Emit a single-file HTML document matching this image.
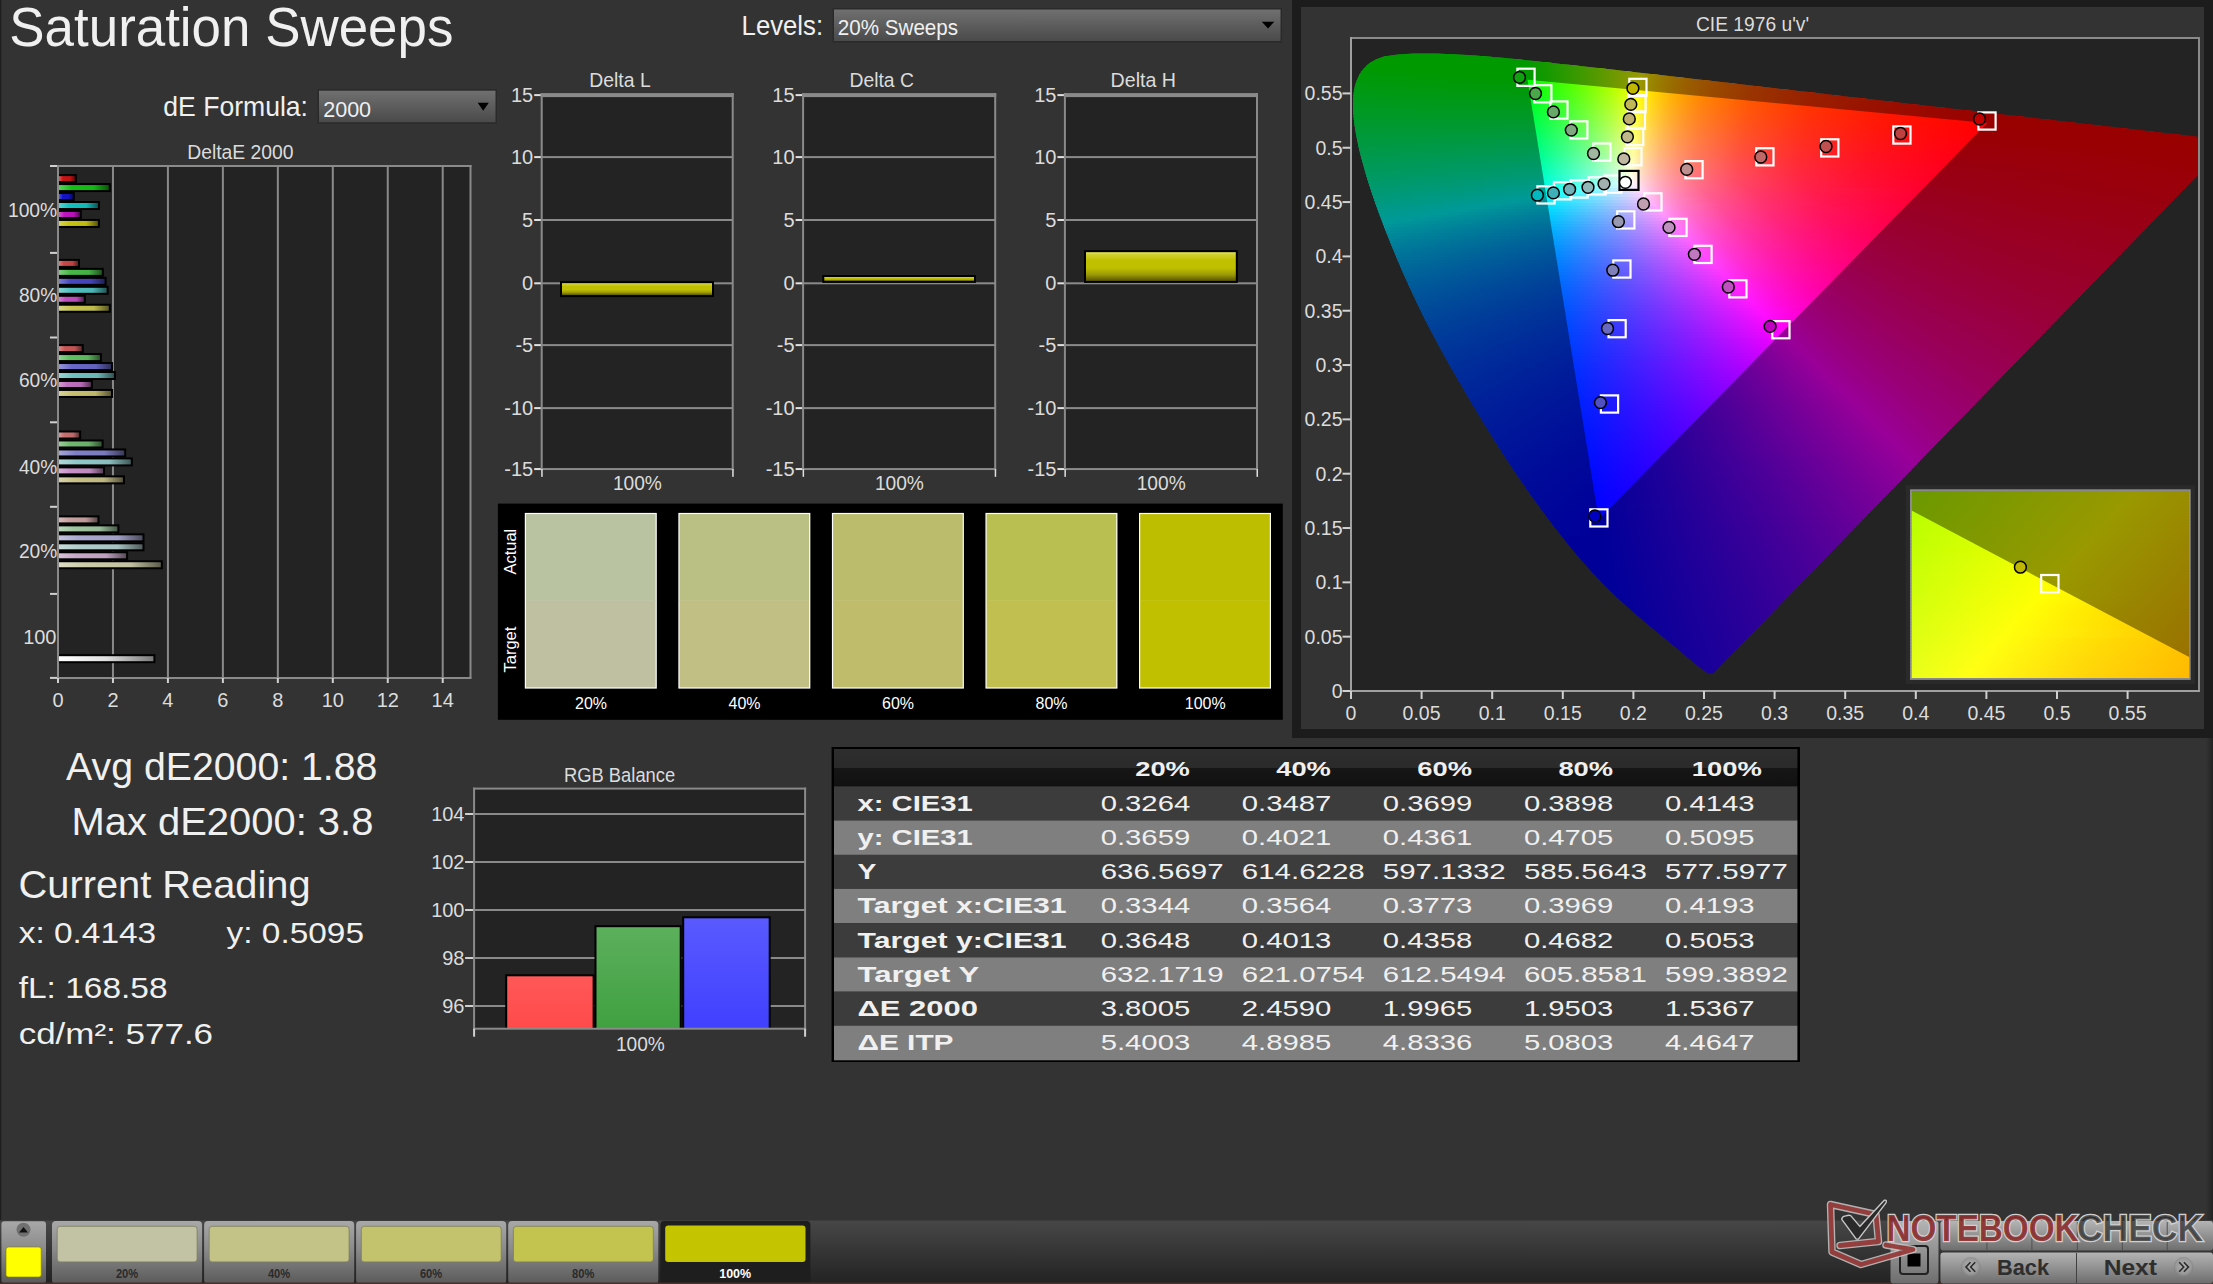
<!DOCTYPE html>
<html><head><meta charset="utf-8"><title>Saturation Sweeps</title>
<style>html,body{margin:0;padding:0;background:#333;overflow:hidden;width:2213px;height:1284px}svg{display:block}text{font-family:"Liberation Sans", sans-serif}</style>
</head><body>
<svg width="2213" height="1284" viewBox="0 0 2213 1284" font-family='"Liberation Sans", sans-serif'>
<defs><linearGradient id="rs" x1="0" y1="0" x2="1" y2="0"><stop offset="0" stop-color="#333"/><stop offset="1" stop-color="#222"/></linearGradient><linearGradient id="dd" x1="0" y1="0" x2="0" y2="1"><stop offset="0" stop-color="#707070"/><stop offset="1" stop-color="#4a4a4a"/></linearGradient><linearGradient id="b1" x1="0" y1="0" x2="1" y2="0"><stop offset="0" stop-color="#d85a5a"/><stop offset="0.25" stop-color="#c81414"/><stop offset="0.7" stop-color="#be1313"/><stop offset="1" stop-color="#5a0909"/></linearGradient><linearGradient id="b2" x1="0" y1="0" x2="1" y2="0"><stop offset="0" stop-color="#5ad35a"/><stop offset="0.25" stop-color="#14c014"/><stop offset="0.7" stop-color="#13b613"/><stop offset="1" stop-color="#095609"/></linearGradient><linearGradient id="b3" x1="0" y1="0" x2="1" y2="0"><stop offset="0" stop-color="#5a5ad8"/><stop offset="0.25" stop-color="#1414c8"/><stop offset="0.7" stop-color="#1313be"/><stop offset="1" stop-color="#09095a"/></linearGradient><linearGradient id="b4" x1="0" y1="0" x2="1" y2="0"><stop offset="0" stop-color="#5ad3d3"/><stop offset="0.25" stop-color="#14c0c0"/><stop offset="0.7" stop-color="#13b6b6"/><stop offset="1" stop-color="#095656"/></linearGradient><linearGradient id="b5" x1="0" y1="0" x2="1" y2="0"><stop offset="0" stop-color="#d35ad3"/><stop offset="0.25" stop-color="#c014c0"/><stop offset="0.7" stop-color="#b613b6"/><stop offset="1" stop-color="#560956"/></linearGradient><linearGradient id="b6" x1="0" y1="0" x2="1" y2="0"><stop offset="0" stop-color="#d8d65a"/><stop offset="0.25" stop-color="#c8c414"/><stop offset="0.7" stop-color="#beba13"/><stop offset="1" stop-color="#5a5809"/></linearGradient><linearGradient id="b7" x1="0" y1="0" x2="1" y2="0"><stop offset="0" stop-color="#d87f7f"/><stop offset="0.25" stop-color="#c84848"/><stop offset="0.7" stop-color="#be4444"/><stop offset="1" stop-color="#5a2020"/></linearGradient><linearGradient id="b8" x1="0" y1="0" x2="1" y2="0"><stop offset="0" stop-color="#7fcd7f"/><stop offset="0.25" stop-color="#48b848"/><stop offset="0.7" stop-color="#44af44"/><stop offset="1" stop-color="#205320"/></linearGradient><linearGradient id="b9" x1="0" y1="0" x2="1" y2="0"><stop offset="0" stop-color="#7f7fd3"/><stop offset="0.25" stop-color="#4848c0"/><stop offset="0.7" stop-color="#4444b6"/><stop offset="1" stop-color="#202056"/></linearGradient><linearGradient id="b10" x1="0" y1="0" x2="1" y2="0"><stop offset="0" stop-color="#84d3d3"/><stop offset="0.25" stop-color="#50c0c0"/><stop offset="0.7" stop-color="#4cb6b6"/><stop offset="1" stop-color="#245656"/></linearGradient><linearGradient id="b11" x1="0" y1="0" x2="1" y2="0"><stop offset="0" stop-color="#d384d3"/><stop offset="0.25" stop-color="#c050c0"/><stop offset="0.7" stop-color="#b64cb6"/><stop offset="1" stop-color="#562456"/></linearGradient><linearGradient id="b12" x1="0" y1="0" x2="1" y2="0"><stop offset="0" stop-color="#d8d684"/><stop offset="0.25" stop-color="#c8c450"/><stop offset="0.7" stop-color="#beba4c"/><stop offset="1" stop-color="#5a5824"/></linearGradient><linearGradient id="b13" x1="0" y1="0" x2="1" y2="0"><stop offset="0" stop-color="#d88a8a"/><stop offset="0.25" stop-color="#c85858"/><stop offset="0.7" stop-color="#be5454"/><stop offset="1" stop-color="#5a2828"/></linearGradient><linearGradient id="b14" x1="0" y1="0" x2="1" y2="0"><stop offset="0" stop-color="#90d390"/><stop offset="0.25" stop-color="#60c060"/><stop offset="0.7" stop-color="#5bb65b"/><stop offset="1" stop-color="#2b562b"/></linearGradient><linearGradient id="b15" x1="0" y1="0" x2="1" y2="0"><stop offset="0" stop-color="#9595d8"/><stop offset="0.25" stop-color="#6868c8"/><stop offset="0.7" stop-color="#6363be"/><stop offset="1" stop-color="#2f2f5a"/></linearGradient><linearGradient id="b16" x1="0" y1="0" x2="1" y2="0"><stop offset="0" stop-color="#9bd3d3"/><stop offset="0.25" stop-color="#70c0c0"/><stop offset="0.7" stop-color="#6ab6b6"/><stop offset="1" stop-color="#325656"/></linearGradient><linearGradient id="b17" x1="0" y1="0" x2="1" y2="0"><stop offset="0" stop-color="#d39bd3"/><stop offset="0.25" stop-color="#c070c0"/><stop offset="0.7" stop-color="#b66ab6"/><stop offset="1" stop-color="#563256"/></linearGradient><linearGradient id="b18" x1="0" y1="0" x2="1" y2="0"><stop offset="0" stop-color="#d8d39b"/><stop offset="0.25" stop-color="#c8c070"/><stop offset="0.7" stop-color="#beb66a"/><stop offset="1" stop-color="#5a5632"/></linearGradient><linearGradient id="b19" x1="0" y1="0" x2="1" y2="0"><stop offset="0" stop-color="#d89b9b"/><stop offset="0.25" stop-color="#c87070"/><stop offset="0.7" stop-color="#be6a6a"/><stop offset="1" stop-color="#5a3232"/></linearGradient><linearGradient id="b20" x1="0" y1="0" x2="1" y2="0"><stop offset="0" stop-color="#9bcd9b"/><stop offset="0.25" stop-color="#70b870"/><stop offset="0.7" stop-color="#6aaf6a"/><stop offset="1" stop-color="#325332"/></linearGradient><linearGradient id="b21" x1="0" y1="0" x2="1" y2="0"><stop offset="0" stop-color="#a6a6d8"/><stop offset="0.25" stop-color="#8080c8"/><stop offset="0.7" stop-color="#7a7abe"/><stop offset="1" stop-color="#3a3a5a"/></linearGradient><linearGradient id="b22" x1="0" y1="0" x2="1" y2="0"><stop offset="0" stop-color="#b1d8d8"/><stop offset="0.25" stop-color="#90c8c8"/><stop offset="0.7" stop-color="#89bebe"/><stop offset="1" stop-color="#415a5a"/></linearGradient><linearGradient id="b23" x1="0" y1="0" x2="1" y2="0"><stop offset="0" stop-color="#d8b1d8"/><stop offset="0.25" stop-color="#c890c8"/><stop offset="0.7" stop-color="#be89be"/><stop offset="1" stop-color="#5a415a"/></linearGradient><linearGradient id="b24" x1="0" y1="0" x2="1" y2="0"><stop offset="0" stop-color="#d8d3ac"/><stop offset="0.25" stop-color="#c8c088"/><stop offset="0.7" stop-color="#beb681"/><stop offset="1" stop-color="#5a563d"/></linearGradient><linearGradient id="b25" x1="0" y1="0" x2="1" y2="0"><stop offset="0" stop-color="#d8bcbc"/><stop offset="0.25" stop-color="#c8a0a0"/><stop offset="0.7" stop-color="#be9898"/><stop offset="1" stop-color="#5a4848"/></linearGradient><linearGradient id="b26" x1="0" y1="0" x2="1" y2="0"><stop offset="0" stop-color="#bcd6bc"/><stop offset="0.25" stop-color="#a0c4a0"/><stop offset="0.7" stop-color="#98ba98"/><stop offset="1" stop-color="#485848"/></linearGradient><linearGradient id="b27" x1="0" y1="0" x2="1" y2="0"><stop offset="0" stop-color="#c2c2de"/><stop offset="0.25" stop-color="#a8a8d0"/><stop offset="0.7" stop-color="#a0a0c6"/><stop offset="1" stop-color="#4c4c5e"/></linearGradient><linearGradient id="b28" x1="0" y1="0" x2="1" y2="0"><stop offset="0" stop-color="#c8dbdb"/><stop offset="0.25" stop-color="#b0cccc"/><stop offset="0.7" stop-color="#a7c2c2"/><stop offset="1" stop-color="#4f5c5c"/></linearGradient><linearGradient id="b29" x1="0" y1="0" x2="1" y2="0"><stop offset="0" stop-color="#d8c2d8"/><stop offset="0.25" stop-color="#c8a8c8"/><stop offset="0.7" stop-color="#bea0be"/><stop offset="1" stop-color="#5a4c5a"/></linearGradient><linearGradient id="b30" x1="0" y1="0" x2="1" y2="0"><stop offset="0" stop-color="#dbdbc4"/><stop offset="0.25" stop-color="#ccccaa"/><stop offset="0.7" stop-color="#c2c2a2"/><stop offset="1" stop-color="#5c5c4c"/></linearGradient><linearGradient id="gb" x1="0" y1="0" x2="1" y2="0"><stop offset="0" stop-color="#ffffff"/><stop offset="0.5" stop-color="#e0e0e0"/><stop offset="1" stop-color="#7a7a7a"/></linearGradient><linearGradient id="yb" x1="0" y1="0" x2="0" y2="1"><stop offset="0" stop-color="#e6e65c"/><stop offset="0.08" stop-color="#d0d030"/><stop offset="0.28" stop-color="#c0c000"/><stop offset="0.55" stop-color="#c0c000"/><stop offset="0.78" stop-color="#9c9a08"/><stop offset="1" stop-color="#585600"/></linearGradient><clipPath id="hs"><path d="M1713.6 673.0 L1713.6 672.9 L1713.5 672.9 L1713.5 672.9 L1713.4 672.9 L1713.4 673.0 L1713.3 673.1 L1713.3 673.1 L1713.2 673.2 L1713.1 673.3 L1713.1 673.3 L1713.0 673.3 L1712.9 673.3 L1712.8 673.3 L1712.7 673.3 L1712.6 673.3 L1712.5 673.4 L1712.4 673.5 L1712.3 673.5 L1712.2 673.6 L1712.0 673.7 L1711.9 673.7 L1711.8 673.7 L1711.7 673.7 L1711.5 673.7 L1711.3 673.7 L1711.2 673.7 L1711.0 673.7 L1710.8 673.7 L1710.6 673.7 L1710.4 673.7 L1710.2 673.7 L1710.0 673.8 L1709.8 673.8 L1709.5 673.8 L1709.2 673.7 L1708.9 673.6 L1708.6 673.4 L1708.1 673.2 L1707.7 673.0 L1707.1 672.7 L1706.5 672.3 L1705.8 671.8 L1705.1 671.3 L1704.3 670.8 L1703.5 670.2 L1702.6 669.6 L1701.7 668.9 L1700.7 668.1 L1699.7 667.3 L1698.5 666.4 L1697.3 665.4 L1695.9 664.4 L1694.5 663.2 L1693.0 662.0 L1691.4 660.6 L1689.7 659.2 L1688.0 657.8 L1686.2 656.2 L1684.3 654.6 L1682.4 653.0 L1680.3 651.2 L1678.2 649.5 L1675.9 647.6 L1673.5 645.6 L1671.0 643.5 L1668.3 641.3 L1665.4 639.0 L1662.4 636.5 L1659.3 634.0 L1656.1 631.3 L1652.7 628.6 L1649.3 625.7 L1645.7 622.8 L1642.0 619.6 L1638.1 616.3 L1634.0 612.7 L1629.8 608.9 L1625.3 604.9 L1620.8 600.7 L1616.1 596.4 L1611.2 591.8 L1606.2 586.9 L1601.0 581.6 L1595.5 575.8 L1589.6 569.4 L1583.3 562.2 L1576.5 554.4 L1569.5 545.9 L1562.1 536.7 L1554.4 527.0 L1546.5 516.6 L1538.4 505.6 L1530.1 494.0 L1521.6 481.8 L1512.9 468.9 L1504.1 455.5 L1495.2 441.4 L1486.1 426.9 L1477.0 412.0 L1467.9 396.7 L1458.9 381.3 L1449.9 365.7 L1441.2 350.0 L1432.7 334.3 L1424.6 318.7 L1417.0 303.1 L1409.8 287.8 L1403.0 272.7 L1396.7 258.0 L1390.8 243.7 L1385.3 229.9 L1380.2 216.6 L1375.6 204.0 L1371.5 191.9 L1367.8 180.5 L1364.6 169.8 L1361.8 159.8 L1359.4 150.4 L1357.5 141.7 L1355.9 133.6 L1354.7 126.0 L1353.8 119.0 L1353.2 112.5 L1353.0 106.5 L1353.0 100.9 L1353.4 95.6 L1354.0 90.8 L1354.9 86.3 L1356.1 82.2 L1357.6 78.4 L1359.3 74.9 L1361.2 71.8 L1363.4 68.9 L1365.8 66.4 L1368.3 64.1 L1371.1 62.2 L1374.0 60.5 L1377.1 59.1 L1380.3 57.8 L1383.6 56.8 L1387.1 56.0 L1390.6 55.4 L1394.3 54.9 L1398.0 54.5 L1401.8 54.2 L1405.7 53.9 L1409.7 53.7 L1413.7 53.6 L1417.7 53.5 L1421.7 53.5 L1425.7 53.5 L1429.7 53.5 L1433.7 53.6 L1437.8 53.6 L1441.8 53.7 L1445.9 53.9 L1450.1 54.1 L1454.3 54.3 L1458.5 54.5 L1462.9 54.7 L1467.3 55.0 L1471.7 55.3 L1476.2 55.6 L1480.8 56.0 L1485.5 56.4 L1490.3 56.8 L1495.1 57.2 L1500.0 57.6 L1505.0 58.1 L1510.1 58.6 L1515.3 59.1 L1520.6 59.6 L1526.0 60.2 L1531.6 60.7 L1537.2 61.3 L1542.9 61.9 L1548.8 62.5 L1554.8 63.2 L1560.9 63.9 L1567.2 64.5 L1573.5 65.2 L1580.0 66.0 L1586.7 66.7 L1593.4 67.5 L1600.3 68.2 L1607.4 69.0 L1614.6 69.8 L1621.9 70.7 L1629.4 71.5 L1637.1 72.4 L1644.8 73.3 L1652.8 74.2 L1660.8 75.1 L1669.1 76.0 L1677.4 77.0 L1685.9 78.0 L1694.6 79.0 L1703.4 80.0 L1712.3 81.0 L1721.4 82.1 L1730.7 83.1 L1740.0 84.2 L1749.5 85.3 L1759.2 86.4 L1768.9 87.5 L1778.7 88.7 L1788.7 89.8 L1798.7 91.0 L1808.9 92.1 L1819.1 93.3 L1829.4 94.5 L1839.8 95.7 L1850.1 96.9 L1860.5 98.1 L1870.7 99.3 L1880.8 100.4 L1890.9 101.6 L1900.9 102.7 L1910.8 103.9 L1920.7 105.0 L1930.6 106.2 L1940.5 107.3 L1950.3 108.4 L1959.9 109.5 L1969.4 110.6 L1978.6 111.7 L1987.6 112.7 L1996.5 113.7 L2005.1 114.7 L2013.5 115.6 L2021.7 116.6 L2029.7 117.5 L2037.5 118.4 L2045.1 119.3 L2052.4 120.1 L2059.5 121.0 L2066.4 121.8 L2073.0 122.5 L2079.4 123.3 L2085.6 124.0 L2091.6 124.6 L2097.3 125.3 L2102.9 125.9 L2108.2 126.5 L2113.4 127.1 L2118.4 127.7 L2123.2 128.3 L2127.8 128.8 L2132.4 129.3 L2136.8 129.8 L2141.1 130.3 L2145.3 130.8 L2149.3 131.3 L2153.3 131.7 L2157.1 132.2 L2160.8 132.6 L2164.3 133.0 L2167.8 133.4 L2171.1 133.8 L2174.2 134.2 L2177.3 134.5 L2180.2 134.8 L2183.0 135.1 L2185.6 135.4 L2188.1 135.7 L2190.5 136.0 L2192.8 136.3 L2194.9 136.5 L2197.0 136.7 L2198.9 137.0 L2200.7 137.2 L2202.5 137.4 L2204.2 137.6 L2205.8 137.8 L2207.3 137.9 L2208.7 138.1 L2210.1 138.3 L2211.3 138.4 L2212.5 138.5 L2213.6 138.7 L2214.5 138.8 L2215.4 138.9 L2216.2 139.0 L2216.9 139.0 L2217.7 139.1 L2218.4 139.2 L2219.1 139.3 L2219.8 139.4 L2220.4 139.4 L2221.0 139.5 L2221.6 139.6 L2222.1 139.6 L2222.6 139.7 L2223.1 139.8 L2223.7 139.8 L2224.2 139.9 L2224.7 139.9 L2225.2 140.0 L2225.8 140.1 L2226.3 140.1 L2226.8 140.2 L2227.3 140.2 L2227.7 140.3 L2228.2 140.3 L2228.6 140.4 L2228.9 140.4 L2229.3 140.5 L2229.6 140.5 L2229.9 140.5 L2230.1 140.6 L2230.3 140.6 L2230.5 140.6 L2230.6 140.6 L2230.7 140.6 L2230.9 140.7 L2230.9 140.7 L2231.0 140.7 L2231.1 140.7 L2231.2 140.7 L2231.2 140.7 Z"/></clipPath><clipPath id="pf"><rect x="1351" y="38" width="848" height="653"/></clipPath><linearGradient id="c0" gradientUnits="userSpaceOnUse" x1="1351.5" y1="0" x2="2198.5" y2="0"><stop offset="0.0000" stop-color="#00ff00"/><stop offset="0.2031" stop-color="#00ff00"/><stop offset="0.2409" stop-color="#39ff00"/><stop offset="0.2774" stop-color="#77ff00"/><stop offset="0.3105" stop-color="#b7ff00"/><stop offset="0.3436" stop-color="#ffff00"/><stop offset="0.3601" stop-color="#ffdc00"/><stop offset="0.3790" stop-color="#ffbd00"/><stop offset="0.4227" stop-color="#ff8800"/><stop offset="0.4782" stop-color="#ff5e00"/><stop offset="0.5478" stop-color="#ff3c00"/><stop offset="0.6529" stop-color="#ff1d00"/><stop offset="0.7910" stop-color="#ff0500"/><stop offset="0.8300" stop-color="#ff0000"/><stop offset="1.0000" stop-color="#ff0000"/></linearGradient><linearGradient id="c1" gradientUnits="userSpaceOnUse" x1="1351.5" y1="0" x2="2198.5" y2="0"><stop offset="0.0000" stop-color="#00ff00"/><stop offset="0.2031" stop-color="#00ff00"/><stop offset="0.2397" stop-color="#36ff00"/><stop offset="0.2763" stop-color="#75ff00"/><stop offset="0.3081" stop-color="#b2ff00"/><stop offset="0.3436" stop-color="#fffe00"/><stop offset="0.3601" stop-color="#ffdb00"/><stop offset="0.3790" stop-color="#ffbc00"/><stop offset="0.4227" stop-color="#ff8800"/><stop offset="0.4782" stop-color="#ff5d00"/><stop offset="0.5478" stop-color="#ff3c00"/><stop offset="0.6541" stop-color="#ff1c00"/><stop offset="0.7934" stop-color="#ff0400"/><stop offset="0.8264" stop-color="#ff0000"/><stop offset="1.0000" stop-color="#ff0000"/></linearGradient><linearGradient id="c2" gradientUnits="userSpaceOnUse" x1="1351.5" y1="0" x2="2198.5" y2="0"><stop offset="0.0000" stop-color="#00ff00"/><stop offset="0.2043" stop-color="#00ff00"/><stop offset="0.2409" stop-color="#38ff00"/><stop offset="0.2763" stop-color="#75ff00"/><stop offset="0.3070" stop-color="#b0ff00"/><stop offset="0.3436" stop-color="#fffd00"/><stop offset="0.3601" stop-color="#ffda00"/><stop offset="0.3790" stop-color="#ffbb00"/><stop offset="0.4227" stop-color="#ff8700"/><stop offset="0.4782" stop-color="#ff5d00"/><stop offset="0.5478" stop-color="#ff3b00"/><stop offset="0.6553" stop-color="#ff1b00"/><stop offset="0.7957" stop-color="#ff0300"/><stop offset="1.0000" stop-color="#ff0000"/></linearGradient><linearGradient id="c3" gradientUnits="userSpaceOnUse" x1="1351.5" y1="0" x2="2198.5" y2="0"><stop offset="0.0000" stop-color="#00ff00"/><stop offset="0.2043" stop-color="#00ff00"/><stop offset="0.2409" stop-color="#37ff00"/><stop offset="0.2774" stop-color="#77ff00"/><stop offset="0.3105" stop-color="#b8ff00"/><stop offset="0.3424" stop-color="#ffff00"/><stop offset="0.3589" stop-color="#ffdc00"/><stop offset="0.3778" stop-color="#ffbc00"/><stop offset="0.4215" stop-color="#ff8700"/><stop offset="0.4770" stop-color="#ff5d00"/><stop offset="0.5466" stop-color="#ff3b00"/><stop offset="0.6541" stop-color="#ff1b00"/><stop offset="0.7957" stop-color="#ff0300"/><stop offset="1.0000" stop-color="#ff0000"/></linearGradient><linearGradient id="c4" gradientUnits="userSpaceOnUse" x1="1351.5" y1="0" x2="2198.5" y2="0"><stop offset="0.0000" stop-color="#00ff04"/><stop offset="0.2054" stop-color="#00ff00"/><stop offset="0.2420" stop-color="#39ff00"/><stop offset="0.2774" stop-color="#76ff00"/><stop offset="0.3093" stop-color="#b6ff00"/><stop offset="0.3424" stop-color="#fffe00"/><stop offset="0.3589" stop-color="#ffdb00"/><stop offset="0.3778" stop-color="#ffbb00"/><stop offset="0.4215" stop-color="#ff8600"/><stop offset="0.4770" stop-color="#ff5c00"/><stop offset="0.5466" stop-color="#ff3a00"/><stop offset="0.6553" stop-color="#ff1a00"/><stop offset="0.7969" stop-color="#ff0200"/><stop offset="1.0000" stop-color="#ff0000"/></linearGradient><linearGradient id="c5" gradientUnits="userSpaceOnUse" x1="1351.5" y1="0" x2="2198.5" y2="0"><stop offset="0.0000" stop-color="#00ff07"/><stop offset="0.0779" stop-color="#00ff00"/><stop offset="0.2054" stop-color="#00ff00"/><stop offset="0.2409" stop-color="#36ff00"/><stop offset="0.2763" stop-color="#74ff00"/><stop offset="0.3070" stop-color="#b1ff00"/><stop offset="0.3424" stop-color="#fffd00"/><stop offset="0.3589" stop-color="#ffda00"/><stop offset="0.3778" stop-color="#ffba00"/><stop offset="0.4215" stop-color="#ff8500"/><stop offset="0.4770" stop-color="#ff5b00"/><stop offset="0.5466" stop-color="#ff3900"/><stop offset="0.6553" stop-color="#ff1a00"/><stop offset="0.7993" stop-color="#ff0200"/><stop offset="1.0000" stop-color="#ff0000"/></linearGradient><linearGradient id="c6" gradientUnits="userSpaceOnUse" x1="1351.5" y1="0" x2="2198.5" y2="0"><stop offset="0.0000" stop-color="#00ff0b"/><stop offset="0.1157" stop-color="#00ff00"/><stop offset="0.2066" stop-color="#00ff00"/><stop offset="0.2420" stop-color="#38ff00"/><stop offset="0.2763" stop-color="#74ff00"/><stop offset="0.3058" stop-color="#afff00"/><stop offset="0.3424" stop-color="#fffd00"/><stop offset="0.3589" stop-color="#ffd900"/><stop offset="0.3778" stop-color="#ffb900"/><stop offset="0.4215" stop-color="#ff8500"/><stop offset="0.4770" stop-color="#ff5a00"/><stop offset="0.5466" stop-color="#ff3900"/><stop offset="0.6564" stop-color="#ff1900"/><stop offset="0.8017" stop-color="#ff0100"/><stop offset="1.0000" stop-color="#ff0000"/></linearGradient><linearGradient id="c7" gradientUnits="userSpaceOnUse" x1="1351.5" y1="0" x2="2198.5" y2="0"><stop offset="0.0000" stop-color="#00ff0f"/><stop offset="0.1523" stop-color="#00ff00"/><stop offset="0.2066" stop-color="#00ff00"/><stop offset="0.2420" stop-color="#37ff00"/><stop offset="0.2774" stop-color="#76ff00"/><stop offset="0.3093" stop-color="#b6ff00"/><stop offset="0.3412" stop-color="#ffff00"/><stop offset="0.3577" stop-color="#ffdb00"/><stop offset="0.3766" stop-color="#ffba00"/><stop offset="0.3967" stop-color="#ff9f00"/><stop offset="0.4203" stop-color="#ff8500"/><stop offset="0.4758" stop-color="#ff5a00"/><stop offset="0.5443" stop-color="#ff3900"/><stop offset="0.6541" stop-color="#ff1900"/><stop offset="0.8005" stop-color="#ff0100"/><stop offset="1.0000" stop-color="#ff0000"/></linearGradient><linearGradient id="c8" gradientUnits="userSpaceOnUse" x1="1351.5" y1="0" x2="2198.5" y2="0"><stop offset="0.0000" stop-color="#00ff12"/><stop offset="0.2078" stop-color="#00ff00"/><stop offset="0.2432" stop-color="#38ff00"/><stop offset="0.2774" stop-color="#76ff00"/><stop offset="0.3081" stop-color="#b4ff00"/><stop offset="0.3412" stop-color="#fffe00"/><stop offset="0.3577" stop-color="#ffda00"/><stop offset="0.3754" stop-color="#ffbb00"/><stop offset="0.3955" stop-color="#ff9f00"/><stop offset="0.4191" stop-color="#ff8500"/><stop offset="0.4746" stop-color="#ff5a00"/><stop offset="0.5443" stop-color="#ff3800"/><stop offset="0.6553" stop-color="#ff1800"/><stop offset="0.8017" stop-color="#ff0000"/><stop offset="1.0000" stop-color="#ff0000"/></linearGradient><linearGradient id="c9" gradientUnits="userSpaceOnUse" x1="1351.5" y1="0" x2="2198.5" y2="0"><stop offset="0.0000" stop-color="#00ff16"/><stop offset="0.2078" stop-color="#00ff03"/><stop offset="0.2420" stop-color="#36ff00"/><stop offset="0.2763" stop-color="#73ff00"/><stop offset="0.3058" stop-color="#afff00"/><stop offset="0.3412" stop-color="#fffd00"/><stop offset="0.3577" stop-color="#ffd900"/><stop offset="0.3754" stop-color="#ffba00"/><stop offset="0.3955" stop-color="#ff9e00"/><stop offset="0.4191" stop-color="#ff8400"/><stop offset="0.4746" stop-color="#ff5900"/><stop offset="0.5443" stop-color="#ff3800"/><stop offset="0.6529" stop-color="#ff1800"/><stop offset="0.7981" stop-color="#ff0000"/><stop offset="1.0000" stop-color="#ff0000"/></linearGradient><linearGradient id="c10" gradientUnits="userSpaceOnUse" x1="1351.5" y1="0" x2="2198.5" y2="0"><stop offset="0.0000" stop-color="#00ff1a"/><stop offset="0.2090" stop-color="#00ff08"/><stop offset="0.2444" stop-color="#39ff03"/><stop offset="0.2786" stop-color="#78ff00"/><stop offset="0.3105" stop-color="#baff00"/><stop offset="0.3400" stop-color="#ffff00"/><stop offset="0.3566" stop-color="#ffda00"/><stop offset="0.3743" stop-color="#ffbb00"/><stop offset="0.3943" stop-color="#ff9f00"/><stop offset="0.4179" stop-color="#ff8500"/><stop offset="0.4734" stop-color="#ff5900"/><stop offset="0.5431" stop-color="#ff3700"/><stop offset="0.6517" stop-color="#ff1800"/><stop offset="0.7946" stop-color="#ff0000"/><stop offset="1.0000" stop-color="#ff0000"/></linearGradient><linearGradient id="c11" gradientUnits="userSpaceOnUse" x1="1351.5" y1="0" x2="2198.5" y2="0"><stop offset="0.0000" stop-color="#00ff1e"/><stop offset="0.2090" stop-color="#00ff0d"/><stop offset="0.2432" stop-color="#37ff09"/><stop offset="0.2774" stop-color="#75ff04"/><stop offset="0.3081" stop-color="#b5ff00"/><stop offset="0.3400" stop-color="#fffe00"/><stop offset="0.3566" stop-color="#ffd900"/><stop offset="0.3743" stop-color="#ffba00"/><stop offset="0.3943" stop-color="#ff9e00"/><stop offset="0.4179" stop-color="#ff8400"/><stop offset="0.4734" stop-color="#ff5900"/><stop offset="0.5431" stop-color="#ff3700"/><stop offset="0.6505" stop-color="#ff1800"/><stop offset="0.7910" stop-color="#ff0000"/><stop offset="1.0000" stop-color="#ff0000"/></linearGradient><linearGradient id="c12" gradientUnits="userSpaceOnUse" x1="1351.5" y1="0" x2="2198.5" y2="0"><stop offset="0.0000" stop-color="#00ff21"/><stop offset="0.2102" stop-color="#00ff12"/><stop offset="0.2444" stop-color="#38ff0e"/><stop offset="0.2774" stop-color="#75ff0a"/><stop offset="0.3070" stop-color="#b2ff06"/><stop offset="0.3400" stop-color="#fffd00"/><stop offset="0.3566" stop-color="#ffd900"/><stop offset="0.3743" stop-color="#ffb900"/><stop offset="0.3943" stop-color="#ff9d00"/><stop offset="0.4179" stop-color="#ff8300"/><stop offset="0.4734" stop-color="#ff5800"/><stop offset="0.5431" stop-color="#ff3600"/><stop offset="0.6482" stop-color="#ff1800"/><stop offset="0.7875" stop-color="#ff0000"/><stop offset="1.0000" stop-color="#ff0000"/></linearGradient><linearGradient id="c13" gradientUnits="userSpaceOnUse" x1="1351.5" y1="0" x2="2198.5" y2="0"><stop offset="0.0000" stop-color="#00ff25"/><stop offset="0.2102" stop-color="#00ff17"/><stop offset="0.2432" stop-color="#36ff13"/><stop offset="0.2763" stop-color="#72ff10"/><stop offset="0.3046" stop-color="#adff0c"/><stop offset="0.3400" stop-color="#fffd07"/><stop offset="0.3566" stop-color="#ffd804"/><stop offset="0.3743" stop-color="#ffb801"/><stop offset="0.3943" stop-color="#ff9c00"/><stop offset="0.4179" stop-color="#ff8200"/><stop offset="0.4734" stop-color="#ff5700"/><stop offset="0.5431" stop-color="#ff3500"/><stop offset="0.6470" stop-color="#ff1700"/><stop offset="0.7839" stop-color="#ff0000"/><stop offset="1.0000" stop-color="#ff0000"/></linearGradient><linearGradient id="c14" gradientUnits="userSpaceOnUse" x1="1351.5" y1="0" x2="2198.5" y2="0"><stop offset="0.0000" stop-color="#00ff29"/><stop offset="0.2113" stop-color="#01ff1c"/><stop offset="0.2456" stop-color="#39ff19"/><stop offset="0.2786" stop-color="#77ff15"/><stop offset="0.3093" stop-color="#b8ff12"/><stop offset="0.3388" stop-color="#ffff0e"/><stop offset="0.3554" stop-color="#ffd90a"/><stop offset="0.3731" stop-color="#ffb906"/><stop offset="0.3932" stop-color="#ff9d03"/><stop offset="0.4168" stop-color="#ff8200"/><stop offset="0.4711" stop-color="#ff5800"/><stop offset="0.5407" stop-color="#ff3600"/><stop offset="0.6446" stop-color="#ff1700"/><stop offset="0.7816" stop-color="#ff0000"/><stop offset="1.0000" stop-color="#ff0000"/></linearGradient><linearGradient id="c15" gradientUnits="userSpaceOnUse" x1="1351.5" y1="0" x2="2198.5" y2="0"><stop offset="0.0000" stop-color="#00ff2d"/><stop offset="0.2113" stop-color="#00ff21"/><stop offset="0.2444" stop-color="#36ff1f"/><stop offset="0.2774" stop-color="#74ff1b"/><stop offset="0.3070" stop-color="#b3ff18"/><stop offset="0.3388" stop-color="#fffe14"/><stop offset="0.3554" stop-color="#ffd810"/><stop offset="0.3731" stop-color="#ffb80b"/><stop offset="0.3932" stop-color="#ff9c08"/><stop offset="0.4168" stop-color="#ff8104"/><stop offset="0.4711" stop-color="#ff5700"/><stop offset="0.5407" stop-color="#ff3500"/><stop offset="0.6434" stop-color="#ff1700"/><stop offset="0.7780" stop-color="#ff0000"/><stop offset="1.0000" stop-color="#ff0000"/></linearGradient><linearGradient id="c16" gradientUnits="userSpaceOnUse" x1="1351.5" y1="0" x2="2198.5" y2="0"><stop offset="0.0000" stop-color="#00ff31"/><stop offset="0.2125" stop-color="#01ff27"/><stop offset="0.2456" stop-color="#38ff24"/><stop offset="0.2774" stop-color="#74ff21"/><stop offset="0.3058" stop-color="#b1ff1f"/><stop offset="0.3388" stop-color="#fffd1b"/><stop offset="0.3554" stop-color="#ffd715"/><stop offset="0.3731" stop-color="#ffb711"/><stop offset="0.3932" stop-color="#ff9b0c"/><stop offset="0.4168" stop-color="#ff8108"/><stop offset="0.4711" stop-color="#ff5602"/><stop offset="0.5407" stop-color="#ff3400"/><stop offset="0.6423" stop-color="#ff1700"/><stop offset="0.7745" stop-color="#ff0000"/><stop offset="1.0000" stop-color="#ff0000"/></linearGradient><linearGradient id="c17" gradientUnits="userSpaceOnUse" x1="1351.5" y1="0" x2="2198.5" y2="0"><stop offset="0.0000" stop-color="#00ff35"/><stop offset="0.2125" stop-color="#00ff2c"/><stop offset="0.2456" stop-color="#37ff2a"/><stop offset="0.2786" stop-color="#76ff28"/><stop offset="0.3093" stop-color="#b9ff25"/><stop offset="0.3377" stop-color="#ffff22"/><stop offset="0.3542" stop-color="#ffd91c"/><stop offset="0.3719" stop-color="#ffb816"/><stop offset="0.3920" stop-color="#ff9c11"/><stop offset="0.4144" stop-color="#ff820d"/><stop offset="0.4699" stop-color="#ff5605"/><stop offset="0.5396" stop-color="#ff3400"/><stop offset="0.6399" stop-color="#ff1700"/><stop offset="0.7710" stop-color="#ff0000"/><stop offset="1.0000" stop-color="#ff0000"/></linearGradient><linearGradient id="c18" gradientUnits="userSpaceOnUse" x1="1351.5" y1="0" x2="2198.5" y2="0"><stop offset="0.0000" stop-color="#00ff39"/><stop offset="0.2137" stop-color="#01ff31"/><stop offset="0.2468" stop-color="#39ff30"/><stop offset="0.2786" stop-color="#76ff2e"/><stop offset="0.3081" stop-color="#b7ff2c"/><stop offset="0.3377" stop-color="#fffe29"/><stop offset="0.3542" stop-color="#ffd822"/><stop offset="0.3719" stop-color="#ffb71c"/><stop offset="0.3920" stop-color="#ff9b16"/><stop offset="0.4144" stop-color="#ff8111"/><stop offset="0.4699" stop-color="#ff5509"/><stop offset="0.5396" stop-color="#ff3302"/><stop offset="0.6387" stop-color="#ff1600"/><stop offset="0.7674" stop-color="#ff0000"/><stop offset="1.0000" stop-color="#ff0000"/></linearGradient><linearGradient id="c19" gradientUnits="userSpaceOnUse" x1="1351.5" y1="0" x2="2198.5" y2="0"><stop offset="0.0000" stop-color="#00ff3d"/><stop offset="0.2137" stop-color="#00ff37"/><stop offset="0.2456" stop-color="#36ff36"/><stop offset="0.2774" stop-color="#74ff34"/><stop offset="0.3058" stop-color="#b1ff33"/><stop offset="0.3377" stop-color="#fffd30"/><stop offset="0.3542" stop-color="#ffd728"/><stop offset="0.3719" stop-color="#ffb721"/><stop offset="0.3920" stop-color="#ff9a1b"/><stop offset="0.4144" stop-color="#ff8015"/><stop offset="0.4699" stop-color="#ff550c"/><stop offset="0.5396" stop-color="#ff3305"/><stop offset="0.6375" stop-color="#ff1600"/><stop offset="0.7639" stop-color="#ff0000"/><stop offset="1.0000" stop-color="#ff0000"/></linearGradient><linearGradient id="c20" gradientUnits="userSpaceOnUse" x1="1351.5" y1="0" x2="2198.5" y2="0"><stop offset="0.0000" stop-color="#00ff41"/><stop offset="0.2149" stop-color="#01ff3d"/><stop offset="0.2468" stop-color="#38ff3c"/><stop offset="0.2774" stop-color="#73ff3b"/><stop offset="0.3046" stop-color="#afff39"/><stop offset="0.3377" stop-color="#fffc37"/><stop offset="0.3542" stop-color="#ffd62e"/><stop offset="0.3719" stop-color="#ffb627"/><stop offset="0.3920" stop-color="#ff9920"/><stop offset="0.4144" stop-color="#ff7f1a"/><stop offset="0.4699" stop-color="#ff540f"/><stop offset="0.5396" stop-color="#ff3207"/><stop offset="0.6352" stop-color="#ff1601"/><stop offset="0.7603" stop-color="#ff0000"/><stop offset="1.0000" stop-color="#ff0000"/></linearGradient><linearGradient id="c21" gradientUnits="userSpaceOnUse" x1="1351.5" y1="0" x2="2198.5" y2="0"><stop offset="0.0000" stop-color="#00ff45"/><stop offset="0.2149" stop-color="#00ff42"/><stop offset="0.2468" stop-color="#37ff42"/><stop offset="0.2786" stop-color="#76ff41"/><stop offset="0.3081" stop-color="#b7ff40"/><stop offset="0.3365" stop-color="#ffff3f"/><stop offset="0.3530" stop-color="#ffd735"/><stop offset="0.3707" stop-color="#ffb72d"/><stop offset="0.3908" stop-color="#ff9925"/><stop offset="0.4132" stop-color="#ff801e"/><stop offset="0.4675" stop-color="#ff5413"/><stop offset="0.5372" stop-color="#ff320a"/><stop offset="0.6328" stop-color="#ff1603"/><stop offset="0.7568" stop-color="#ff0000"/><stop offset="1.0000" stop-color="#ff0000"/></linearGradient><linearGradient id="c22" gradientUnits="userSpaceOnUse" x1="1351.5" y1="0" x2="2198.5" y2="0"><stop offset="0.0000" stop-color="#00ff4a"/><stop offset="0.2161" stop-color="#01ff48"/><stop offset="0.2479" stop-color="#39ff48"/><stop offset="0.2786" stop-color="#75ff48"/><stop offset="0.3070" stop-color="#b5ff47"/><stop offset="0.3365" stop-color="#fffe47"/><stop offset="0.3530" stop-color="#ffd63b"/><stop offset="0.3707" stop-color="#ffb632"/><stop offset="0.3908" stop-color="#ff982a"/><stop offset="0.4132" stop-color="#ff7f23"/><stop offset="0.4675" stop-color="#ff5416"/><stop offset="0.5372" stop-color="#ff320d"/><stop offset="0.6316" stop-color="#ff1605"/><stop offset="0.7532" stop-color="#ff0000"/><stop offset="1.0000" stop-color="#ff0000"/></linearGradient><linearGradient id="c23" gradientUnits="userSpaceOnUse" x1="1351.5" y1="0" x2="2198.5" y2="0"><stop offset="0.0000" stop-color="#00ff4e"/><stop offset="0.2161" stop-color="#00ff4e"/><stop offset="0.2479" stop-color="#38ff4e"/><stop offset="0.2786" stop-color="#75ff4e"/><stop offset="0.3046" stop-color="#afff4e"/><stop offset="0.3365" stop-color="#fffd4e"/><stop offset="0.3530" stop-color="#ffd542"/><stop offset="0.3707" stop-color="#ffb538"/><stop offset="0.3908" stop-color="#ff972f"/><stop offset="0.4132" stop-color="#ff7e27"/><stop offset="0.4675" stop-color="#ff531a"/><stop offset="0.5372" stop-color="#ff310f"/><stop offset="0.6305" stop-color="#ff1507"/><stop offset="0.7497" stop-color="#ff0000"/><stop offset="1.0000" stop-color="#ff0000"/></linearGradient><linearGradient id="c24" gradientUnits="userSpaceOnUse" x1="1351.5" y1="0" x2="2198.5" y2="0"><stop offset="0.0000" stop-color="#00ff52"/><stop offset="0.2172" stop-color="#01ff54"/><stop offset="0.2491" stop-color="#3aff55"/><stop offset="0.2798" stop-color="#77ff55"/><stop offset="0.3081" stop-color="#b8ff56"/><stop offset="0.3353" stop-color="#ffff56"/><stop offset="0.3506" stop-color="#ffda4a"/><stop offset="0.3684" stop-color="#ffb83f"/><stop offset="0.3884" stop-color="#ff9a35"/><stop offset="0.4109" stop-color="#ff7f2c"/><stop offset="0.4652" stop-color="#ff531e"/><stop offset="0.5360" stop-color="#ff3112"/><stop offset="0.6281" stop-color="#ff1509"/><stop offset="0.7462" stop-color="#ff0002"/><stop offset="1.0000" stop-color="#ff0000"/></linearGradient><linearGradient id="c25" gradientUnits="userSpaceOnUse" x1="1351.5" y1="0" x2="2198.5" y2="0"><stop offset="0.0000" stop-color="#00ff56"/><stop offset="0.2172" stop-color="#00ff5a"/><stop offset="0.2491" stop-color="#39ff5b"/><stop offset="0.2798" stop-color="#77ff5c"/><stop offset="0.3070" stop-color="#b6ff5d"/><stop offset="0.3353" stop-color="#fffe5e"/><stop offset="0.3506" stop-color="#ffd951"/><stop offset="0.3684" stop-color="#ffb744"/><stop offset="0.3884" stop-color="#ff993a"/><stop offset="0.4109" stop-color="#ff7e31"/><stop offset="0.4652" stop-color="#ff5321"/><stop offset="0.5348" stop-color="#ff3015"/><stop offset="0.6257" stop-color="#ff150b"/><stop offset="0.7426" stop-color="#ff0004"/><stop offset="1.0000" stop-color="#ff0000"/></linearGradient><linearGradient id="c26" gradientUnits="userSpaceOnUse" x1="1351.5" y1="0" x2="2198.5" y2="0"><stop offset="0.0000" stop-color="#00ff5b"/><stop offset="0.2172" stop-color="#00ff60"/><stop offset="0.2456" stop-color="#32ff62"/><stop offset="0.2774" stop-color="#72ff63"/><stop offset="0.3046" stop-color="#b0ff64"/><stop offset="0.3353" stop-color="#fffd66"/><stop offset="0.3506" stop-color="#ffd857"/><stop offset="0.3684" stop-color="#ffb64a"/><stop offset="0.3884" stop-color="#ff983f"/><stop offset="0.4109" stop-color="#ff7d35"/><stop offset="0.4652" stop-color="#ff5225"/><stop offset="0.5348" stop-color="#ff3018"/><stop offset="0.6246" stop-color="#ff150e"/><stop offset="0.7391" stop-color="#ff0006"/><stop offset="1.0000" stop-color="#ff0000"/></linearGradient><linearGradient id="c27" gradientUnits="userSpaceOnUse" x1="1351.5" y1="0" x2="2198.5" y2="0"><stop offset="0.0000" stop-color="#00ff5f"/><stop offset="0.2184" stop-color="#00ff67"/><stop offset="0.2491" stop-color="#38ff68"/><stop offset="0.2786" stop-color="#74ff6a"/><stop offset="0.3034" stop-color="#aeff6c"/><stop offset="0.3353" stop-color="#fffc6d"/><stop offset="0.3506" stop-color="#ffd75e"/><stop offset="0.3684" stop-color="#ffb550"/><stop offset="0.3884" stop-color="#ff9744"/><stop offset="0.4109" stop-color="#ff7c3a"/><stop offset="0.4652" stop-color="#ff5128"/><stop offset="0.5348" stop-color="#ff2f1a"/><stop offset="0.6234" stop-color="#ff1510"/><stop offset="0.7355" stop-color="#ff0007"/><stop offset="1.0000" stop-color="#ff0000"/></linearGradient><linearGradient id="c28" gradientUnits="userSpaceOnUse" x1="1351.5" y1="0" x2="2198.5" y2="0"><stop offset="0.0000" stop-color="#00ff64"/><stop offset="0.2184" stop-color="#00ff6d"/><stop offset="0.2468" stop-color="#32ff6f"/><stop offset="0.2786" stop-color="#74ff71"/><stop offset="0.3070" stop-color="#b7ff74"/><stop offset="0.3341" stop-color="#ffff76"/><stop offset="0.3495" stop-color="#ffd866"/><stop offset="0.3672" stop-color="#ffb657"/><stop offset="0.3872" stop-color="#ff974a"/><stop offset="0.4097" stop-color="#ff7d3f"/><stop offset="0.4640" stop-color="#ff512c"/><stop offset="0.5336" stop-color="#ff2f1d"/><stop offset="0.6210" stop-color="#ff1412"/><stop offset="0.7332" stop-color="#ff0009"/><stop offset="1.0000" stop-color="#ff0000"/></linearGradient><linearGradient id="c29" gradientUnits="userSpaceOnUse" x1="1351.5" y1="0" x2="2198.5" y2="0"><stop offset="0.0000" stop-color="#00ff68"/><stop offset="0.2196" stop-color="#00ff74"/><stop offset="0.2503" stop-color="#39ff76"/><stop offset="0.2798" stop-color="#76ff79"/><stop offset="0.3058" stop-color="#b4ff7c"/><stop offset="0.3341" stop-color="#fffe7e"/><stop offset="0.3495" stop-color="#ffd76d"/><stop offset="0.3672" stop-color="#ffb55d"/><stop offset="0.3872" stop-color="#ff964f"/><stop offset="0.4097" stop-color="#ff7c43"/><stop offset="0.4640" stop-color="#ff502f"/><stop offset="0.5336" stop-color="#ff2e20"/><stop offset="0.6198" stop-color="#ff1414"/><stop offset="0.7296" stop-color="#ff000b"/><stop offset="1.0000" stop-color="#ff0000"/></linearGradient><linearGradient id="c30" gradientUnits="userSpaceOnUse" x1="1351.5" y1="0" x2="2198.5" y2="0"><stop offset="0.0000" stop-color="#00ff6d"/><stop offset="0.2196" stop-color="#00ff7a"/><stop offset="0.2468" stop-color="#31ff7d"/><stop offset="0.2774" stop-color="#71ff80"/><stop offset="0.3034" stop-color="#aeff83"/><stop offset="0.3341" stop-color="#fffd86"/><stop offset="0.3495" stop-color="#ffd674"/><stop offset="0.3672" stop-color="#ffb363"/><stop offset="0.3872" stop-color="#ff9555"/><stop offset="0.4097" stop-color="#ff7b48"/><stop offset="0.4640" stop-color="#ff4f33"/><stop offset="0.5336" stop-color="#ff2d23"/><stop offset="0.6187" stop-color="#ff1417"/><stop offset="0.7261" stop-color="#ff000d"/><stop offset="1.0000" stop-color="#ff0001"/></linearGradient><linearGradient id="c31" gradientUnits="userSpaceOnUse" x1="1351.5" y1="0" x2="2198.5" y2="0"><stop offset="0.0000" stop-color="#00ff71"/><stop offset="0.2208" stop-color="#00ff81"/><stop offset="0.2503" stop-color="#37ff84"/><stop offset="0.2786" stop-color="#73ff88"/><stop offset="0.3022" stop-color="#abff8b"/><stop offset="0.3341" stop-color="#fffc8e"/><stop offset="0.3495" stop-color="#ffd57b"/><stop offset="0.3672" stop-color="#ffb269"/><stop offset="0.3861" stop-color="#ff965b"/><stop offset="0.4085" stop-color="#ff7b4d"/><stop offset="0.4628" stop-color="#ff4f37"/><stop offset="0.5325" stop-color="#ff2d26"/><stop offset="0.6163" stop-color="#ff1419"/><stop offset="0.7226" stop-color="#ff000f"/><stop offset="1.0000" stop-color="#ff0002"/></linearGradient><linearGradient id="c32" gradientUnits="userSpaceOnUse" x1="1351.5" y1="0" x2="2198.5" y2="0"><stop offset="0.0000" stop-color="#00ff76"/><stop offset="0.2208" stop-color="#00ff88"/><stop offset="0.2491" stop-color="#34ff8b"/><stop offset="0.2786" stop-color="#73ff8f"/><stop offset="0.3058" stop-color="#b5ff94"/><stop offset="0.3329" stop-color="#fffe98"/><stop offset="0.3483" stop-color="#ffd783"/><stop offset="0.3660" stop-color="#ffb371"/><stop offset="0.3849" stop-color="#ff9661"/><stop offset="0.4073" stop-color="#ff7b53"/><stop offset="0.4616" stop-color="#ff4f3b"/><stop offset="0.5313" stop-color="#ff2d29"/><stop offset="0.6139" stop-color="#ff141b"/><stop offset="0.7190" stop-color="#ff0011"/><stop offset="1.0000" stop-color="#ff0003"/></linearGradient><linearGradient id="c33" gradientUnits="userSpaceOnUse" x1="1351.5" y1="0" x2="2198.5" y2="0"><stop offset="0.0000" stop-color="#00ff7a"/><stop offset="0.2220" stop-color="#00ff8f"/><stop offset="0.2515" stop-color="#38ff93"/><stop offset="0.2798" stop-color="#76ff97"/><stop offset="0.3046" stop-color="#b2ff9c"/><stop offset="0.3329" stop-color="#fffda1"/><stop offset="0.3483" stop-color="#ffd68b"/><stop offset="0.3648" stop-color="#ffb478"/><stop offset="0.3849" stop-color="#ff9566"/><stop offset="0.4073" stop-color="#ff7a57"/><stop offset="0.4616" stop-color="#ff4e3f"/><stop offset="0.5313" stop-color="#ff2c2b"/><stop offset="0.6128" stop-color="#ff131e"/><stop offset="0.7155" stop-color="#ff0013"/><stop offset="1.0000" stop-color="#ff0004"/></linearGradient><linearGradient id="c34" gradientUnits="userSpaceOnUse" x1="1351.5" y1="0" x2="2198.5" y2="0"><stop offset="0.0000" stop-color="#00ff7f"/><stop offset="0.2220" stop-color="#00ff96"/><stop offset="0.2491" stop-color="#33ff9a"/><stop offset="0.2774" stop-color="#70ff9f"/><stop offset="0.3022" stop-color="#acffa4"/><stop offset="0.3329" stop-color="#fffca9"/><stop offset="0.3483" stop-color="#ffd592"/><stop offset="0.3648" stop-color="#ffb37e"/><stop offset="0.3849" stop-color="#ff946c"/><stop offset="0.4073" stop-color="#ff795c"/><stop offset="0.4616" stop-color="#ff4d42"/><stop offset="0.5313" stop-color="#ff2b2e"/><stop offset="0.6116" stop-color="#ff1320"/><stop offset="0.7119" stop-color="#ff0015"/><stop offset="1.0000" stop-color="#ff0005"/></linearGradient><linearGradient id="c35" gradientUnits="userSpaceOnUse" x1="1351.5" y1="0" x2="2198.5" y2="0"><stop offset="0.0000" stop-color="#00ff84"/><stop offset="0.2231" stop-color="#00ff9d"/><stop offset="0.2527" stop-color="#39ffa2"/><stop offset="0.2810" stop-color="#78ffa8"/><stop offset="0.3070" stop-color="#b9ffae"/><stop offset="0.3318" stop-color="#ffffb4"/><stop offset="0.3471" stop-color="#ffd69b"/><stop offset="0.3636" stop-color="#ffb486"/><stop offset="0.3825" stop-color="#ff9674"/><stop offset="0.4050" stop-color="#ff7b63"/><stop offset="0.4593" stop-color="#ff4e47"/><stop offset="0.5289" stop-color="#ff2b32"/><stop offset="0.6080" stop-color="#ff1323"/><stop offset="0.7084" stop-color="#ff0017"/><stop offset="1.0000" stop-color="#ff0006"/></linearGradient><linearGradient id="c36" gradientUnits="userSpaceOnUse" x1="1351.5" y1="0" x2="2198.5" y2="0"><stop offset="0.0000" stop-color="#00ff89"/><stop offset="0.2231" stop-color="#00ffa4"/><stop offset="0.2503" stop-color="#34ffa9"/><stop offset="0.2798" stop-color="#75ffb0"/><stop offset="0.3046" stop-color="#b3ffb6"/><stop offset="0.3318" stop-color="#fffebd"/><stop offset="0.3471" stop-color="#ffd5a2"/><stop offset="0.3636" stop-color="#ffb38d"/><stop offset="0.3825" stop-color="#ff9579"/><stop offset="0.4050" stop-color="#ff7a68"/><stop offset="0.4593" stop-color="#ff4d4b"/><stop offset="0.5289" stop-color="#ff2a34"/><stop offset="0.6068" stop-color="#ff1325"/><stop offset="0.7048" stop-color="#ff0019"/><stop offset="1.0000" stop-color="#ff0007"/></linearGradient><linearGradient id="c37" gradientUnits="userSpaceOnUse" x1="1351.5" y1="0" x2="2198.5" y2="0"><stop offset="0.0000" stop-color="#00ff8d"/><stop offset="0.2243" stop-color="#00ffac"/><stop offset="0.2527" stop-color="#38ffb2"/><stop offset="0.2798" stop-color="#75ffb8"/><stop offset="0.3034" stop-color="#b0ffbe"/><stop offset="0.3318" stop-color="#fffdc5"/><stop offset="0.3471" stop-color="#ffd4aa"/><stop offset="0.3636" stop-color="#ffb293"/><stop offset="0.3825" stop-color="#ff947f"/><stop offset="0.4050" stop-color="#ff796d"/><stop offset="0.4593" stop-color="#ff4c4e"/><stop offset="0.5289" stop-color="#ff2a37"/><stop offset="0.6057" stop-color="#ff1328"/><stop offset="0.7013" stop-color="#ff001b"/><stop offset="1.0000" stop-color="#ff0008"/></linearGradient><linearGradient id="c38" gradientUnits="userSpaceOnUse" x1="1351.5" y1="0" x2="2198.5" y2="0"><stop offset="0.0000" stop-color="#00ff92"/><stop offset="0.1228" stop-color="#00ffa1"/><stop offset="0.2243" stop-color="#00ffb3"/><stop offset="0.2503" stop-color="#32ffb9"/><stop offset="0.2786" stop-color="#72ffc0"/><stop offset="0.3022" stop-color="#adffc7"/><stop offset="0.3306" stop-color="#ffffd1"/><stop offset="0.3318" stop-color="#fffcce"/><stop offset="0.3471" stop-color="#ffd3b2"/><stop offset="0.3636" stop-color="#ffb19a"/><stop offset="0.3825" stop-color="#ff9385"/><stop offset="0.4050" stop-color="#ff7872"/><stop offset="0.4593" stop-color="#ff4b52"/><stop offset="0.5289" stop-color="#ff293a"/><stop offset="0.6045" stop-color="#ff122a"/><stop offset="0.6978" stop-color="#ff001e"/><stop offset="1.0000" stop-color="#ff0009"/></linearGradient><linearGradient id="c39" gradientUnits="userSpaceOnUse" x1="1351.5" y1="0" x2="2198.5" y2="0"><stop offset="0.0000" stop-color="#00ff97"/><stop offset="0.1240" stop-color="#00ffa7"/><stop offset="0.2255" stop-color="#00ffbb"/><stop offset="0.2538" stop-color="#39ffc2"/><stop offset="0.2810" stop-color="#77ffca"/><stop offset="0.3058" stop-color="#b7ffd2"/><stop offset="0.3306" stop-color="#fffeda"/><stop offset="0.3459" stop-color="#ffd5bc"/><stop offset="0.3625" stop-color="#ffb2a2"/><stop offset="0.3813" stop-color="#ff948c"/><stop offset="0.4038" stop-color="#ff7878"/><stop offset="0.4569" stop-color="#ff4c57"/><stop offset="0.5266" stop-color="#ff293e"/><stop offset="0.6009" stop-color="#ff122d"/><stop offset="0.6942" stop-color="#ff0020"/><stop offset="1.0000" stop-color="#ff000a"/></linearGradient><linearGradient id="c40" gradientUnits="userSpaceOnUse" x1="1351.5" y1="0" x2="2198.5" y2="0"><stop offset="0.0000" stop-color="#00ff9c"/><stop offset="0.1240" stop-color="#00ffad"/><stop offset="0.2255" stop-color="#00ffc2"/><stop offset="0.2515" stop-color="#33ffc9"/><stop offset="0.2798" stop-color="#74ffd2"/><stop offset="0.3034" stop-color="#b1ffda"/><stop offset="0.3306" stop-color="#fffde3"/><stop offset="0.3459" stop-color="#ffd4c3"/><stop offset="0.3625" stop-color="#ffb1a9"/><stop offset="0.3813" stop-color="#ff9392"/><stop offset="0.4038" stop-color="#ff777d"/><stop offset="0.4569" stop-color="#ff4b5b"/><stop offset="0.5266" stop-color="#ff2841"/><stop offset="0.5998" stop-color="#ff1230"/><stop offset="0.6907" stop-color="#ff0022"/><stop offset="1.0000" stop-color="#ff000c"/></linearGradient><linearGradient id="c41" gradientUnits="userSpaceOnUse" x1="1351.5" y1="0" x2="2198.5" y2="0"><stop offset="0.0000" stop-color="#00ffa1"/><stop offset="0.1251" stop-color="#00ffb4"/><stop offset="0.2267" stop-color="#00ffcb"/><stop offset="0.2538" stop-color="#38ffd2"/><stop offset="0.2798" stop-color="#74ffdb"/><stop offset="0.3022" stop-color="#aeffe3"/><stop offset="0.3306" stop-color="#fffced"/><stop offset="0.3459" stop-color="#ffd2cb"/><stop offset="0.3625" stop-color="#ffb0b0"/><stop offset="0.3813" stop-color="#ff9298"/><stop offset="0.4038" stop-color="#ff7682"/><stop offset="0.4569" stop-color="#ff4a5f"/><stop offset="0.5266" stop-color="#ff2844"/><stop offset="0.5986" stop-color="#ff1232"/><stop offset="0.6871" stop-color="#ff0024"/><stop offset="0.8229" stop-color="#ff0017"/><stop offset="1.0000" stop-color="#ff000d"/></linearGradient><linearGradient id="c42" gradientUnits="userSpaceOnUse" x1="1351.5" y1="0" x2="2198.5" y2="0"><stop offset="0.0000" stop-color="#00ffa6"/><stop offset="0.1251" stop-color="#00ffba"/><stop offset="0.2267" stop-color="#00ffd2"/><stop offset="0.2538" stop-color="#37ffdb"/><stop offset="0.2810" stop-color="#76ffe4"/><stop offset="0.3058" stop-color="#b8ffee"/><stop offset="0.3294" stop-color="#fffff9"/><stop offset="0.3436" stop-color="#ffd7d8"/><stop offset="0.3601" stop-color="#ffb3bb"/><stop offset="0.3790" stop-color="#ff94a1"/><stop offset="0.4014" stop-color="#ff7789"/><stop offset="0.4545" stop-color="#ff4a64"/><stop offset="0.5242" stop-color="#ff2847"/><stop offset="0.5962" stop-color="#ff1235"/><stop offset="0.6848" stop-color="#ff0026"/><stop offset="0.8217" stop-color="#ff0019"/><stop offset="1.0000" stop-color="#ff000e"/></linearGradient><linearGradient id="c43" gradientUnits="userSpaceOnUse" x1="1351.5" y1="0" x2="2198.5" y2="0"><stop offset="0.0000" stop-color="#00ffab"/><stop offset="0.1251" stop-color="#00ffc1"/><stop offset="0.2279" stop-color="#00ffdb"/><stop offset="0.2763" stop-color="#6affec"/><stop offset="0.2987" stop-color="#a4fff5"/><stop offset="0.3200" stop-color="#e2ffff"/><stop offset="0.3318" stop-color="#fff7fc"/><stop offset="0.3471" stop-color="#ffcdd9"/><stop offset="0.3636" stop-color="#ffacbc"/><stop offset="0.3825" stop-color="#ff8ea2"/><stop offset="0.4050" stop-color="#ff728b"/><stop offset="0.4581" stop-color="#ff4766"/><stop offset="0.5277" stop-color="#ff2649"/><stop offset="0.5974" stop-color="#ff1137"/><stop offset="0.6812" stop-color="#ff0029"/><stop offset="0.8194" stop-color="#ff001a"/><stop offset="1.0000" stop-color="#ff000f"/></linearGradient><linearGradient id="c44" gradientUnits="userSpaceOnUse" x1="1351.5" y1="0" x2="2198.5" y2="0"><stop offset="0.0000" stop-color="#00ffb1"/><stop offset="0.1251" stop-color="#00ffc7"/><stop offset="0.2279" stop-color="#00ffe3"/><stop offset="0.2633" stop-color="#4bfff0"/><stop offset="0.2987" stop-color="#a5ffff"/><stop offset="0.3353" stop-color="#ffebfd"/><stop offset="0.3506" stop-color="#ffc4da"/><stop offset="0.3672" stop-color="#ffa4be"/><stop offset="0.3861" stop-color="#ff88a4"/><stop offset="0.4085" stop-color="#ff6e8d"/><stop offset="0.4628" stop-color="#ff4367"/><stop offset="0.5336" stop-color="#ff234a"/><stop offset="0.5986" stop-color="#ff1039"/><stop offset="0.6777" stop-color="#ff002b"/><stop offset="0.8170" stop-color="#ff001c"/><stop offset="1.0000" stop-color="#ff0010"/></linearGradient><linearGradient id="c45" gradientUnits="userSpaceOnUse" x1="1351.5" y1="0" x2="2198.5" y2="0"><stop offset="0.0000" stop-color="#00ffb6"/><stop offset="0.1263" stop-color="#00ffce"/><stop offset="0.2290" stop-color="#01ffec"/><stop offset="0.2538" stop-color="#35fff5"/><stop offset="0.2774" stop-color="#6cffff"/><stop offset="0.3388" stop-color="#ffe0fd"/><stop offset="0.3542" stop-color="#ffbbdb"/><stop offset="0.3707" stop-color="#ff9dbf"/><stop offset="0.3908" stop-color="#ff81a5"/><stop offset="0.4132" stop-color="#ff688e"/><stop offset="0.4687" stop-color="#ff3f68"/><stop offset="0.5396" stop-color="#ff204b"/><stop offset="0.6741" stop-color="#ff002e"/><stop offset="0.8146" stop-color="#ff001d"/><stop offset="1.0000" stop-color="#ff0011"/></linearGradient><linearGradient id="c46" gradientUnits="userSpaceOnUse" x1="1351.5" y1="0" x2="2198.5" y2="0"><stop offset="0.0000" stop-color="#00ffbb"/><stop offset="0.1263" stop-color="#00ffd5"/><stop offset="0.2290" stop-color="#00fff4"/><stop offset="0.2562" stop-color="#39ffff"/><stop offset="0.3424" stop-color="#ffd5fd"/><stop offset="0.3577" stop-color="#ffb3dc"/><stop offset="0.3754" stop-color="#ff94bf"/><stop offset="0.3955" stop-color="#ff7aa5"/><stop offset="0.4179" stop-color="#ff628f"/><stop offset="0.4734" stop-color="#ff3b69"/><stop offset="0.5455" stop-color="#ff1d4c"/><stop offset="0.6706" stop-color="#ff0030"/><stop offset="0.8123" stop-color="#ff001f"/><stop offset="1.0000" stop-color="#ff0012"/></linearGradient><linearGradient id="c47" gradientUnits="userSpaceOnUse" x1="1351.5" y1="0" x2="2198.5" y2="0"><stop offset="0.0000" stop-color="#00ffc0"/><stop offset="0.1275" stop-color="#00ffdc"/><stop offset="0.2302" stop-color="#01fffd"/><stop offset="0.2834" stop-color="#71eaff"/><stop offset="0.3459" stop-color="#ffccfd"/><stop offset="0.3613" stop-color="#ffabdd"/><stop offset="0.3790" stop-color="#ff8ec0"/><stop offset="0.3991" stop-color="#ff74a6"/><stop offset="0.4227" stop-color="#ff5d8f"/><stop offset="0.4793" stop-color="#ff376a"/><stop offset="0.5514" stop-color="#ff1a4d"/><stop offset="0.6671" stop-color="#ff0033"/><stop offset="0.8099" stop-color="#ff0021"/><stop offset="1.0000" stop-color="#ff0013"/></linearGradient><linearGradient id="c48" gradientUnits="userSpaceOnUse" x1="1351.5" y1="0" x2="2198.5" y2="0"><stop offset="0.0000" stop-color="#00ffc6"/><stop offset="0.1169" stop-color="#00ffe0"/><stop offset="0.2125" stop-color="#00ffff"/><stop offset="0.2302" stop-color="#00f8ff"/><stop offset="0.2845" stop-color="#6fe1ff"/><stop offset="0.3495" stop-color="#ffc2fd"/><stop offset="0.3660" stop-color="#ffa1db"/><stop offset="0.3837" stop-color="#ff86bf"/><stop offset="0.4274" stop-color="#ff5890"/><stop offset="0.4841" stop-color="#ff346b"/><stop offset="0.5573" stop-color="#ff184e"/><stop offset="0.6635" stop-color="#ff0035"/><stop offset="0.8076" stop-color="#ff0023"/><stop offset="1.0000" stop-color="#ff0014"/></linearGradient><linearGradient id="c49" gradientUnits="userSpaceOnUse" x1="1351.5" y1="0" x2="2198.5" y2="0"><stop offset="0.0000" stop-color="#00ffcb"/><stop offset="0.1039" stop-color="#00ffe3"/><stop offset="0.1913" stop-color="#00ffff"/><stop offset="0.2314" stop-color="#01f0ff"/><stop offset="0.2881" stop-color="#73d8ff"/><stop offset="0.3530" stop-color="#ffb9fd"/><stop offset="0.3695" stop-color="#ff9adc"/><stop offset="0.3872" stop-color="#ff80c1"/><stop offset="0.4085" stop-color="#ff68a7"/><stop offset="0.4321" stop-color="#ff5391"/><stop offset="0.4900" stop-color="#ff306b"/><stop offset="0.5632" stop-color="#ff154f"/><stop offset="0.6600" stop-color="#ff0038"/><stop offset="0.8052" stop-color="#ff0024"/><stop offset="1.0000" stop-color="#ff0015"/></linearGradient><linearGradient id="c50" gradientUnits="userSpaceOnUse" x1="1351.5" y1="0" x2="2198.5" y2="0"><stop offset="0.0000" stop-color="#00ffd1"/><stop offset="0.0909" stop-color="#00ffe6"/><stop offset="0.1700" stop-color="#00ffff"/><stop offset="0.2314" stop-color="#00e8ff"/><stop offset="0.2881" stop-color="#6fd0ff"/><stop offset="0.3566" stop-color="#ffb1fd"/><stop offset="0.3731" stop-color="#ff93dd"/><stop offset="0.3920" stop-color="#ff79c0"/><stop offset="0.4368" stop-color="#ff4f91"/><stop offset="0.4947" stop-color="#ff2d6d"/><stop offset="0.5691" stop-color="#ff1350"/><stop offset="0.6564" stop-color="#ff003b"/><stop offset="0.8028" stop-color="#ff0026"/><stop offset="1.0000" stop-color="#ff0017"/></linearGradient><linearGradient id="c51" gradientUnits="userSpaceOnUse" x1="1351.5" y1="0" x2="2198.5" y2="0"><stop offset="0.0000" stop-color="#00ffd6"/><stop offset="0.1488" stop-color="#00ffff"/><stop offset="0.2326" stop-color="#01e0ff"/><stop offset="0.2928" stop-color="#74c7ff"/><stop offset="0.3601" stop-color="#ffa8fd"/><stop offset="0.3754" stop-color="#ff8fe0"/><stop offset="0.3920" stop-color="#ff78c6"/><stop offset="0.4321" stop-color="#ff519a"/><stop offset="0.4829" stop-color="#ff3276"/><stop offset="0.5455" stop-color="#ff195a"/><stop offset="0.6529" stop-color="#ff003e"/><stop offset="0.8005" stop-color="#ff0028"/><stop offset="1.0000" stop-color="#ff0018"/></linearGradient><linearGradient id="c52" gradientUnits="userSpaceOnUse" x1="1351.5" y1="0" x2="2198.5" y2="0"><stop offset="0.0000" stop-color="#00ffdc"/><stop offset="0.1275" stop-color="#00ffff"/><stop offset="0.2326" stop-color="#00d9ff"/><stop offset="0.2928" stop-color="#70c1ff"/><stop offset="0.3636" stop-color="#ffa1fd"/><stop offset="0.3790" stop-color="#ff88e0"/><stop offset="0.3967" stop-color="#ff71c6"/><stop offset="0.4368" stop-color="#ff4d9a"/><stop offset="0.4876" stop-color="#ff2f77"/><stop offset="0.5502" stop-color="#ff175b"/><stop offset="0.6494" stop-color="#ff0040"/><stop offset="0.7981" stop-color="#ff002a"/><stop offset="1.0000" stop-color="#ff0019"/></linearGradient><linearGradient id="c53" gradientUnits="userSpaceOnUse" x1="1351.5" y1="0" x2="2198.5" y2="0"><stop offset="0.0000" stop-color="#00ffe2"/><stop offset="0.1063" stop-color="#00ffff"/><stop offset="0.2338" stop-color="#01d2ff"/><stop offset="0.2963" stop-color="#73b9ff"/><stop offset="0.3672" stop-color="#ff99fd"/><stop offset="0.3825" stop-color="#ff82e1"/><stop offset="0.4002" stop-color="#ff6cc7"/><stop offset="0.4404" stop-color="#ff499c"/><stop offset="0.4911" stop-color="#ff2c79"/><stop offset="0.5537" stop-color="#ff155d"/><stop offset="0.6458" stop-color="#ff0043"/><stop offset="0.7957" stop-color="#ff002b"/><stop offset="1.0000" stop-color="#ff001a"/></linearGradient><linearGradient id="c54" gradientUnits="userSpaceOnUse" x1="1351.5" y1="0" x2="2198.5" y2="0"><stop offset="0.0000" stop-color="#00ffe7"/><stop offset="0.0850" stop-color="#00ffff"/><stop offset="0.2338" stop-color="#00cbff"/><stop offset="0.2975" stop-color="#72b2ff"/><stop offset="0.3707" stop-color="#ff92fd"/><stop offset="0.4038" stop-color="#ff67c8"/><stop offset="0.4439" stop-color="#ff469d"/><stop offset="0.4947" stop-color="#ff2a7a"/><stop offset="0.5573" stop-color="#ff135e"/><stop offset="0.6434" stop-color="#ff0046"/><stop offset="0.7946" stop-color="#ff002d"/><stop offset="1.0000" stop-color="#ff001b"/></linearGradient><linearGradient id="c55" gradientUnits="userSpaceOnUse" x1="1351.5" y1="0" x2="2198.5" y2="0"><stop offset="0.0000" stop-color="#00ffed"/><stop offset="0.0638" stop-color="#00ffff"/><stop offset="0.2349" stop-color="#01c5ff"/><stop offset="0.3011" stop-color="#75abff"/><stop offset="0.3743" stop-color="#ff8bfe"/><stop offset="0.4073" stop-color="#ff63c9"/><stop offset="0.4486" stop-color="#ff419e"/><stop offset="0.4994" stop-color="#ff277b"/><stop offset="0.5620" stop-color="#ff115f"/><stop offset="0.6399" stop-color="#ff0049"/><stop offset="0.7910" stop-color="#ff002f"/><stop offset="1.0000" stop-color="#ff001c"/></linearGradient><linearGradient id="c56" gradientUnits="userSpaceOnUse" x1="1351.5" y1="0" x2="2198.5" y2="0"><stop offset="0.0000" stop-color="#00fff3"/><stop offset="0.0425" stop-color="#00ffff"/><stop offset="0.2349" stop-color="#00bfff"/><stop offset="0.3022" stop-color="#73a5ff"/><stop offset="0.3778" stop-color="#ff85fe"/><stop offset="0.4109" stop-color="#ff5eca"/><stop offset="0.4522" stop-color="#ff3e9f"/><stop offset="0.5030" stop-color="#ff247d"/><stop offset="0.5655" stop-color="#ff1061"/><stop offset="0.6352" stop-color="#ff004c"/><stop offset="0.7379" stop-color="#ff0038"/><stop offset="1.0000" stop-color="#ff001d"/></linearGradient><linearGradient id="c57" gradientUnits="userSpaceOnUse" x1="1351.5" y1="0" x2="2198.5" y2="0"><stop offset="0.0000" stop-color="#00fff9"/><stop offset="0.0401" stop-color="#00f9ff"/><stop offset="0.2361" stop-color="#01b9ff"/><stop offset="0.3058" stop-color="#769eff"/><stop offset="0.3813" stop-color="#ff7ffe"/><stop offset="0.4144" stop-color="#ff5acb"/><stop offset="0.4557" stop-color="#ff3ba0"/><stop offset="0.5065" stop-color="#ff227e"/><stop offset="0.5691" stop-color="#ff0e62"/><stop offset="0.6328" stop-color="#ff004f"/><stop offset="0.7403" stop-color="#ff0039"/><stop offset="1.0000" stop-color="#ff001e"/></linearGradient><linearGradient id="c58" gradientUnits="userSpaceOnUse" x1="1351.5" y1="0" x2="2198.5" y2="0"><stop offset="0.0000" stop-color="#00ffff"/><stop offset="0.2361" stop-color="#00b4ff"/><stop offset="0.3070" stop-color="#7599ff"/><stop offset="0.3849" stop-color="#ff79fe"/><stop offset="0.4179" stop-color="#ff55cc"/><stop offset="0.4593" stop-color="#ff38a2"/><stop offset="0.5100" stop-color="#ff2080"/><stop offset="0.5726" stop-color="#ff0c64"/><stop offset="0.6293" stop-color="#ff0052"/><stop offset="0.7426" stop-color="#ff003b"/><stop offset="1.0000" stop-color="#ff0020"/></linearGradient><linearGradient id="c59" gradientUnits="userSpaceOnUse" x1="1351.5" y1="0" x2="2198.5" y2="0"><stop offset="0.0000" stop-color="#00f9ff"/><stop offset="0.2361" stop-color="#00aeff"/><stop offset="0.3058" stop-color="#6f95ff"/><stop offset="0.3884" stop-color="#ff73fe"/><stop offset="0.4227" stop-color="#ff50cb"/><stop offset="0.4640" stop-color="#ff34a2"/><stop offset="0.5148" stop-color="#ff1d80"/><stop offset="0.5773" stop-color="#ff0a65"/><stop offset="0.6257" stop-color="#ff0055"/><stop offset="0.7462" stop-color="#ff003c"/><stop offset="1.0000" stop-color="#ff0021"/></linearGradient><linearGradient id="c60" gradientUnits="userSpaceOnUse" x1="1351.5" y1="0" x2="2198.5" y2="0"><stop offset="0.0000" stop-color="#00f3ff"/><stop offset="0.2373" stop-color="#00a9ff"/><stop offset="0.3117" stop-color="#768eff"/><stop offset="0.3920" stop-color="#ff6dfe"/><stop offset="0.4262" stop-color="#ff4ccc"/><stop offset="0.4675" stop-color="#ff31a3"/><stop offset="0.5183" stop-color="#ff1b82"/><stop offset="0.5809" stop-color="#ff0966"/><stop offset="0.6222" stop-color="#ff0059"/><stop offset="0.7497" stop-color="#ff003d"/><stop offset="1.0000" stop-color="#ff0022"/></linearGradient><linearGradient id="c61" gradientUnits="userSpaceOnUse" x1="1351.5" y1="0" x2="2198.5" y2="0"><stop offset="0.0000" stop-color="#00eeff"/><stop offset="0.2373" stop-color="#00a4ff"/><stop offset="0.3105" stop-color="#718aff"/><stop offset="0.3955" stop-color="#ff68fe"/><stop offset="0.4298" stop-color="#ff48cd"/><stop offset="0.4711" stop-color="#ff2ea4"/><stop offset="0.5218" stop-color="#ff1983"/><stop offset="0.5844" stop-color="#ff0767"/><stop offset="0.6187" stop-color="#ff005c"/><stop offset="0.7521" stop-color="#ff003e"/><stop offset="1.0000" stop-color="#ff0023"/></linearGradient><linearGradient id="c62" gradientUnits="userSpaceOnUse" x1="1351.5" y1="0" x2="2198.5" y2="0"><stop offset="0.0000" stop-color="#00e8ff"/><stop offset="0.2385" stop-color="#009fff"/><stop offset="0.3164" stop-color="#7783ff"/><stop offset="0.3991" stop-color="#ff63fe"/><stop offset="0.4333" stop-color="#ff45cd"/><stop offset="0.4758" stop-color="#ff2ba5"/><stop offset="0.5266" stop-color="#ff1784"/><stop offset="0.5880" stop-color="#ff0669"/><stop offset="0.6151" stop-color="#ff0060"/><stop offset="0.7544" stop-color="#ff0040"/><stop offset="1.0000" stop-color="#ff0024"/></linearGradient><linearGradient id="c63" gradientUnits="userSpaceOnUse" x1="1351.5" y1="0" x2="2198.5" y2="0"><stop offset="0.0000" stop-color="#00e3ff"/><stop offset="0.2385" stop-color="#009bff"/><stop offset="0.3152" stop-color="#7280ff"/><stop offset="0.4026" stop-color="#ff5efe"/><stop offset="0.4368" stop-color="#ff41ce"/><stop offset="0.4793" stop-color="#ff28a6"/><stop offset="0.5301" stop-color="#ff1585"/><stop offset="0.5915" stop-color="#ff046a"/><stop offset="0.6116" stop-color="#ff0063"/><stop offset="0.6659" stop-color="#ff0054"/><stop offset="0.7568" stop-color="#ff0041"/><stop offset="1.0000" stop-color="#ff0025"/></linearGradient><linearGradient id="c64" gradientUnits="userSpaceOnUse" x1="1351.5" y1="0" x2="2198.5" y2="0"><stop offset="0.0000" stop-color="#00deff"/><stop offset="0.2397" stop-color="#0096ff"/><stop offset="0.3211" stop-color="#787aff"/><stop offset="0.4061" stop-color="#ff59fe"/><stop offset="0.4404" stop-color="#ff3dcf"/><stop offset="0.4829" stop-color="#ff26a7"/><stop offset="0.5336" stop-color="#ff1386"/><stop offset="0.5950" stop-color="#ff036b"/><stop offset="0.6694" stop-color="#ff0055"/><stop offset="0.7591" stop-color="#ff0042"/><stop offset="1.0000" stop-color="#ff0026"/></linearGradient><linearGradient id="c65" gradientUnits="userSpaceOnUse" x1="1351.5" y1="0" x2="2198.5" y2="0"><stop offset="0.0000" stop-color="#00d9ff"/><stop offset="0.2397" stop-color="#0092ff"/><stop offset="0.3200" stop-color="#7376ff"/><stop offset="0.4097" stop-color="#ff55fe"/><stop offset="0.4439" stop-color="#ff3ad0"/><stop offset="0.4864" stop-color="#ff23a8"/><stop offset="0.5372" stop-color="#ff1187"/><stop offset="0.5986" stop-color="#ff016c"/><stop offset="0.6730" stop-color="#ff0056"/><stop offset="0.7615" stop-color="#ff0044"/><stop offset="1.0000" stop-color="#ff0027"/></linearGradient><linearGradient id="c66" gradientUnits="userSpaceOnUse" x1="1351.5" y1="0" x2="2198.5" y2="0"><stop offset="0.0000" stop-color="#00d5ff"/><stop offset="0.2409" stop-color="#008eff"/><stop offset="0.3259" stop-color="#7971ff"/><stop offset="0.4132" stop-color="#ff50fe"/><stop offset="0.4486" stop-color="#ff36cf"/><stop offset="0.4900" stop-color="#ff21a9"/><stop offset="0.5407" stop-color="#ff0f89"/><stop offset="0.6021" stop-color="#ff006e"/><stop offset="0.6765" stop-color="#ff0057"/><stop offset="0.7651" stop-color="#ff0045"/><stop offset="1.0000" stop-color="#ff0029"/></linearGradient><linearGradient id="c67" gradientUnits="userSpaceOnUse" x1="1351.5" y1="0" x2="2198.5" y2="0"><stop offset="0.0000" stop-color="#00d0ff"/><stop offset="0.2409" stop-color="#008aff"/><stop offset="0.3247" stop-color="#746eff"/><stop offset="0.4168" stop-color="#ff4cfe"/><stop offset="0.4522" stop-color="#ff33d0"/><stop offset="0.4947" stop-color="#ff1ea9"/><stop offset="0.5455" stop-color="#ff0d89"/><stop offset="0.6057" stop-color="#ff006f"/><stop offset="0.6789" stop-color="#ff0059"/><stop offset="0.7674" stop-color="#ff0046"/><stop offset="1.0000" stop-color="#ff002a"/></linearGradient><linearGradient id="c68" gradientUnits="userSpaceOnUse" x1="1351.5" y1="0" x2="2198.5" y2="0"><stop offset="0.0000" stop-color="#00ccff"/><stop offset="0.2420" stop-color="#0086ff"/><stop offset="0.3294" stop-color="#7869ff"/><stop offset="0.4203" stop-color="#ff48fe"/><stop offset="0.4557" stop-color="#ff30d0"/><stop offset="0.4982" stop-color="#ff1baa"/><stop offset="0.5490" stop-color="#ff0b8a"/><stop offset="0.6092" stop-color="#ff0070"/><stop offset="0.6824" stop-color="#ff005a"/><stop offset="0.7698" stop-color="#ff0047"/><stop offset="1.0000" stop-color="#ff002b"/></linearGradient><linearGradient id="c69" gradientUnits="userSpaceOnUse" x1="1351.5" y1="0" x2="2198.5" y2="0"><stop offset="0.0000" stop-color="#00c8ff"/><stop offset="0.2420" stop-color="#0082ff"/><stop offset="0.3294" stop-color="#7566ff"/><stop offset="0.4238" stop-color="#ff44fe"/><stop offset="0.4593" stop-color="#ff2dd1"/><stop offset="0.5018" stop-color="#ff19ab"/><stop offset="0.5525" stop-color="#ff098b"/><stop offset="0.5903" stop-color="#ff007a"/><stop offset="0.6128" stop-color="#ff0071"/><stop offset="0.6848" stop-color="#ff005b"/><stop offset="0.7721" stop-color="#ff0048"/><stop offset="1.0000" stop-color="#ff002c"/></linearGradient><linearGradient id="c70" gradientUnits="userSpaceOnUse" x1="1351.5" y1="0" x2="2198.5" y2="0"><stop offset="0.0000" stop-color="#00c3ff"/><stop offset="0.2432" stop-color="#007fff"/><stop offset="0.3341" stop-color="#7961ff"/><stop offset="0.4274" stop-color="#ff40fe"/><stop offset="0.4628" stop-color="#ff2ad2"/><stop offset="0.5053" stop-color="#ff17ac"/><stop offset="0.5431" stop-color="#ff0b94"/><stop offset="0.5868" stop-color="#ff007e"/><stop offset="0.6163" stop-color="#ff0072"/><stop offset="0.6883" stop-color="#ff005c"/><stop offset="0.7745" stop-color="#ff004a"/><stop offset="1.0000" stop-color="#ff002d"/></linearGradient><linearGradient id="c71" gradientUnits="userSpaceOnUse" x1="1351.5" y1="0" x2="2198.5" y2="0"><stop offset="0.0000" stop-color="#00bfff"/><stop offset="0.2432" stop-color="#007bff"/><stop offset="0.3329" stop-color="#755eff"/><stop offset="0.4309" stop-color="#ff3cfe"/><stop offset="0.4664" stop-color="#ff27d2"/><stop offset="0.5089" stop-color="#ff15ad"/><stop offset="0.5832" stop-color="#ff0082"/><stop offset="0.6198" stop-color="#ff0073"/><stop offset="0.6919" stop-color="#ff005d"/><stop offset="0.7769" stop-color="#ff004b"/><stop offset="1.0000" stop-color="#ff002e"/></linearGradient><linearGradient id="c72" gradientUnits="userSpaceOnUse" x1="1351.5" y1="0" x2="2198.5" y2="0"><stop offset="0.0000" stop-color="#00bbff"/><stop offset="0.2444" stop-color="#0078ff"/><stop offset="0.3388" stop-color="#7a5aff"/><stop offset="0.4345" stop-color="#ff38fe"/><stop offset="0.4699" stop-color="#ff24d3"/><stop offset="0.5124" stop-color="#ff13ae"/><stop offset="0.5797" stop-color="#ff0087"/><stop offset="0.6234" stop-color="#ff0075"/><stop offset="0.6942" stop-color="#ff005f"/><stop offset="0.7792" stop-color="#ff004c"/><stop offset="1.0000" stop-color="#ff002f"/></linearGradient><linearGradient id="c73" gradientUnits="userSpaceOnUse" x1="1351.5" y1="0" x2="2198.5" y2="0"><stop offset="0.0000" stop-color="#00b8ff"/><stop offset="0.2444" stop-color="#0075ff"/><stop offset="0.3377" stop-color="#7557ff"/><stop offset="0.4380" stop-color="#ff35fe"/><stop offset="0.4734" stop-color="#ff21d4"/><stop offset="0.5159" stop-color="#ff10af"/><stop offset="0.5762" stop-color="#ff008b"/><stop offset="0.6269" stop-color="#ff0076"/><stop offset="0.6978" stop-color="#ff0060"/><stop offset="0.7816" stop-color="#ff004d"/><stop offset="1.0000" stop-color="#ff0031"/></linearGradient><linearGradient id="c74" gradientUnits="userSpaceOnUse" x1="1351.5" y1="0" x2="2198.5" y2="0"><stop offset="0.0000" stop-color="#00b4ff"/><stop offset="0.2456" stop-color="#0071ff"/><stop offset="0.3436" stop-color="#7b53ff"/><stop offset="0.4416" stop-color="#ff31fe"/><stop offset="0.4782" stop-color="#ff1ed3"/><stop offset="0.5207" stop-color="#ff0eaf"/><stop offset="0.5726" stop-color="#ff0090"/><stop offset="0.6305" stop-color="#ff0077"/><stop offset="0.7013" stop-color="#ff0061"/><stop offset="0.7839" stop-color="#ff004f"/><stop offset="1.0000" stop-color="#ff0032"/></linearGradient><linearGradient id="c75" gradientUnits="userSpaceOnUse" x1="1351.5" y1="0" x2="2198.5" y2="0"><stop offset="0.0000" stop-color="#00b0ff"/><stop offset="0.2456" stop-color="#006eff"/><stop offset="0.3424" stop-color="#7651ff"/><stop offset="0.4451" stop-color="#ff2efe"/><stop offset="0.4817" stop-color="#ff1bd4"/><stop offset="0.5242" stop-color="#ff0cb0"/><stop offset="0.5702" stop-color="#ff0094"/><stop offset="0.6340" stop-color="#ff0078"/><stop offset="0.7037" stop-color="#ff0062"/><stop offset="0.7863" stop-color="#ff0050"/><stop offset="1.0000" stop-color="#ff0033"/></linearGradient><linearGradient id="c76" gradientUnits="userSpaceOnUse" x1="1351.5" y1="0" x2="2198.5" y2="0"><stop offset="0.0000" stop-color="#00adff"/><stop offset="0.2468" stop-color="#006bff"/><stop offset="0.3471" stop-color="#7a4dff"/><stop offset="0.4486" stop-color="#ff2bff"/><stop offset="0.4852" stop-color="#ff19d4"/><stop offset="0.5277" stop-color="#ff0ab1"/><stop offset="0.5667" stop-color="#ff0098"/><stop offset="0.6364" stop-color="#ff0079"/><stop offset="0.7060" stop-color="#ff0064"/><stop offset="0.7887" stop-color="#ff0051"/><stop offset="1.0000" stop-color="#ff0034"/></linearGradient><linearGradient id="c77" gradientUnits="userSpaceOnUse" x1="1351.5" y1="0" x2="2198.5" y2="0"><stop offset="0.0000" stop-color="#00aaff"/><stop offset="0.2468" stop-color="#0068ff"/><stop offset="0.3471" stop-color="#774aff"/><stop offset="0.4522" stop-color="#ff28ff"/><stop offset="0.4888" stop-color="#ff17d5"/><stop offset="0.5313" stop-color="#ff08b2"/><stop offset="0.5632" stop-color="#ff009d"/><stop offset="0.6399" stop-color="#ff007a"/><stop offset="0.7096" stop-color="#ff0065"/><stop offset="0.7910" stop-color="#ff0052"/><stop offset="1.0000" stop-color="#ff0035"/></linearGradient><linearGradient id="c78" gradientUnits="userSpaceOnUse" x1="1351.5" y1="0" x2="2198.5" y2="0"><stop offset="0.0000" stop-color="#00a6ff"/><stop offset="0.2479" stop-color="#0065ff"/><stop offset="0.3518" stop-color="#7b46ff"/><stop offset="0.4557" stop-color="#ff25ff"/><stop offset="0.4923" stop-color="#ff14d5"/><stop offset="0.5348" stop-color="#ff06b2"/><stop offset="0.5596" stop-color="#ff00a2"/><stop offset="0.6434" stop-color="#ff007b"/><stop offset="0.7119" stop-color="#ff0066"/><stop offset="0.7934" stop-color="#ff0053"/><stop offset="1.0000" stop-color="#ff0036"/></linearGradient><linearGradient id="c79" gradientUnits="userSpaceOnUse" x1="1351.5" y1="0" x2="2198.5" y2="0"><stop offset="0.0000" stop-color="#00a3ff"/><stop offset="0.2479" stop-color="#0063ff"/><stop offset="0.3518" stop-color="#7844ff"/><stop offset="0.4593" stop-color="#ff22ff"/><stop offset="0.4959" stop-color="#ff12d6"/><stop offset="0.5384" stop-color="#ff04b3"/><stop offset="0.5880" stop-color="#ff0096"/><stop offset="0.6470" stop-color="#ff007c"/><stop offset="0.7155" stop-color="#ff0067"/><stop offset="0.7957" stop-color="#ff0054"/><stop offset="1.0000" stop-color="#ff0037"/></linearGradient><linearGradient id="c80" gradientUnits="userSpaceOnUse" x1="1351.5" y1="0" x2="2198.5" y2="0"><stop offset="0.0000" stop-color="#00a0ff"/><stop offset="0.2491" stop-color="#0060ff"/><stop offset="0.3566" stop-color="#7b41ff"/><stop offset="0.4628" stop-color="#ff1fff"/><stop offset="0.4994" stop-color="#ff10d6"/><stop offset="0.5419" stop-color="#ff03b4"/><stop offset="0.5915" stop-color="#ff0097"/><stop offset="0.6494" stop-color="#ff007e"/><stop offset="0.7178" stop-color="#ff0068"/><stop offset="0.7969" stop-color="#ff0056"/><stop offset="1.0000" stop-color="#ff0039"/></linearGradient><linearGradient id="c81" gradientUnits="userSpaceOnUse" x1="1351.5" y1="0" x2="2198.5" y2="0"><stop offset="0.0000" stop-color="#009dff"/><stop offset="0.2491" stop-color="#005eff"/><stop offset="0.3566" stop-color="#793fff"/><stop offset="0.4664" stop-color="#ff1cff"/><stop offset="0.5030" stop-color="#ff0dd7"/><stop offset="0.5455" stop-color="#ff01b5"/><stop offset="0.5950" stop-color="#ff0098"/><stop offset="0.6529" stop-color="#ff007f"/><stop offset="0.7202" stop-color="#ff0069"/><stop offset="0.7993" stop-color="#ff0057"/><stop offset="1.0000" stop-color="#ff003a"/></linearGradient><linearGradient id="c82" gradientUnits="userSpaceOnUse" x1="1351.5" y1="0" x2="2198.5" y2="0"><stop offset="0.0000" stop-color="#009aff"/><stop offset="0.2503" stop-color="#005bff"/><stop offset="0.3613" stop-color="#7c3bff"/><stop offset="0.4699" stop-color="#ff19ff"/><stop offset="0.5065" stop-color="#ff0bd7"/><stop offset="0.5490" stop-color="#ff00b5"/><stop offset="0.5986" stop-color="#ff0098"/><stop offset="0.6564" stop-color="#ff0080"/><stop offset="0.7237" stop-color="#ff006a"/><stop offset="0.8017" stop-color="#ff0058"/><stop offset="1.0000" stop-color="#ff003b"/></linearGradient><linearGradient id="c83" gradientUnits="userSpaceOnUse" x1="1351.5" y1="0" x2="2198.5" y2="0"><stop offset="0.0000" stop-color="#0097ff"/><stop offset="0.2503" stop-color="#0059ff"/><stop offset="0.3613" stop-color="#7939ff"/><stop offset="0.4734" stop-color="#ff17ff"/><stop offset="0.5100" stop-color="#ff09d8"/><stop offset="0.5525" stop-color="#ff00b6"/><stop offset="0.6021" stop-color="#ff0099"/><stop offset="0.6588" stop-color="#ff0081"/><stop offset="0.7261" stop-color="#ff006c"/><stop offset="0.8040" stop-color="#ff0059"/><stop offset="1.0000" stop-color="#ff003c"/></linearGradient><linearGradient id="c84" gradientUnits="userSpaceOnUse" x1="1351.5" y1="0" x2="2198.5" y2="0"><stop offset="0.0000" stop-color="#0094ff"/><stop offset="0.2515" stop-color="#0056ff"/><stop offset="0.3648" stop-color="#7b36ff"/><stop offset="0.4770" stop-color="#ff14ff"/><stop offset="0.5136" stop-color="#ff07d8"/><stop offset="0.5561" stop-color="#ff00b7"/><stop offset="0.6057" stop-color="#ff009a"/><stop offset="0.6623" stop-color="#ff0082"/><stop offset="0.8064" stop-color="#ff005a"/><stop offset="1.0000" stop-color="#ff003d"/></linearGradient><linearGradient id="c85" gradientUnits="userSpaceOnUse" x1="1351.5" y1="0" x2="2198.5" y2="0"><stop offset="0.0000" stop-color="#0092ff"/><stop offset="0.2515" stop-color="#0054ff"/><stop offset="0.3660" stop-color="#7a34ff"/><stop offset="0.4805" stop-color="#ff11ff"/><stop offset="0.5348" stop-color="#ff00ca"/><stop offset="0.5596" stop-color="#ff00b8"/><stop offset="0.6092" stop-color="#ff009b"/><stop offset="0.6659" stop-color="#ff0083"/><stop offset="0.8087" stop-color="#ff005c"/><stop offset="1.0000" stop-color="#ff003e"/></linearGradient><linearGradient id="c86" gradientUnits="userSpaceOnUse" x1="1351.5" y1="0" x2="2198.5" y2="0"><stop offset="0.0000" stop-color="#008fff"/><stop offset="0.2527" stop-color="#0051ff"/><stop offset="0.3695" stop-color="#7c31ff"/><stop offset="0.4841" stop-color="#ff0fff"/><stop offset="0.5313" stop-color="#ff00d0"/><stop offset="0.5632" stop-color="#ff00b8"/><stop offset="0.6116" stop-color="#ff009c"/><stop offset="0.6682" stop-color="#ff0084"/><stop offset="0.8099" stop-color="#ff005d"/><stop offset="1.0000" stop-color="#ff0040"/></linearGradient><linearGradient id="c87" gradientUnits="userSpaceOnUse" x1="1351.5" y1="0" x2="2198.5" y2="0"><stop offset="0.0000" stop-color="#008cff"/><stop offset="0.2527" stop-color="#004fff"/><stop offset="0.3707" stop-color="#7b2fff"/><stop offset="0.4876" stop-color="#ff0dff"/><stop offset="0.5277" stop-color="#ff00d6"/><stop offset="0.5667" stop-color="#ff00b9"/><stop offset="0.6151" stop-color="#ff009d"/><stop offset="0.6718" stop-color="#ff0085"/><stop offset="0.8123" stop-color="#ff005e"/><stop offset="1.0000" stop-color="#ff0041"/></linearGradient><linearGradient id="c88" gradientUnits="userSpaceOnUse" x1="1351.5" y1="0" x2="2198.5" y2="0"><stop offset="0.0000" stop-color="#008aff"/><stop offset="0.2538" stop-color="#004dff"/><stop offset="0.3743" stop-color="#7c2dff"/><stop offset="0.4911" stop-color="#ff0aff"/><stop offset="0.5242" stop-color="#ff00dd"/><stop offset="0.5702" stop-color="#ff00ba"/><stop offset="0.6187" stop-color="#ff009e"/><stop offset="0.6741" stop-color="#ff0086"/><stop offset="0.8135" stop-color="#ff005f"/><stop offset="1.0000" stop-color="#ff0042"/></linearGradient><linearGradient id="c89" gradientUnits="userSpaceOnUse" x1="1351.5" y1="0" x2="2198.5" y2="0"><stop offset="0.0000" stop-color="#0087ff"/><stop offset="0.2538" stop-color="#004bff"/><stop offset="0.3754" stop-color="#7b2bff"/><stop offset="0.4947" stop-color="#ff08ff"/><stop offset="0.5207" stop-color="#ff00e4"/><stop offset="0.5738" stop-color="#ff00ba"/><stop offset="0.6222" stop-color="#ff009f"/><stop offset="0.6777" stop-color="#ff0087"/><stop offset="0.8158" stop-color="#ff0060"/><stop offset="1.0000" stop-color="#ff0043"/></linearGradient><linearGradient id="c90" gradientUnits="userSpaceOnUse" x1="1351.5" y1="0" x2="2198.5" y2="0"><stop offset="0.0000" stop-color="#0085ff"/><stop offset="0.2550" stop-color="#0049ff"/><stop offset="0.3790" stop-color="#7d28ff"/><stop offset="0.4982" stop-color="#ff06ff"/><stop offset="0.5348" stop-color="#ff00db"/><stop offset="0.5773" stop-color="#ff00bb"/><stop offset="0.6257" stop-color="#ff00a0"/><stop offset="0.6812" stop-color="#ff0088"/><stop offset="0.8182" stop-color="#ff0062"/><stop offset="1.0000" stop-color="#ff0044"/></linearGradient><linearGradient id="c91" gradientUnits="userSpaceOnUse" x1="1351.5" y1="0" x2="2198.5" y2="0"><stop offset="0.0000" stop-color="#0082ff"/><stop offset="0.2550" stop-color="#0047ff"/><stop offset="0.3802" stop-color="#7c26ff"/><stop offset="0.5018" stop-color="#ff04ff"/><stop offset="0.5384" stop-color="#ff00db"/><stop offset="0.5797" stop-color="#ff00bc"/><stop offset="0.6281" stop-color="#ff00a1"/><stop offset="0.6836" stop-color="#ff0089"/><stop offset="0.8205" stop-color="#ff0063"/><stop offset="1.0000" stop-color="#ff0046"/></linearGradient><linearGradient id="c92" gradientUnits="userSpaceOnUse" x1="1351.5" y1="0" x2="2198.5" y2="0"><stop offset="0.0000" stop-color="#0080ff"/><stop offset="0.2562" stop-color="#0045ff"/><stop offset="0.3825" stop-color="#7c24ff"/><stop offset="0.5053" stop-color="#ff02ff"/><stop offset="0.5419" stop-color="#ff00db"/><stop offset="0.5844" stop-color="#ff00bc"/><stop offset="0.6328" stop-color="#ff00a1"/><stop offset="0.6871" stop-color="#ff008a"/><stop offset="0.8229" stop-color="#ff0064"/><stop offset="1.0000" stop-color="#ff0047"/></linearGradient><linearGradient id="c93" gradientUnits="userSpaceOnUse" x1="1351.5" y1="0" x2="2198.5" y2="0"><stop offset="0.0000" stop-color="#007eff"/><stop offset="0.2562" stop-color="#0043ff"/><stop offset="0.3837" stop-color="#7b22ff"/><stop offset="0.5089" stop-color="#ff00ff"/><stop offset="0.5455" stop-color="#ff00dc"/><stop offset="0.5868" stop-color="#ff00be"/><stop offset="0.6352" stop-color="#ff00a3"/><stop offset="0.6895" stop-color="#ff008b"/><stop offset="0.8241" stop-color="#ff0065"/><stop offset="1.0000" stop-color="#ff0048"/></linearGradient><linearGradient id="c94" gradientUnits="userSpaceOnUse" x1="1351.5" y1="0" x2="2198.5" y2="0"><stop offset="0.0000" stop-color="#007bff"/><stop offset="0.2574" stop-color="#0041ff"/><stop offset="0.3872" stop-color="#7d20ff"/><stop offset="0.5124" stop-color="#ff00ff"/><stop offset="0.5490" stop-color="#ff00dc"/><stop offset="0.5903" stop-color="#ff00be"/><stop offset="0.6387" stop-color="#ff00a3"/><stop offset="0.6930" stop-color="#ff008c"/><stop offset="0.8264" stop-color="#ff0066"/><stop offset="1.0000" stop-color="#ff0049"/></linearGradient><linearGradient id="c95" gradientUnits="userSpaceOnUse" x1="1351.5" y1="0" x2="2198.5" y2="0"><stop offset="0.0000" stop-color="#0079ff"/><stop offset="0.2574" stop-color="#0040ff"/><stop offset="0.3884" stop-color="#7c1eff"/><stop offset="0.4994" stop-color="#ed00ff"/><stop offset="0.5159" stop-color="#ff00ff"/><stop offset="0.5525" stop-color="#ff00dd"/><stop offset="0.5939" stop-color="#ff00bf"/><stop offset="0.6411" stop-color="#ff00a5"/><stop offset="0.6954" stop-color="#ff008d"/><stop offset="0.8276" stop-color="#ff0067"/><stop offset="1.0000" stop-color="#ff004a"/></linearGradient><linearGradient id="c96" gradientUnits="userSpaceOnUse" x1="1351.5" y1="0" x2="2198.5" y2="0"><stop offset="0.0000" stop-color="#0077ff"/><stop offset="0.2586" stop-color="#003eff"/><stop offset="0.3790" stop-color="#7120ff"/><stop offset="0.4959" stop-color="#e600ff"/><stop offset="0.5195" stop-color="#ff00ff"/><stop offset="0.5561" stop-color="#ff00dd"/><stop offset="0.5974" stop-color="#ff00bf"/><stop offset="0.6446" stop-color="#ff00a5"/><stop offset="0.6989" stop-color="#ff008e"/><stop offset="0.8300" stop-color="#ff0069"/><stop offset="1.0000" stop-color="#ff004b"/></linearGradient><linearGradient id="c97" gradientUnits="userSpaceOnUse" x1="1351.5" y1="0" x2="2198.5" y2="0"><stop offset="0.0000" stop-color="#0075ff"/><stop offset="0.2586" stop-color="#003cff"/><stop offset="0.3778" stop-color="#6e1fff"/><stop offset="0.4923" stop-color="#df00ff"/><stop offset="0.5230" stop-color="#ff00ff"/><stop offset="0.5596" stop-color="#ff00dd"/><stop offset="0.6009" stop-color="#ff00c0"/><stop offset="0.6482" stop-color="#ff00a6"/><stop offset="0.7013" stop-color="#ff008f"/><stop offset="0.8312" stop-color="#ff006a"/><stop offset="1.0000" stop-color="#ff004d"/></linearGradient><linearGradient id="c98" gradientUnits="userSpaceOnUse" x1="1351.5" y1="0" x2="2198.5" y2="0"><stop offset="0.0000" stop-color="#0073ff"/><stop offset="0.2597" stop-color="#003aff"/><stop offset="0.3766" stop-color="#6b1eff"/><stop offset="0.4900" stop-color="#d900ff"/><stop offset="0.5266" stop-color="#ff00ff"/><stop offset="0.5632" stop-color="#ff00de"/><stop offset="0.6045" stop-color="#ff00c0"/><stop offset="0.6517" stop-color="#ff00a7"/><stop offset="0.7048" stop-color="#ff0090"/><stop offset="0.8335" stop-color="#ff006b"/><stop offset="1.0000" stop-color="#ff004e"/></linearGradient><linearGradient id="c99" gradientUnits="userSpaceOnUse" x1="1351.5" y1="0" x2="2198.5" y2="0"><stop offset="0.0000" stop-color="#0071ff"/><stop offset="0.2597" stop-color="#0039ff"/><stop offset="0.3754" stop-color="#681dff"/><stop offset="0.4864" stop-color="#d300ff"/><stop offset="0.5301" stop-color="#ff00ff"/><stop offset="0.5667" stop-color="#ff00de"/><stop offset="0.6080" stop-color="#ff00c1"/><stop offset="0.7072" stop-color="#ff0091"/><stop offset="0.8347" stop-color="#ff006c"/><stop offset="1.0000" stop-color="#ff004f"/></linearGradient><linearGradient id="c100" gradientUnits="userSpaceOnUse" x1="1351.5" y1="0" x2="2198.5" y2="0"><stop offset="0.0000" stop-color="#006fff"/><stop offset="0.2609" stop-color="#0037ff"/><stop offset="0.3743" stop-color="#651cff"/><stop offset="0.4829" stop-color="#cc00ff"/><stop offset="0.5336" stop-color="#ff00ff"/><stop offset="0.5702" stop-color="#ff00de"/><stop offset="0.6104" stop-color="#ff00c2"/><stop offset="0.7096" stop-color="#ff0092"/><stop offset="0.8371" stop-color="#ff006d"/><stop offset="1.0000" stop-color="#ff0050"/></linearGradient><linearGradient id="c101" gradientUnits="userSpaceOnUse" x1="1351.5" y1="0" x2="2198.5" y2="0"><stop offset="0.0000" stop-color="#006dff"/><stop offset="0.2609" stop-color="#0035ff"/><stop offset="0.3719" stop-color="#611bff"/><stop offset="0.4793" stop-color="#c600ff"/><stop offset="0.5372" stop-color="#ff00ff"/><stop offset="0.5738" stop-color="#ff00df"/><stop offset="0.6151" stop-color="#ff00c2"/><stop offset="0.7131" stop-color="#ff0093"/><stop offset="0.8394" stop-color="#ff006e"/><stop offset="1.0000" stop-color="#ff0051"/></linearGradient><linearGradient id="c102" gradientUnits="userSpaceOnUse" x1="1351.5" y1="0" x2="2198.5" y2="0"><stop offset="0.0000" stop-color="#006bff"/><stop offset="0.2621" stop-color="#0134ff"/><stop offset="0.3707" stop-color="#5f1aff"/><stop offset="0.4758" stop-color="#c000ff"/><stop offset="0.5407" stop-color="#ff00ff"/><stop offset="0.5773" stop-color="#ff00df"/><stop offset="0.6175" stop-color="#ff00c3"/><stop offset="0.7155" stop-color="#ff0094"/><stop offset="0.8406" stop-color="#ff0070"/><stop offset="1.0000" stop-color="#ff0053"/></linearGradient><linearGradient id="c103" gradientUnits="userSpaceOnUse" x1="1351.5" y1="0" x2="2198.5" y2="0"><stop offset="0.0000" stop-color="#0069ff"/><stop offset="0.2621" stop-color="#0032ff"/><stop offset="0.4723" stop-color="#ba00ff"/><stop offset="0.5443" stop-color="#ff00ff"/><stop offset="0.5809" stop-color="#ff00df"/><stop offset="0.6210" stop-color="#ff00c4"/><stop offset="0.7190" stop-color="#ff0095"/><stop offset="0.8430" stop-color="#ff0071"/><stop offset="1.0000" stop-color="#ff0054"/></linearGradient><linearGradient id="c104" gradientUnits="userSpaceOnUse" x1="1351.5" y1="0" x2="2198.5" y2="0"><stop offset="0.0000" stop-color="#0068ff"/><stop offset="0.2633" stop-color="#0131ff"/><stop offset="0.4687" stop-color="#b400ff"/><stop offset="0.5478" stop-color="#ff00ff"/><stop offset="0.5844" stop-color="#ff00e0"/><stop offset="0.6246" stop-color="#ff00c4"/><stop offset="0.7214" stop-color="#ff0096"/><stop offset="0.8442" stop-color="#ff0072"/><stop offset="1.0000" stop-color="#ff0055"/></linearGradient><linearGradient id="c105" gradientUnits="userSpaceOnUse" x1="1351.5" y1="0" x2="2198.5" y2="0"><stop offset="0.0000" stop-color="#0066ff"/><stop offset="0.2633" stop-color="#002fff"/><stop offset="0.4652" stop-color="#ae00ff"/><stop offset="0.5514" stop-color="#ff00ff"/><stop offset="0.5880" stop-color="#ff00e0"/><stop offset="0.6281" stop-color="#ff00c5"/><stop offset="0.7237" stop-color="#ff0097"/><stop offset="0.8453" stop-color="#ff0073"/><stop offset="1.0000" stop-color="#ff0056"/></linearGradient><linearGradient id="c106" gradientUnits="userSpaceOnUse" x1="1351.5" y1="0" x2="2198.5" y2="0"><stop offset="0.0000" stop-color="#0064ff"/><stop offset="0.2633" stop-color="#002eff"/><stop offset="0.4616" stop-color="#a800ff"/><stop offset="0.5549" stop-color="#ff00ff"/><stop offset="0.5915" stop-color="#ff00e0"/><stop offset="0.6316" stop-color="#ff00c5"/><stop offset="0.7273" stop-color="#ff0098"/><stop offset="0.8477" stop-color="#ff0074"/><stop offset="1.0000" stop-color="#ff0057"/></linearGradient><linearGradient id="c107" gradientUnits="userSpaceOnUse" x1="1351.5" y1="0" x2="2198.5" y2="0"><stop offset="0.0000" stop-color="#0062ff"/><stop offset="0.2645" stop-color="#002dff"/><stop offset="0.4581" stop-color="#a300ff"/><stop offset="0.5584" stop-color="#ff00ff"/><stop offset="0.5950" stop-color="#ff00e0"/><stop offset="0.6352" stop-color="#ff00c6"/><stop offset="0.7296" stop-color="#ff0099"/><stop offset="0.8489" stop-color="#ff0075"/><stop offset="1.0000" stop-color="#ff0059"/></linearGradient><linearGradient id="c108" gradientUnits="userSpaceOnUse" x1="1351.5" y1="0" x2="2198.5" y2="0"><stop offset="0.0000" stop-color="#0061ff"/><stop offset="0.2645" stop-color="#002bff"/><stop offset="0.4545" stop-color="#9e00ff"/><stop offset="0.5620" stop-color="#ff00ff"/><stop offset="0.5986" stop-color="#ff00e1"/><stop offset="0.6375" stop-color="#ff00c7"/><stop offset="0.7320" stop-color="#ff009a"/><stop offset="0.8512" stop-color="#ff0076"/><stop offset="1.0000" stop-color="#ff005a"/></linearGradient><linearGradient id="c109" gradientUnits="userSpaceOnUse" x1="1351.5" y1="0" x2="2198.5" y2="0"><stop offset="0.0000" stop-color="#005fff"/><stop offset="0.2656" stop-color="#002aff"/><stop offset="0.4510" stop-color="#9800ff"/><stop offset="0.5655" stop-color="#ff00ff"/><stop offset="0.6021" stop-color="#ff00e1"/><stop offset="0.6411" stop-color="#ff00c7"/><stop offset="0.7355" stop-color="#ff009b"/><stop offset="0.8536" stop-color="#ff0077"/><stop offset="1.0000" stop-color="#ff005b"/></linearGradient><linearGradient id="c110" gradientUnits="userSpaceOnUse" x1="1351.5" y1="0" x2="2198.5" y2="0"><stop offset="0.0000" stop-color="#005dff"/><stop offset="0.2656" stop-color="#0029ff"/><stop offset="0.4475" stop-color="#9300ff"/><stop offset="0.5691" stop-color="#ff00ff"/><stop offset="0.6446" stop-color="#ff00c8"/><stop offset="0.7379" stop-color="#ff009c"/><stop offset="0.8548" stop-color="#ff0079"/><stop offset="1.0000" stop-color="#ff005c"/></linearGradient><linearGradient id="c111" gradientUnits="userSpaceOnUse" x1="1351.5" y1="0" x2="2198.5" y2="0"><stop offset="0.0000" stop-color="#005cff"/><stop offset="0.2668" stop-color="#0027ff"/><stop offset="0.4451" stop-color="#8f00ff"/><stop offset="0.5726" stop-color="#ff00ff"/><stop offset="0.6482" stop-color="#ff00c8"/><stop offset="0.7403" stop-color="#ff009d"/><stop offset="0.8560" stop-color="#ff007a"/><stop offset="1.0000" stop-color="#ff005e"/></linearGradient><linearGradient id="c112" gradientUnits="userSpaceOnUse" x1="1351.5" y1="0" x2="2198.5" y2="0"><stop offset="0.0000" stop-color="#005aff"/><stop offset="0.2668" stop-color="#0026ff"/><stop offset="0.4416" stop-color="#8b00ff"/><stop offset="0.5762" stop-color="#ff00ff"/><stop offset="0.6517" stop-color="#ff00c9"/><stop offset="0.7438" stop-color="#ff009e"/><stop offset="0.8583" stop-color="#ff007b"/><stop offset="1.0000" stop-color="#ff005f"/></linearGradient><linearGradient id="c113" gradientUnits="userSpaceOnUse" x1="1351.5" y1="0" x2="2198.5" y2="0"><stop offset="0.0000" stop-color="#0059ff"/><stop offset="0.2680" stop-color="#0025ff"/><stop offset="0.4380" stop-color="#8600ff"/><stop offset="0.5797" stop-color="#ff00ff"/><stop offset="0.6541" stop-color="#ff00ca"/><stop offset="0.7462" stop-color="#ff009f"/><stop offset="0.8595" stop-color="#ff007c"/><stop offset="1.0000" stop-color="#ff0060"/></linearGradient><linearGradient id="c114" gradientUnits="userSpaceOnUse" x1="1351.5" y1="0" x2="2198.5" y2="0"><stop offset="0.0000" stop-color="#0057ff"/><stop offset="0.2680" stop-color="#0024ff"/><stop offset="0.4345" stop-color="#8100ff"/><stop offset="0.5832" stop-color="#ff00ff"/><stop offset="0.6576" stop-color="#ff00ca"/><stop offset="0.7485" stop-color="#ff00a0"/><stop offset="0.8607" stop-color="#ff007d"/><stop offset="1.0000" stop-color="#ff0061"/></linearGradient><linearGradient id="c115" gradientUnits="userSpaceOnUse" x1="1351.5" y1="0" x2="2198.5" y2="0"><stop offset="0.0000" stop-color="#0056ff"/><stop offset="0.2692" stop-color="#0022ff"/><stop offset="0.4309" stop-color="#7c00ff"/><stop offset="0.5880" stop-color="#ff00fe"/><stop offset="0.6612" stop-color="#ff00cb"/><stop offset="0.7521" stop-color="#ff00a0"/><stop offset="0.8630" stop-color="#ff007e"/><stop offset="1.0000" stop-color="#ff0062"/></linearGradient><linearGradient id="c116" gradientUnits="userSpaceOnUse" x1="1351.5" y1="0" x2="2198.5" y2="0"><stop offset="0.0000" stop-color="#0054ff"/><stop offset="0.2692" stop-color="#0021ff"/><stop offset="0.4274" stop-color="#7800ff"/><stop offset="0.5915" stop-color="#ff00fe"/><stop offset="0.6647" stop-color="#ff00cb"/><stop offset="0.7544" stop-color="#ff00a1"/><stop offset="0.8642" stop-color="#ff0080"/><stop offset="1.0000" stop-color="#ff0064"/></linearGradient><linearGradient id="c117" gradientUnits="userSpaceOnUse" x1="1351.5" y1="0" x2="2198.5" y2="0"><stop offset="0.0000" stop-color="#0053ff"/><stop offset="0.2704" stop-color="#0020ff"/><stop offset="0.4238" stop-color="#7400ff"/><stop offset="0.5950" stop-color="#ff00fe"/><stop offset="0.6682" stop-color="#ff00cb"/><stop offset="0.7568" stop-color="#ff00a2"/><stop offset="0.8666" stop-color="#ff0080"/><stop offset="1.0000" stop-color="#ff0065"/></linearGradient><linearGradient id="c118" gradientUnits="userSpaceOnUse" x1="1351.5" y1="0" x2="2198.5" y2="0"><stop offset="0.0000" stop-color="#0052ff"/><stop offset="0.2704" stop-color="#001fff"/><stop offset="0.4203" stop-color="#6f00ff"/><stop offset="0.5986" stop-color="#ff00fe"/><stop offset="0.6706" stop-color="#ff00cd"/><stop offset="0.7591" stop-color="#ff00a3"/><stop offset="0.8678" stop-color="#ff0082"/><stop offset="1.0000" stop-color="#ff0066"/></linearGradient><linearGradient id="c119" gradientUnits="userSpaceOnUse" x1="1351.5" y1="0" x2="2198.5" y2="0"><stop offset="0.0000" stop-color="#0050ff"/><stop offset="0.2715" stop-color="#001eff"/><stop offset="0.4168" stop-color="#6b00ff"/><stop offset="0.6021" stop-color="#ff00fe"/><stop offset="0.6741" stop-color="#ff00cd"/><stop offset="0.7627" stop-color="#ff00a4"/><stop offset="0.8701" stop-color="#ff0083"/><stop offset="1.0000" stop-color="#ff0067"/></linearGradient><linearGradient id="c120" gradientUnits="userSpaceOnUse" x1="1351.5" y1="0" x2="2198.5" y2="0"><stop offset="0.0000" stop-color="#004fff"/><stop offset="0.2715" stop-color="#001dff"/><stop offset="0.4132" stop-color="#6700ff"/><stop offset="0.6057" stop-color="#ff00fe"/><stop offset="0.6777" stop-color="#ff00cd"/><stop offset="0.7651" stop-color="#ff00a5"/><stop offset="0.8713" stop-color="#ff0084"/><stop offset="1.0000" stop-color="#ff0069"/></linearGradient><linearGradient id="c121" gradientUnits="userSpaceOnUse" x1="1351.5" y1="0" x2="2198.5" y2="0"><stop offset="0.0000" stop-color="#004dff"/><stop offset="0.2727" stop-color="#001cff"/><stop offset="0.4097" stop-color="#6300ff"/><stop offset="0.6092" stop-color="#ff00fe"/><stop offset="0.6812" stop-color="#ff00ce"/><stop offset="0.7674" stop-color="#ff00a6"/><stop offset="0.8725" stop-color="#ff0085"/><stop offset="1.0000" stop-color="#ff006a"/></linearGradient><linearGradient id="c122" gradientUnits="userSpaceOnUse" x1="1351.5" y1="0" x2="2198.5" y2="0"><stop offset="0.0000" stop-color="#004cff"/><stop offset="0.2727" stop-color="#001bff"/><stop offset="0.4061" stop-color="#5f00ff"/><stop offset="0.6128" stop-color="#ff00fe"/><stop offset="0.6836" stop-color="#ff00cf"/><stop offset="0.7698" stop-color="#ff00a7"/><stop offset="0.8737" stop-color="#ff0086"/><stop offset="1.0000" stop-color="#ff006b"/></linearGradient><linearGradient id="c123" gradientUnits="userSpaceOnUse" x1="1351.5" y1="0" x2="2198.5" y2="0"><stop offset="0.0000" stop-color="#004bff"/><stop offset="0.2739" stop-color="#001aff"/><stop offset="0.4026" stop-color="#5b00ff"/><stop offset="0.6163" stop-color="#ff00fe"/><stop offset="0.6871" stop-color="#ff00cf"/><stop offset="0.7721" stop-color="#ff00a8"/><stop offset="0.8749" stop-color="#ff0087"/><stop offset="1.0000" stop-color="#ff006c"/></linearGradient><linearGradient id="c124" gradientUnits="userSpaceOnUse" x1="1351.5" y1="0" x2="2198.5" y2="0"><stop offset="0.0000" stop-color="#004aff"/><stop offset="0.2739" stop-color="#0019ff"/><stop offset="0.4002" stop-color="#5800ff"/><stop offset="0.6198" stop-color="#ff00fe"/><stop offset="0.6895" stop-color="#ff00d0"/><stop offset="0.7745" stop-color="#ff00a9"/><stop offset="0.8772" stop-color="#ff0088"/><stop offset="1.0000" stop-color="#ff006e"/></linearGradient><linearGradient id="c125" gradientUnits="userSpaceOnUse" x1="1351.5" y1="0" x2="2198.5" y2="0"><stop offset="0.0000" stop-color="#0048ff"/><stop offset="0.2751" stop-color="#0018ff"/><stop offset="0.3967" stop-color="#5500ff"/><stop offset="0.6234" stop-color="#ff00fe"/><stop offset="0.6942" stop-color="#ff00d0"/><stop offset="0.7780" stop-color="#ff00a9"/><stop offset="0.8784" stop-color="#ff008a"/><stop offset="1.0000" stop-color="#ff006f"/></linearGradient><linearGradient id="c126" gradientUnits="userSpaceOnUse" x1="1351.5" y1="0" x2="2198.5" y2="0"><stop offset="0.0000" stop-color="#0047ff"/><stop offset="0.2751" stop-color="#0017ff"/><stop offset="0.3932" stop-color="#5100ff"/><stop offset="0.6269" stop-color="#ff00ff"/><stop offset="0.6966" stop-color="#ff00d1"/><stop offset="0.7804" stop-color="#ff00aa"/><stop offset="0.8808" stop-color="#ff008b"/><stop offset="1.0000" stop-color="#ff0070"/></linearGradient><linearGradient id="c127" gradientUnits="userSpaceOnUse" x1="1351.5" y1="0" x2="2198.5" y2="0"><stop offset="0.0000" stop-color="#0046ff"/><stop offset="0.2763" stop-color="#0016ff"/><stop offset="0.3896" stop-color="#4d00ff"/><stop offset="0.6305" stop-color="#ff00ff"/><stop offset="0.7001" stop-color="#ff00d1"/><stop offset="0.7828" stop-color="#ff00ab"/><stop offset="0.8819" stop-color="#ff008c"/><stop offset="1.0000" stop-color="#ff0071"/></linearGradient><linearGradient id="c128" gradientUnits="userSpaceOnUse" x1="1351.5" y1="0" x2="2198.5" y2="0"><stop offset="0.0000" stop-color="#0045ff"/><stop offset="0.2763" stop-color="#0015ff"/><stop offset="0.3861" stop-color="#4a00ff"/><stop offset="0.6340" stop-color="#ff00ff"/><stop offset="0.7025" stop-color="#ff00d2"/><stop offset="0.7851" stop-color="#ff00ac"/><stop offset="0.8831" stop-color="#ff008d"/><stop offset="1.0000" stop-color="#ff0073"/></linearGradient><linearGradient id="c129" gradientUnits="userSpaceOnUse" x1="1351.5" y1="0" x2="2198.5" y2="0"><stop offset="0.0000" stop-color="#0044ff"/><stop offset="0.2774" stop-color="#0014ff"/><stop offset="0.3825" stop-color="#4600ff"/><stop offset="0.6375" stop-color="#ff00ff"/><stop offset="0.7060" stop-color="#ff00d2"/><stop offset="0.7875" stop-color="#ff00ad"/><stop offset="0.8843" stop-color="#ff008e"/><stop offset="1.0000" stop-color="#ff0074"/></linearGradient><linearGradient id="c130" gradientUnits="userSpaceOnUse" x1="1351.5" y1="0" x2="2198.5" y2="0"><stop offset="0.0000" stop-color="#0043ff"/><stop offset="0.2774" stop-color="#0013ff"/><stop offset="0.3790" stop-color="#4300ff"/><stop offset="0.6411" stop-color="#ff00ff"/><stop offset="0.7096" stop-color="#ff00d3"/><stop offset="0.7898" stop-color="#ff00ae"/><stop offset="0.8855" stop-color="#ff008f"/><stop offset="1.0000" stop-color="#ff0075"/></linearGradient><linearGradient id="c131" gradientUnits="userSpaceOnUse" x1="1351.5" y1="0" x2="2198.5" y2="0"><stop offset="0.0000" stop-color="#0041ff"/><stop offset="0.2786" stop-color="#0012ff"/><stop offset="0.3754" stop-color="#4000ff"/><stop offset="0.6446" stop-color="#ff00ff"/><stop offset="0.7119" stop-color="#ff00d4"/><stop offset="0.7922" stop-color="#ff00af"/><stop offset="0.8878" stop-color="#ff0090"/><stop offset="1.0000" stop-color="#ff0076"/></linearGradient><linearGradient id="c132" gradientUnits="userSpaceOnUse" x1="1351.5" y1="0" x2="2198.5" y2="0"><stop offset="0.0000" stop-color="#0040ff"/><stop offset="0.2786" stop-color="#0011ff"/><stop offset="0.3719" stop-color="#3c00ff"/><stop offset="0.6482" stop-color="#ff00ff"/><stop offset="0.7155" stop-color="#ff00d4"/><stop offset="0.7946" stop-color="#ff00b0"/><stop offset="0.8890" stop-color="#ff0091"/><stop offset="1.0000" stop-color="#ff0078"/></linearGradient><linearGradient id="c133" gradientUnits="userSpaceOnUse" x1="1351.5" y1="0" x2="2198.5" y2="0"><stop offset="0.0000" stop-color="#003fff"/><stop offset="0.2798" stop-color="#0010ff"/><stop offset="0.3684" stop-color="#3900ff"/><stop offset="0.6517" stop-color="#ff00ff"/><stop offset="0.7178" stop-color="#ff00d5"/><stop offset="0.7969" stop-color="#ff00b1"/><stop offset="0.8902" stop-color="#ff0093"/><stop offset="1.0000" stop-color="#ff0079"/></linearGradient><linearGradient id="c134" gradientUnits="userSpaceOnUse" x1="1351.5" y1="0" x2="2198.5" y2="0"><stop offset="0.0000" stop-color="#003eff"/><stop offset="0.2798" stop-color="#000fff"/><stop offset="0.3648" stop-color="#3600ff"/><stop offset="0.5089" stop-color="#9700ff"/><stop offset="0.6553" stop-color="#ff00ff"/><stop offset="0.7214" stop-color="#ff00d5"/><stop offset="0.7993" stop-color="#ff00b2"/><stop offset="0.8914" stop-color="#ff0094"/><stop offset="1.0000" stop-color="#ff007a"/></linearGradient><linearGradient id="c135" gradientUnits="userSpaceOnUse" x1="1351.5" y1="0" x2="2198.5" y2="0"><stop offset="0.0000" stop-color="#003dff"/><stop offset="0.2810" stop-color="#000eff"/><stop offset="0.3613" stop-color="#3300ff"/><stop offset="0.5089" stop-color="#9500ff"/><stop offset="0.6588" stop-color="#ff00ff"/><stop offset="0.7249" stop-color="#ff00d5"/><stop offset="0.8017" stop-color="#ff00b3"/><stop offset="0.8926" stop-color="#ff0095"/><stop offset="1.0000" stop-color="#ff007b"/></linearGradient><linearGradient id="c136" gradientUnits="userSpaceOnUse" x1="1351.5" y1="0" x2="2198.5" y2="0"><stop offset="0.0000" stop-color="#003cff"/><stop offset="0.2810" stop-color="#000eff"/><stop offset="0.3577" stop-color="#3000ff"/><stop offset="0.5124" stop-color="#9600ff"/><stop offset="0.6612" stop-color="#fe00ff"/><stop offset="0.7285" stop-color="#ff00d6"/><stop offset="0.8052" stop-color="#ff00b3"/><stop offset="0.8949" stop-color="#ff0096"/><stop offset="1.0000" stop-color="#ff007d"/></linearGradient><linearGradient id="c137" gradientUnits="userSpaceOnUse" x1="1351.5" y1="0" x2="2198.5" y2="0"><stop offset="0.0000" stop-color="#003bff"/><stop offset="0.2822" stop-color="#000dff"/><stop offset="0.3542" stop-color="#2d00ff"/><stop offset="0.5124" stop-color="#9400ff"/><stop offset="0.6647" stop-color="#fe00ff"/><stop offset="0.7320" stop-color="#ff00d6"/><stop offset="0.8076" stop-color="#ff00b4"/><stop offset="0.8961" stop-color="#ff0097"/><stop offset="1.0000" stop-color="#ff007e"/></linearGradient><linearGradient id="c138" gradientUnits="userSpaceOnUse" x1="1351.5" y1="0" x2="2198.5" y2="0"><stop offset="0.0000" stop-color="#003aff"/><stop offset="0.2822" stop-color="#000cff"/><stop offset="0.3506" stop-color="#2a00ff"/><stop offset="0.5124" stop-color="#9300ff"/><stop offset="0.6682" stop-color="#fe00ff"/><stop offset="0.7355" stop-color="#ff00d6"/><stop offset="0.8099" stop-color="#ff00b5"/><stop offset="0.8973" stop-color="#ff0098"/><stop offset="1.0000" stop-color="#ff007f"/></linearGradient><linearGradient id="c139" gradientUnits="userSpaceOnUse" x1="1351.5" y1="0" x2="2198.5" y2="0"><stop offset="0.0000" stop-color="#0039ff"/><stop offset="0.2834" stop-color="#000bff"/><stop offset="0.3483" stop-color="#2800ff"/><stop offset="0.5124" stop-color="#9100ff"/><stop offset="0.6718" stop-color="#fe00ff"/><stop offset="0.7379" stop-color="#ff00d7"/><stop offset="0.8123" stop-color="#ff00b6"/><stop offset="0.8985" stop-color="#ff0099"/><stop offset="1.0000" stop-color="#ff0080"/></linearGradient><linearGradient id="c140" gradientUnits="userSpaceOnUse" x1="1351.5" y1="0" x2="2198.5" y2="0"><stop offset="0.0000" stop-color="#0038ff"/><stop offset="0.2834" stop-color="#000aff"/><stop offset="0.3447" stop-color="#2500ff"/><stop offset="0.5124" stop-color="#9000ff"/><stop offset="0.6753" stop-color="#fe00ff"/><stop offset="0.7414" stop-color="#ff00d7"/><stop offset="0.8146" stop-color="#ff00b7"/><stop offset="0.9008" stop-color="#ff009a"/><stop offset="1.0000" stop-color="#ff0082"/></linearGradient><linearGradient id="c141" gradientUnits="userSpaceOnUse" x1="1351.5" y1="0" x2="2198.5" y2="0"><stop offset="0.0000" stop-color="#0037ff"/><stop offset="0.2845" stop-color="#000aff"/><stop offset="0.3412" stop-color="#2200ff"/><stop offset="0.5136" stop-color="#8f00ff"/><stop offset="0.6789" stop-color="#fe00ff"/><stop offset="0.7450" stop-color="#ff00d8"/><stop offset="0.8170" stop-color="#ff00b8"/><stop offset="0.9020" stop-color="#ff009b"/><stop offset="1.0000" stop-color="#ff0083"/></linearGradient><linearGradient id="c142" gradientUnits="userSpaceOnUse" x1="1351.5" y1="0" x2="2198.5" y2="0"><stop offset="0.0000" stop-color="#0036ff"/><stop offset="0.2845" stop-color="#0009ff"/><stop offset="0.3377" stop-color="#2000ff"/><stop offset="0.5136" stop-color="#8d00ff"/><stop offset="0.6824" stop-color="#fe00ff"/><stop offset="0.7473" stop-color="#ff00d9"/><stop offset="0.8194" stop-color="#ff00b8"/><stop offset="0.9032" stop-color="#ff009c"/><stop offset="1.0000" stop-color="#ff0084"/></linearGradient><linearGradient id="c143" gradientUnits="userSpaceOnUse" x1="1351.5" y1="0" x2="2198.5" y2="0"><stop offset="0.0000" stop-color="#0035ff"/><stop offset="0.2857" stop-color="#0008ff"/><stop offset="0.3341" stop-color="#1d00ff"/><stop offset="0.5136" stop-color="#8c00ff"/><stop offset="0.6860" stop-color="#fe00ff"/><stop offset="0.7509" stop-color="#ff00d9"/><stop offset="0.8217" stop-color="#ff00b9"/><stop offset="0.9044" stop-color="#ff009e"/><stop offset="1.0000" stop-color="#ff0086"/></linearGradient><linearGradient id="c144" gradientUnits="userSpaceOnUse" x1="1351.5" y1="0" x2="2198.5" y2="0"><stop offset="0.0000" stop-color="#0034ff"/><stop offset="0.2857" stop-color="#0007ff"/><stop offset="0.3306" stop-color="#1a00ff"/><stop offset="0.5136" stop-color="#8a00ff"/><stop offset="0.6895" stop-color="#fe00ff"/><stop offset="0.7544" stop-color="#ff00d9"/><stop offset="0.8241" stop-color="#ff00ba"/><stop offset="0.9055" stop-color="#ff009f"/><stop offset="1.0000" stop-color="#ff0087"/></linearGradient><linearGradient id="c145" gradientUnits="userSpaceOnUse" x1="1351.5" y1="0" x2="2198.5" y2="0"><stop offset="0.0000" stop-color="#0033ff"/><stop offset="0.2869" stop-color="#0007ff"/><stop offset="0.3270" stop-color="#1800ff"/><stop offset="0.5136" stop-color="#8900ff"/><stop offset="0.6930" stop-color="#fe00ff"/><stop offset="0.7568" stop-color="#ff00da"/><stop offset="0.8264" stop-color="#ff00bb"/><stop offset="0.9067" stop-color="#ff00a0"/><stop offset="1.0000" stop-color="#ff0088"/></linearGradient><linearGradient id="c146" gradientUnits="userSpaceOnUse" x1="1351.5" y1="0" x2="2198.5" y2="0"><stop offset="0.0000" stop-color="#0032ff"/><stop offset="0.2869" stop-color="#0006ff"/><stop offset="0.3235" stop-color="#1500ff"/><stop offset="0.5136" stop-color="#8800ff"/><stop offset="0.6966" stop-color="#fe00ff"/><stop offset="0.7603" stop-color="#ff00da"/><stop offset="0.8288" stop-color="#ff00bc"/><stop offset="0.9091" stop-color="#ff00a1"/><stop offset="1.0000" stop-color="#ff0089"/></linearGradient><linearGradient id="c147" gradientUnits="userSpaceOnUse" x1="1351.5" y1="0" x2="2198.5" y2="0"><stop offset="0.0000" stop-color="#0032ff"/><stop offset="0.2869" stop-color="#0005ff"/><stop offset="0.3200" stop-color="#1300ff"/><stop offset="0.4959" stop-color="#7b00ff"/><stop offset="0.7001" stop-color="#fe00ff"/><stop offset="0.7639" stop-color="#ff00da"/><stop offset="0.8312" stop-color="#ff00bd"/><stop offset="0.9103" stop-color="#ff00a2"/><stop offset="1.0000" stop-color="#ff008b"/></linearGradient><linearGradient id="c148" gradientUnits="userSpaceOnUse" x1="1351.5" y1="0" x2="2198.5" y2="0"><stop offset="0.0000" stop-color="#0031ff"/><stop offset="0.2881" stop-color="#0005ff"/><stop offset="0.3164" stop-color="#1000ff"/><stop offset="0.5006" stop-color="#7d00ff"/><stop offset="0.7037" stop-color="#fe00ff"/><stop offset="0.7662" stop-color="#ff00db"/><stop offset="0.8335" stop-color="#ff00be"/><stop offset="0.9115" stop-color="#ff00a3"/><stop offset="1.0000" stop-color="#ff008c"/></linearGradient><linearGradient id="c149" gradientUnits="userSpaceOnUse" x1="1351.5" y1="0" x2="2198.5" y2="0"><stop offset="0.0000" stop-color="#0030ff"/><stop offset="0.2881" stop-color="#0004ff"/><stop offset="0.3129" stop-color="#0e00ff"/><stop offset="0.4994" stop-color="#7b00ff"/><stop offset="0.7072" stop-color="#fe00ff"/><stop offset="0.7698" stop-color="#ff00dc"/><stop offset="0.8359" stop-color="#ff00be"/><stop offset="0.9126" stop-color="#ff00a4"/><stop offset="1.0000" stop-color="#ff008d"/></linearGradient><linearGradient id="c150" gradientUnits="userSpaceOnUse" x1="1351.5" y1="0" x2="2198.5" y2="0"><stop offset="0.0000" stop-color="#002fff"/><stop offset="0.2893" stop-color="#0003ff"/><stop offset="0.5041" stop-color="#7c00ff"/><stop offset="0.7119" stop-color="#ff00ff"/><stop offset="0.7710" stop-color="#ff00dd"/><stop offset="0.8371" stop-color="#ff00c0"/><stop offset="0.9138" stop-color="#ff00a5"/><stop offset="1.0000" stop-color="#ff008f"/></linearGradient><linearGradient id="c151" gradientUnits="userSpaceOnUse" x1="1351.5" y1="0" x2="2198.5" y2="0"><stop offset="0.0000" stop-color="#002eff"/><stop offset="0.2893" stop-color="#0003ff"/><stop offset="0.5041" stop-color="#7b00ff"/><stop offset="0.7155" stop-color="#ff00ff"/><stop offset="0.7733" stop-color="#ff00de"/><stop offset="0.8394" stop-color="#ff00c0"/><stop offset="0.9150" stop-color="#ff00a6"/><stop offset="1.0000" stop-color="#ff0090"/></linearGradient><linearGradient id="c152" gradientUnits="userSpaceOnUse" x1="1351.5" y1="0" x2="2198.5" y2="0"><stop offset="0.0000" stop-color="#002dff"/><stop offset="0.2904" stop-color="#0002ff"/><stop offset="0.5077" stop-color="#7c00ff"/><stop offset="0.7190" stop-color="#ff00ff"/><stop offset="0.7769" stop-color="#ff00de"/><stop offset="0.8418" stop-color="#ff00c1"/><stop offset="0.9162" stop-color="#ff00a8"/><stop offset="1.0000" stop-color="#ff0091"/></linearGradient><linearGradient id="c153" gradientUnits="userSpaceOnUse" x1="1351.5" y1="0" x2="2198.5" y2="0"><stop offset="0.0000" stop-color="#002cff"/><stop offset="0.2904" stop-color="#0001ff"/><stop offset="0.5089" stop-color="#7c00ff"/><stop offset="0.7226" stop-color="#ff00ff"/><stop offset="0.7792" stop-color="#ff00df"/><stop offset="0.8442" stop-color="#ff00c2"/><stop offset="1.0000" stop-color="#ff0093"/></linearGradient><linearGradient id="c154" gradientUnits="userSpaceOnUse" x1="1351.5" y1="0" x2="2198.5" y2="0"><stop offset="0.0000" stop-color="#002cff"/><stop offset="0.2916" stop-color="#0001ff"/><stop offset="0.5124" stop-color="#7c00ff"/><stop offset="0.7261" stop-color="#ff00ff"/><stop offset="0.7828" stop-color="#ff00df"/><stop offset="0.8465" stop-color="#ff00c3"/><stop offset="1.0000" stop-color="#ff0094"/></linearGradient><linearGradient id="c155" gradientUnits="userSpaceOnUse" x1="1351.5" y1="0" x2="2198.5" y2="0"><stop offset="0.0000" stop-color="#002bff"/><stop offset="0.2916" stop-color="#0000ff"/><stop offset="0.5124" stop-color="#7b00ff"/><stop offset="0.7296" stop-color="#ff00ff"/><stop offset="0.7851" stop-color="#ff00e0"/><stop offset="0.8489" stop-color="#ff00c4"/><stop offset="1.0000" stop-color="#ff0095"/></linearGradient><linearGradient id="c156" gradientUnits="userSpaceOnUse" x1="1351.5" y1="0" x2="2198.5" y2="0"><stop offset="0.0000" stop-color="#002aff"/><stop offset="0.2928" stop-color="#0000ff"/><stop offset="0.5171" stop-color="#7d00ff"/><stop offset="0.7332" stop-color="#ff00ff"/><stop offset="0.7887" stop-color="#ff00e0"/><stop offset="0.8512" stop-color="#ff00c4"/><stop offset="1.0000" stop-color="#ff0096"/></linearGradient><linearGradient id="c157" gradientUnits="userSpaceOnUse" x1="1351.5" y1="0" x2="2198.5" y2="0"><stop offset="0.0000" stop-color="#0029ff"/><stop offset="0.2928" stop-color="#0000ff"/><stop offset="0.5171" stop-color="#7b00ff"/><stop offset="0.7367" stop-color="#ff00ff"/><stop offset="0.7922" stop-color="#ff00e0"/><stop offset="0.8536" stop-color="#ff00c5"/><stop offset="1.0000" stop-color="#ff0098"/></linearGradient><linearGradient id="c158" gradientUnits="userSpaceOnUse" x1="1351.5" y1="0" x2="2198.5" y2="0"><stop offset="0.0000" stop-color="#0029ff"/><stop offset="0.2940" stop-color="#0000ff"/><stop offset="0.5218" stop-color="#7d00ff"/><stop offset="0.7403" stop-color="#ff00ff"/><stop offset="0.7946" stop-color="#ff00e1"/><stop offset="0.8548" stop-color="#ff00c6"/><stop offset="1.0000" stop-color="#ff0099"/></linearGradient><linearGradient id="c159" gradientUnits="userSpaceOnUse" x1="1351.5" y1="0" x2="2198.5" y2="0"><stop offset="0.0000" stop-color="#0028ff"/><stop offset="0.2940" stop-color="#0000ff"/><stop offset="0.5218" stop-color="#7c00ff"/><stop offset="0.7438" stop-color="#ff00ff"/><stop offset="0.7969" stop-color="#ff00e2"/><stop offset="0.8571" stop-color="#ff00c7"/><stop offset="1.0000" stop-color="#ff009a"/></linearGradient><linearGradient id="c160" gradientUnits="userSpaceOnUse" x1="1351.5" y1="0" x2="2198.5" y2="0"><stop offset="0.0000" stop-color="#0027ff"/><stop offset="0.2952" stop-color="#0000ff"/><stop offset="0.5254" stop-color="#7d00ff"/><stop offset="0.7473" stop-color="#ff00ff"/><stop offset="0.8005" stop-color="#ff00e2"/><stop offset="0.8595" stop-color="#ff00c8"/><stop offset="1.0000" stop-color="#ff009c"/></linearGradient><linearGradient id="c161" gradientUnits="userSpaceOnUse" x1="1351.5" y1="0" x2="2198.5" y2="0"><stop offset="0.0000" stop-color="#0026ff"/><stop offset="0.2704" stop-color="#0000ff"/><stop offset="0.2952" stop-color="#0000ff"/><stop offset="0.5266" stop-color="#7c00ff"/><stop offset="0.7509" stop-color="#ff00ff"/><stop offset="0.8619" stop-color="#ff00c9"/><stop offset="1.0000" stop-color="#ff009d"/></linearGradient><linearGradient id="c162" gradientUnits="userSpaceOnUse" x1="1351.5" y1="0" x2="2198.5" y2="0"><stop offset="0.0000" stop-color="#0026ff"/><stop offset="0.2668" stop-color="#0000ff"/><stop offset="0.2963" stop-color="#0000ff"/><stop offset="0.5301" stop-color="#7d00ff"/><stop offset="0.7544" stop-color="#ff00ff"/><stop offset="0.8642" stop-color="#ff00c9"/><stop offset="1.0000" stop-color="#ff009e"/></linearGradient><linearGradient id="c163" gradientUnits="userSpaceOnUse" x1="1351.5" y1="0" x2="2198.5" y2="0"><stop offset="0.0000" stop-color="#0025ff"/><stop offset="0.2633" stop-color="#0000ff"/><stop offset="0.2963" stop-color="#0000ff"/><stop offset="0.5313" stop-color="#7c00ff"/><stop offset="0.7580" stop-color="#ff00ff"/><stop offset="0.8666" stop-color="#ff00ca"/><stop offset="1.0000" stop-color="#ff00a0"/></linearGradient><linearGradient id="c164" gradientUnits="userSpaceOnUse" x1="1351.5" y1="0" x2="2198.5" y2="0"><stop offset="0.0000" stop-color="#0024ff"/><stop offset="0.2597" stop-color="#0000ff"/><stop offset="0.2975" stop-color="#0000ff"/><stop offset="0.5348" stop-color="#7d00ff"/><stop offset="0.7615" stop-color="#ff00ff"/><stop offset="0.8689" stop-color="#ff00cb"/><stop offset="1.0000" stop-color="#ff00a1"/></linearGradient><linearGradient id="c165" gradientUnits="userSpaceOnUse" x1="1351.5" y1="0" x2="2198.5" y2="0"><stop offset="0.0000" stop-color="#0023ff"/><stop offset="0.2562" stop-color="#0000ff"/><stop offset="0.2975" stop-color="#0000ff"/><stop offset="0.5360" stop-color="#7d00ff"/><stop offset="0.7651" stop-color="#ff00ff"/><stop offset="0.8713" stop-color="#ff00cc"/><stop offset="1.0000" stop-color="#ff00a2"/></linearGradient><linearGradient id="c166" gradientUnits="userSpaceOnUse" x1="1351.5" y1="0" x2="2198.5" y2="0"><stop offset="0.0000" stop-color="#0023ff"/><stop offset="0.2527" stop-color="#0000ff"/><stop offset="0.2987" stop-color="#0000ff"/><stop offset="0.5384" stop-color="#7d00ff"/><stop offset="0.7686" stop-color="#ff00ff"/><stop offset="0.8725" stop-color="#ff00cd"/><stop offset="1.0000" stop-color="#ff00a4"/></linearGradient><linearGradient id="c167" gradientUnits="userSpaceOnUse" x1="1351.5" y1="0" x2="2198.5" y2="0"><stop offset="0.0000" stop-color="#0022ff"/><stop offset="0.2503" stop-color="#0000ff"/><stop offset="0.2987" stop-color="#0000ff"/><stop offset="0.5396" stop-color="#7c00ff"/><stop offset="0.7721" stop-color="#ff00ff"/><stop offset="0.8749" stop-color="#ff00ce"/><stop offset="1.0000" stop-color="#ff00a5"/></linearGradient><linearGradient id="c168" gradientUnits="userSpaceOnUse" x1="1351.5" y1="0" x2="2198.5" y2="0"><stop offset="0.0000" stop-color="#0021ff"/><stop offset="0.2468" stop-color="#0000ff"/><stop offset="0.2999" stop-color="#0000ff"/><stop offset="0.5431" stop-color="#7d00ff"/><stop offset="0.7757" stop-color="#ff00ff"/><stop offset="0.8772" stop-color="#ff00ce"/><stop offset="1.0000" stop-color="#ff00a6"/></linearGradient><linearGradient id="c169" gradientUnits="userSpaceOnUse" x1="1351.5" y1="0" x2="2198.5" y2="0"><stop offset="0.0000" stop-color="#0021ff"/><stop offset="0.2432" stop-color="#0000ff"/><stop offset="0.2999" stop-color="#0000ff"/><stop offset="0.5443" stop-color="#7d00ff"/><stop offset="0.7792" stop-color="#ff00ff"/><stop offset="0.8796" stop-color="#ff00cf"/><stop offset="1.0000" stop-color="#ff00a8"/></linearGradient><linearGradient id="c170" gradientUnits="userSpaceOnUse" x1="1351.5" y1="0" x2="2198.5" y2="0"><stop offset="0.0000" stop-color="#0020ff"/><stop offset="0.2397" stop-color="#0000ff"/><stop offset="0.3011" stop-color="#0000ff"/><stop offset="0.5466" stop-color="#7d00ff"/><stop offset="0.7828" stop-color="#ff00ff"/><stop offset="0.8819" stop-color="#ff00d0"/><stop offset="1.0000" stop-color="#ff00a9"/></linearGradient><linearGradient id="c171" gradientUnits="userSpaceOnUse" x1="1351.5" y1="0" x2="2198.5" y2="0"><stop offset="0.0000" stop-color="#001fff"/><stop offset="0.2361" stop-color="#0000ff"/><stop offset="0.3011" stop-color="#0000ff"/><stop offset="0.5490" stop-color="#7d00ff"/><stop offset="0.7863" stop-color="#ff00ff"/><stop offset="0.8843" stop-color="#ff00d1"/><stop offset="1.0000" stop-color="#ff00aa"/></linearGradient><linearGradient id="c172" gradientUnits="userSpaceOnUse" x1="1351.5" y1="0" x2="2198.5" y2="0"><stop offset="0.0000" stop-color="#001fff"/><stop offset="0.2326" stop-color="#0000ff"/><stop offset="0.3022" stop-color="#0000ff"/><stop offset="0.5514" stop-color="#7d00ff"/><stop offset="0.7898" stop-color="#ff00ff"/><stop offset="0.8855" stop-color="#ff00d2"/><stop offset="1.0000" stop-color="#ff00ac"/></linearGradient><linearGradient id="c173" gradientUnits="userSpaceOnUse" x1="1351.5" y1="0" x2="2198.5" y2="0"><stop offset="0.0000" stop-color="#001eff"/><stop offset="0.2290" stop-color="#0000ff"/><stop offset="0.3022" stop-color="#0000ff"/><stop offset="0.5525" stop-color="#7d00ff"/><stop offset="0.7934" stop-color="#ff00ff"/><stop offset="0.8878" stop-color="#ff00d2"/><stop offset="1.0000" stop-color="#ff00ad"/></linearGradient><linearGradient id="c174" gradientUnits="userSpaceOnUse" x1="1351.5" y1="0" x2="2198.5" y2="0"><stop offset="0.0000" stop-color="#001dff"/><stop offset="0.2255" stop-color="#0000ff"/><stop offset="0.3034" stop-color="#0000ff"/><stop offset="0.5549" stop-color="#7d00ff"/><stop offset="0.7969" stop-color="#ff00ff"/><stop offset="0.8902" stop-color="#ff00d3"/><stop offset="1.0000" stop-color="#ff00ae"/></linearGradient><linearGradient id="c175" gradientUnits="userSpaceOnUse" x1="1351.5" y1="0" x2="2198.5" y2="0"><stop offset="0.0000" stop-color="#001dff"/><stop offset="0.2220" stop-color="#0000ff"/><stop offset="0.3034" stop-color="#0000ff"/><stop offset="0.5573" stop-color="#7d00ff"/><stop offset="0.8005" stop-color="#ff00ff"/><stop offset="0.8926" stop-color="#ff00d4"/><stop offset="1.0000" stop-color="#ff00b0"/></linearGradient><linearGradient id="c176" gradientUnits="userSpaceOnUse" x1="1351.5" y1="0" x2="2198.5" y2="0"><stop offset="0.0000" stop-color="#001cff"/><stop offset="0.2184" stop-color="#0000ff"/><stop offset="0.3034" stop-color="#0000ff"/><stop offset="0.5561" stop-color="#7b00ff"/><stop offset="0.8040" stop-color="#ff00ff"/><stop offset="0.8949" stop-color="#ff00d4"/><stop offset="1.0000" stop-color="#ff00b1"/></linearGradient><linearGradient id="c177" gradientUnits="userSpaceOnUse" x1="1351.5" y1="0" x2="2198.5" y2="0"><stop offset="0.0000" stop-color="#001cff"/><stop offset="0.2149" stop-color="#0000ff"/><stop offset="0.3046" stop-color="#0000ff"/><stop offset="0.5608" stop-color="#7d00ff"/><stop offset="0.8076" stop-color="#ff00ff"/><stop offset="0.8961" stop-color="#ff00d6"/><stop offset="1.0000" stop-color="#ff00b2"/></linearGradient><linearGradient id="c178" gradientUnits="userSpaceOnUse" x1="1351.5" y1="0" x2="2198.5" y2="0"><stop offset="0.0000" stop-color="#001bff"/><stop offset="0.2113" stop-color="#0000ff"/><stop offset="0.3046" stop-color="#0000ff"/><stop offset="0.5608" stop-color="#7b00ff"/><stop offset="0.8111" stop-color="#ff00ff"/><stop offset="0.8985" stop-color="#ff00d6"/><stop offset="1.0000" stop-color="#ff00b4"/></linearGradient><linearGradient id="c179" gradientUnits="userSpaceOnUse" x1="1351.5" y1="0" x2="2198.5" y2="0"><stop offset="0.0000" stop-color="#001aff"/><stop offset="0.2078" stop-color="#0000ff"/><stop offset="0.3058" stop-color="#0000ff"/><stop offset="0.5655" stop-color="#7d00ff"/><stop offset="0.8146" stop-color="#ff00ff"/><stop offset="0.9008" stop-color="#ff00d7"/><stop offset="1.0000" stop-color="#ff00b5"/></linearGradient><linearGradient id="c180" gradientUnits="userSpaceOnUse" x1="1351.5" y1="0" x2="2198.5" y2="0"><stop offset="0.0000" stop-color="#001aff"/><stop offset="0.2043" stop-color="#0000ff"/><stop offset="0.3058" stop-color="#0000ff"/><stop offset="0.5643" stop-color="#7b00ff"/><stop offset="0.8182" stop-color="#ff00ff"/><stop offset="0.9032" stop-color="#ff00d8"/><stop offset="1.0000" stop-color="#ff00b6"/></linearGradient><linearGradient id="c181" gradientUnits="userSpaceOnUse" x1="1351.5" y1="0" x2="2198.5" y2="0"><stop offset="0.0000" stop-color="#0019ff"/><stop offset="0.2019" stop-color="#0000ff"/><stop offset="0.3070" stop-color="#0000ff"/><stop offset="0.5702" stop-color="#7d00ff"/><stop offset="0.8217" stop-color="#ff00ff"/><stop offset="0.9055" stop-color="#ff00d8"/><stop offset="1.0000" stop-color="#ff00b8"/></linearGradient><linearGradient id="c182" gradientUnits="userSpaceOnUse" x1="1351.5" y1="0" x2="2198.5" y2="0"><stop offset="0.0000" stop-color="#0019ff"/><stop offset="0.1983" stop-color="#0000ff"/><stop offset="0.3070" stop-color="#0000ff"/><stop offset="0.5691" stop-color="#7b00ff"/><stop offset="0.8253" stop-color="#ff00ff"/><stop offset="0.9067" stop-color="#ff00da"/><stop offset="1.0000" stop-color="#ff00b9"/></linearGradient><linearGradient id="c183" gradientUnits="userSpaceOnUse" x1="1351.5" y1="0" x2="2198.5" y2="0"><stop offset="0.0000" stop-color="#0018ff"/><stop offset="0.1948" stop-color="#0000ff"/><stop offset="0.3081" stop-color="#0000ff"/><stop offset="0.5738" stop-color="#7d00ff"/><stop offset="0.8288" stop-color="#ff00ff"/><stop offset="0.9091" stop-color="#ff00da"/><stop offset="1.0000" stop-color="#ff00bb"/></linearGradient><linearGradient id="c184" gradientUnits="userSpaceOnUse" x1="1351.5" y1="0" x2="2198.5" y2="0"><stop offset="0.0000" stop-color="#0018ff"/><stop offset="0.1913" stop-color="#0000ff"/><stop offset="0.3081" stop-color="#0000ff"/><stop offset="0.5738" stop-color="#7c00ff"/><stop offset="0.8323" stop-color="#ff00ff"/><stop offset="0.9115" stop-color="#ff00db"/><stop offset="1.0000" stop-color="#ff00bc"/></linearGradient><linearGradient id="c185" gradientUnits="userSpaceOnUse" x1="1351.5" y1="0" x2="2198.5" y2="0"><stop offset="0.0000" stop-color="#0017ff"/><stop offset="0.1877" stop-color="#0000ff"/><stop offset="0.3093" stop-color="#0000ff"/><stop offset="0.5785" stop-color="#7d00ff"/><stop offset="0.8359" stop-color="#ff00ff"/><stop offset="0.9138" stop-color="#ff00db"/><stop offset="1.0000" stop-color="#ff00bd"/></linearGradient><linearGradient id="c186" gradientUnits="userSpaceOnUse" x1="1351.5" y1="0" x2="2198.5" y2="0"><stop offset="0.0000" stop-color="#0016ff"/><stop offset="0.1842" stop-color="#0000ff"/><stop offset="0.3093" stop-color="#0000ff"/><stop offset="0.5773" stop-color="#7b00ff"/><stop offset="0.8394" stop-color="#ff00ff"/><stop offset="0.9150" stop-color="#ff00dd"/><stop offset="1.0000" stop-color="#ff00bf"/></linearGradient><linearGradient id="c187" gradientUnits="userSpaceOnUse" x1="1351.5" y1="0" x2="2198.5" y2="0"><stop offset="0.0000" stop-color="#0016ff"/><stop offset="0.1806" stop-color="#0000ff"/><stop offset="0.3105" stop-color="#0000ff"/><stop offset="0.5821" stop-color="#7d00ff"/><stop offset="0.8430" stop-color="#ff00ff"/><stop offset="0.9174" stop-color="#ff00dd"/><stop offset="1.0000" stop-color="#ff00c0"/></linearGradient><linearGradient id="c188" gradientUnits="userSpaceOnUse" x1="1351.5" y1="0" x2="2198.5" y2="0"><stop offset="0.0000" stop-color="#0015ff"/><stop offset="0.1771" stop-color="#0000ff"/><stop offset="0.3105" stop-color="#0000ff"/><stop offset="0.5821" stop-color="#7c00ff"/><stop offset="0.8465" stop-color="#ff00ff"/><stop offset="0.9197" stop-color="#ff00de"/><stop offset="1.0000" stop-color="#ff00c1"/></linearGradient><linearGradient id="c189" gradientUnits="userSpaceOnUse" x1="1351.5" y1="0" x2="2198.5" y2="0"><stop offset="0.0000" stop-color="#0015ff"/><stop offset="0.1736" stop-color="#0000ff"/><stop offset="0.3117" stop-color="#0000ff"/><stop offset="0.5868" stop-color="#7d00ff"/><stop offset="0.8501" stop-color="#ff00ff"/><stop offset="0.9221" stop-color="#ff00df"/><stop offset="1.0000" stop-color="#ff00c3"/></linearGradient><linearGradient id="c190" gradientUnits="userSpaceOnUse" x1="1351.5" y1="0" x2="2198.5" y2="0"><stop offset="0.0000" stop-color="#0014ff"/><stop offset="0.1700" stop-color="#0000ff"/><stop offset="0.3117" stop-color="#0000ff"/><stop offset="0.5868" stop-color="#7c00ff"/><stop offset="0.8536" stop-color="#ff00ff"/><stop offset="0.9244" stop-color="#ff00df"/><stop offset="1.0000" stop-color="#ff00c4"/></linearGradient><linearGradient id="c191" gradientUnits="userSpaceOnUse" x1="1351.5" y1="0" x2="2198.5" y2="0"><stop offset="0.0000" stop-color="#0014ff"/><stop offset="0.1665" stop-color="#0000ff"/><stop offset="0.3129" stop-color="#0000ff"/><stop offset="0.5903" stop-color="#7d00ff"/><stop offset="0.8571" stop-color="#ff00ff"/><stop offset="0.9256" stop-color="#ff00e0"/><stop offset="1.0000" stop-color="#ff00c6"/></linearGradient><linearGradient id="c192" gradientUnits="userSpaceOnUse" x1="1351.5" y1="0" x2="2198.5" y2="0"><stop offset="0.0000" stop-color="#0013ff"/><stop offset="0.1629" stop-color="#0000ff"/><stop offset="0.3129" stop-color="#0000ff"/><stop offset="0.5915" stop-color="#7c00ff"/><stop offset="0.8607" stop-color="#ff00ff"/><stop offset="0.9280" stop-color="#ff00e1"/><stop offset="1.0000" stop-color="#ff00c7"/></linearGradient><linearGradient id="c193" gradientUnits="userSpaceOnUse" x1="1351.5" y1="0" x2="2198.5" y2="0"><stop offset="0.0000" stop-color="#0013ff"/><stop offset="0.1594" stop-color="#0000ff"/><stop offset="0.3140" stop-color="#0000ff"/><stop offset="0.5950" stop-color="#7d00ff"/><stop offset="0.8642" stop-color="#ff00ff"/><stop offset="1.0000" stop-color="#ff00c8"/></linearGradient><linearGradient id="c194" gradientUnits="userSpaceOnUse" x1="1351.5" y1="0" x2="2198.5" y2="0"><stop offset="0.0000" stop-color="#0012ff"/><stop offset="0.1558" stop-color="#0000ff"/><stop offset="0.3140" stop-color="#0000ff"/><stop offset="0.5950" stop-color="#7c00ff"/><stop offset="0.8678" stop-color="#ff00ff"/><stop offset="1.0000" stop-color="#ff00ca"/></linearGradient><linearGradient id="c195" gradientUnits="userSpaceOnUse" x1="1351.5" y1="0" x2="2198.5" y2="0"><stop offset="0.0000" stop-color="#0012ff"/><stop offset="0.1535" stop-color="#0000ff"/><stop offset="0.3152" stop-color="#0000ff"/><stop offset="0.5986" stop-color="#7d00ff"/><stop offset="0.8713" stop-color="#ff00ff"/><stop offset="1.0000" stop-color="#ff00cb"/></linearGradient><linearGradient id="c196" gradientUnits="userSpaceOnUse" x1="1351.5" y1="0" x2="2198.5" y2="0"><stop offset="0.0000" stop-color="#0011ff"/><stop offset="0.1499" stop-color="#0000ff"/><stop offset="0.3152" stop-color="#0000ff"/><stop offset="0.5998" stop-color="#7c00ff"/><stop offset="0.8749" stop-color="#ff00ff"/><stop offset="1.0000" stop-color="#ff00cd"/></linearGradient><linearGradient id="c197" gradientUnits="userSpaceOnUse" x1="1351.5" y1="0" x2="2198.5" y2="0"><stop offset="0.0000" stop-color="#0011ff"/><stop offset="0.1464" stop-color="#0000ff"/><stop offset="0.3164" stop-color="#0000ff"/><stop offset="0.6033" stop-color="#7d00ff"/><stop offset="0.8784" stop-color="#ff00ff"/><stop offset="1.0000" stop-color="#ff00ce"/></linearGradient><linearGradient id="c198" gradientUnits="userSpaceOnUse" x1="1351.5" y1="0" x2="2198.5" y2="0"><stop offset="0.0000" stop-color="#0010ff"/><stop offset="0.1429" stop-color="#0000ff"/><stop offset="0.3164" stop-color="#0000ff"/><stop offset="0.6045" stop-color="#7c00ff"/><stop offset="0.8819" stop-color="#ff00ff"/><stop offset="1.0000" stop-color="#ff00cf"/></linearGradient><linearGradient id="c199" gradientUnits="userSpaceOnUse" x1="1351.5" y1="0" x2="2198.5" y2="0"><stop offset="0.0000" stop-color="#0010ff"/><stop offset="0.1393" stop-color="#0000ff"/><stop offset="0.3176" stop-color="#0000ff"/><stop offset="0.6080" stop-color="#7d00ff"/><stop offset="0.8855" stop-color="#ff00ff"/><stop offset="1.0000" stop-color="#ff00d1"/></linearGradient><linearGradient id="c200" gradientUnits="userSpaceOnUse" x1="1351.5" y1="0" x2="2198.5" y2="0"><stop offset="0.0000" stop-color="#000fff"/><stop offset="0.1358" stop-color="#0000ff"/><stop offset="0.3176" stop-color="#0000ff"/><stop offset="0.6080" stop-color="#7c00ff"/><stop offset="0.8890" stop-color="#ff00ff"/><stop offset="1.0000" stop-color="#ff00d2"/></linearGradient><linearGradient id="c201" gradientUnits="userSpaceOnUse" x1="1351.5" y1="0" x2="2198.5" y2="0"><stop offset="0.0000" stop-color="#000fff"/><stop offset="0.1322" stop-color="#0000ff"/><stop offset="0.3188" stop-color="#0000ff"/><stop offset="0.6116" stop-color="#7d00ff"/><stop offset="0.8926" stop-color="#ff00ff"/><stop offset="1.0000" stop-color="#ff00d4"/></linearGradient><linearGradient id="c202" gradientUnits="userSpaceOnUse" x1="1351.5" y1="0" x2="2198.5" y2="0"><stop offset="0.0000" stop-color="#000eff"/><stop offset="0.1287" stop-color="#0000ff"/><stop offset="0.3188" stop-color="#0000ff"/><stop offset="0.6128" stop-color="#7c00ff"/><stop offset="0.8961" stop-color="#ff00ff"/><stop offset="1.0000" stop-color="#ff00d5"/></linearGradient><linearGradient id="c203" gradientUnits="userSpaceOnUse" x1="1351.5" y1="0" x2="2198.5" y2="0"><stop offset="0.0000" stop-color="#000eff"/><stop offset="0.1251" stop-color="#0000ff"/><stop offset="0.3200" stop-color="#0000ff"/><stop offset="0.6163" stop-color="#7d00ff"/><stop offset="0.8996" stop-color="#ff00ff"/><stop offset="1.0000" stop-color="#ff00d6"/></linearGradient><linearGradient id="c204" gradientUnits="userSpaceOnUse" x1="1351.5" y1="0" x2="2198.5" y2="0"><stop offset="0.0000" stop-color="#000eff"/><stop offset="0.1216" stop-color="#0000ff"/><stop offset="0.3200" stop-color="#0000ff"/><stop offset="0.6175" stop-color="#7d00ff"/><stop offset="0.9032" stop-color="#ff00ff"/><stop offset="1.0000" stop-color="#ff00d8"/></linearGradient><linearGradient id="c205" gradientUnits="userSpaceOnUse" x1="1351.5" y1="0" x2="2198.5" y2="0"><stop offset="0.0000" stop-color="#000dff"/><stop offset="0.1181" stop-color="#0000ff"/><stop offset="0.3211" stop-color="#0000ff"/><stop offset="0.6198" stop-color="#7d00ff"/><stop offset="0.9067" stop-color="#ff00ff"/><stop offset="1.0000" stop-color="#ff00d9"/></linearGradient><linearGradient id="c206" gradientUnits="userSpaceOnUse" x1="1351.5" y1="0" x2="2198.5" y2="0"><stop offset="0.0000" stop-color="#000dff"/><stop offset="0.1145" stop-color="#0000ff"/><stop offset="0.3211" stop-color="#0000ff"/><stop offset="0.6210" stop-color="#7c00ff"/><stop offset="0.9103" stop-color="#ff00ff"/><stop offset="1.0000" stop-color="#ff00db"/></linearGradient><linearGradient id="c207" gradientUnits="userSpaceOnUse" x1="1351.5" y1="0" x2="2198.5" y2="0"><stop offset="0.0000" stop-color="#000cff"/><stop offset="0.1122" stop-color="#0000ff"/><stop offset="0.3223" stop-color="#0000ff"/><stop offset="0.6246" stop-color="#7d00ff"/><stop offset="0.9138" stop-color="#ff00ff"/><stop offset="1.0000" stop-color="#ff00dc"/></linearGradient><clipPath id="ic"><rect x="1911.5" y="491" width="278.0" height="187"/></clipPath><linearGradient id="i0" gradientUnits="userSpaceOnUse" x1="1911.5" y1="0" x2="2189.5" y2="0"><stop offset="0.0000" stop-color="#b4ff00"/><stop offset="0.7986" stop-color="#ffff00"/><stop offset="1.0000" stop-color="#ffec00"/></linearGradient><linearGradient id="i1" gradientUnits="userSpaceOnUse" x1="1911.5" y1="0" x2="2189.5" y2="0"><stop offset="0.0000" stop-color="#b5ff00"/><stop offset="0.7878" stop-color="#ffff00"/><stop offset="1.0000" stop-color="#ffeb00"/></linearGradient><linearGradient id="i2" gradientUnits="userSpaceOnUse" x1="1911.5" y1="0" x2="2189.5" y2="0"><stop offset="0.0000" stop-color="#b6ff00"/><stop offset="0.7806" stop-color="#ffff00"/><stop offset="1.0000" stop-color="#ffea00"/></linearGradient><linearGradient id="i3" gradientUnits="userSpaceOnUse" x1="1911.5" y1="0" x2="2189.5" y2="0"><stop offset="0.0000" stop-color="#b6ff00"/><stop offset="0.7698" stop-color="#ffff00"/><stop offset="1.0000" stop-color="#ffe900"/></linearGradient><linearGradient id="i4" gradientUnits="userSpaceOnUse" x1="1911.5" y1="0" x2="2189.5" y2="0"><stop offset="0.0000" stop-color="#b7ff00"/><stop offset="0.7590" stop-color="#ffff00"/><stop offset="1.0000" stop-color="#ffe900"/></linearGradient><linearGradient id="i5" gradientUnits="userSpaceOnUse" x1="1911.5" y1="0" x2="2189.5" y2="0"><stop offset="0.0000" stop-color="#b8ff00"/><stop offset="0.7518" stop-color="#ffff00"/><stop offset="1.0000" stop-color="#ffe800"/></linearGradient><linearGradient id="i6" gradientUnits="userSpaceOnUse" x1="1911.5" y1="0" x2="2189.5" y2="0"><stop offset="0.0000" stop-color="#b9ff00"/><stop offset="0.7410" stop-color="#ffff00"/><stop offset="1.0000" stop-color="#ffe700"/></linearGradient><linearGradient id="i7" gradientUnits="userSpaceOnUse" x1="1911.5" y1="0" x2="2189.5" y2="0"><stop offset="0.0000" stop-color="#b9ff00"/><stop offset="0.7302" stop-color="#ffff00"/><stop offset="1.0000" stop-color="#ffe600"/></linearGradient><linearGradient id="i8" gradientUnits="userSpaceOnUse" x1="1911.5" y1="0" x2="2189.5" y2="0"><stop offset="0.0000" stop-color="#baff01"/><stop offset="0.7194" stop-color="#ffff00"/><stop offset="1.0000" stop-color="#ffe500"/></linearGradient><linearGradient id="i9" gradientUnits="userSpaceOnUse" x1="1911.5" y1="0" x2="2189.5" y2="0"><stop offset="0.0000" stop-color="#bbff01"/><stop offset="0.7122" stop-color="#ffff00"/><stop offset="1.0000" stop-color="#ffe400"/></linearGradient><linearGradient id="i10" gradientUnits="userSpaceOnUse" x1="1911.5" y1="0" x2="2189.5" y2="0"><stop offset="0.0000" stop-color="#bcff02"/><stop offset="0.7014" stop-color="#ffff00"/><stop offset="1.0000" stop-color="#ffe300"/></linearGradient><linearGradient id="i11" gradientUnits="userSpaceOnUse" x1="1911.5" y1="0" x2="2189.5" y2="0"><stop offset="0.0000" stop-color="#bdff02"/><stop offset="0.6906" stop-color="#ffff00"/><stop offset="1.0000" stop-color="#ffe200"/></linearGradient><linearGradient id="i12" gradientUnits="userSpaceOnUse" x1="1911.5" y1="0" x2="2189.5" y2="0"><stop offset="0.0000" stop-color="#bdff02"/><stop offset="0.6799" stop-color="#ffff00"/><stop offset="1.0000" stop-color="#ffe200"/></linearGradient><linearGradient id="i13" gradientUnits="userSpaceOnUse" x1="1911.5" y1="0" x2="2189.5" y2="0"><stop offset="0.0000" stop-color="#beff03"/><stop offset="0.6727" stop-color="#ffff00"/><stop offset="1.0000" stop-color="#ffe100"/></linearGradient><linearGradient id="i14" gradientUnits="userSpaceOnUse" x1="1911.5" y1="0" x2="2189.5" y2="0"><stop offset="0.0000" stop-color="#bfff03"/><stop offset="0.6619" stop-color="#ffff00"/><stop offset="1.0000" stop-color="#ffe000"/></linearGradient><linearGradient id="i15" gradientUnits="userSpaceOnUse" x1="1911.5" y1="0" x2="2189.5" y2="0"><stop offset="0.0000" stop-color="#c0ff04"/><stop offset="0.6511" stop-color="#ffff00"/><stop offset="1.0000" stop-color="#ffdf00"/></linearGradient><linearGradient id="i16" gradientUnits="userSpaceOnUse" x1="1911.5" y1="0" x2="2189.5" y2="0"><stop offset="0.0000" stop-color="#c0ff04"/><stop offset="0.6439" stop-color="#ffff00"/><stop offset="1.0000" stop-color="#ffde00"/></linearGradient><linearGradient id="i17" gradientUnits="userSpaceOnUse" x1="1911.5" y1="0" x2="2189.5" y2="0"><stop offset="0.0000" stop-color="#c1ff05"/><stop offset="0.6331" stop-color="#ffff00"/><stop offset="1.0000" stop-color="#ffdd00"/></linearGradient><linearGradient id="i18" gradientUnits="userSpaceOnUse" x1="1911.5" y1="0" x2="2189.5" y2="0"><stop offset="0.0000" stop-color="#c2ff05"/><stop offset="0.2446" stop-color="#d9ff00"/><stop offset="0.6223" stop-color="#ffff00"/><stop offset="1.0000" stop-color="#ffdc00"/></linearGradient><linearGradient id="i19" gradientUnits="userSpaceOnUse" x1="1911.5" y1="0" x2="2189.5" y2="0"><stop offset="0.0000" stop-color="#c3ff05"/><stop offset="0.2662" stop-color="#dcff00"/><stop offset="0.6115" stop-color="#ffff00"/><stop offset="1.0000" stop-color="#ffdb00"/></linearGradient><linearGradient id="i20" gradientUnits="userSpaceOnUse" x1="1911.5" y1="0" x2="2189.5" y2="0"><stop offset="0.0000" stop-color="#c4ff06"/><stop offset="0.2878" stop-color="#dfff00"/><stop offset="0.6043" stop-color="#ffff00"/><stop offset="1.0000" stop-color="#ffdb00"/></linearGradient><linearGradient id="i21" gradientUnits="userSpaceOnUse" x1="1911.5" y1="0" x2="2189.5" y2="0"><stop offset="0.0000" stop-color="#c5ff06"/><stop offset="0.3058" stop-color="#e2ff00"/><stop offset="0.5935" stop-color="#ffff00"/><stop offset="1.0000" stop-color="#ffda00"/></linearGradient><linearGradient id="i22" gradientUnits="userSpaceOnUse" x1="1911.5" y1="0" x2="2189.5" y2="0"><stop offset="0.0000" stop-color="#c5ff07"/><stop offset="0.5827" stop-color="#ffff00"/><stop offset="1.0000" stop-color="#ffd900"/></linearGradient><linearGradient id="i23" gradientUnits="userSpaceOnUse" x1="1911.5" y1="0" x2="2189.5" y2="0"><stop offset="0.0000" stop-color="#c6ff07"/><stop offset="0.5755" stop-color="#ffff00"/><stop offset="1.0000" stop-color="#ffd800"/></linearGradient><linearGradient id="i24" gradientUnits="userSpaceOnUse" x1="1911.5" y1="0" x2="2189.5" y2="0"><stop offset="0.0000" stop-color="#c7ff08"/><stop offset="0.5647" stop-color="#ffff00"/><stop offset="1.0000" stop-color="#ffd700"/></linearGradient><linearGradient id="i25" gradientUnits="userSpaceOnUse" x1="1911.5" y1="0" x2="2189.5" y2="0"><stop offset="0.0000" stop-color="#c8ff08"/><stop offset="0.5540" stop-color="#ffff00"/><stop offset="1.0000" stop-color="#ffd600"/></linearGradient><linearGradient id="i26" gradientUnits="userSpaceOnUse" x1="1911.5" y1="0" x2="2189.5" y2="0"><stop offset="0.0000" stop-color="#c9ff09"/><stop offset="0.5432" stop-color="#ffff00"/><stop offset="1.0000" stop-color="#ffd600"/></linearGradient><linearGradient id="i27" gradientUnits="userSpaceOnUse" x1="1911.5" y1="0" x2="2189.5" y2="0"><stop offset="0.0000" stop-color="#caff09"/><stop offset="0.5360" stop-color="#ffff00"/><stop offset="1.0000" stop-color="#ffd500"/></linearGradient><linearGradient id="i28" gradientUnits="userSpaceOnUse" x1="1911.5" y1="0" x2="2189.5" y2="0"><stop offset="0.0000" stop-color="#caff0a"/><stop offset="0.5252" stop-color="#ffff00"/><stop offset="1.0000" stop-color="#ffd400"/></linearGradient><linearGradient id="i29" gradientUnits="userSpaceOnUse" x1="1911.5" y1="0" x2="2189.5" y2="0"><stop offset="0.0000" stop-color="#cbff0a"/><stop offset="0.5144" stop-color="#ffff00"/><stop offset="1.0000" stop-color="#ffd300"/></linearGradient><linearGradient id="i30" gradientUnits="userSpaceOnUse" x1="1911.5" y1="0" x2="2189.5" y2="0"><stop offset="0.0000" stop-color="#ccff0a"/><stop offset="0.5036" stop-color="#ffff00"/><stop offset="1.0000" stop-color="#ffd200"/></linearGradient><linearGradient id="i31" gradientUnits="userSpaceOnUse" x1="1911.5" y1="0" x2="2189.5" y2="0"><stop offset="0.0000" stop-color="#cdff0b"/><stop offset="0.4964" stop-color="#ffff00"/><stop offset="1.0000" stop-color="#ffd100"/></linearGradient><linearGradient id="i32" gradientUnits="userSpaceOnUse" x1="1911.5" y1="0" x2="2189.5" y2="0"><stop offset="0.0000" stop-color="#ceff0b"/><stop offset="0.4856" stop-color="#ffff01"/><stop offset="1.0000" stop-color="#ffd100"/></linearGradient><linearGradient id="i33" gradientUnits="userSpaceOnUse" x1="1911.5" y1="0" x2="2189.5" y2="0"><stop offset="0.0000" stop-color="#cfff0c"/><stop offset="0.4748" stop-color="#ffff02"/><stop offset="1.0000" stop-color="#ffd000"/></linearGradient><linearGradient id="i34" gradientUnits="userSpaceOnUse" x1="1911.5" y1="0" x2="2189.5" y2="0"><stop offset="0.0000" stop-color="#d0ff0c"/><stop offset="0.4676" stop-color="#ffff02"/><stop offset="1.0000" stop-color="#ffcf00"/></linearGradient><linearGradient id="i35" gradientUnits="userSpaceOnUse" x1="1911.5" y1="0" x2="2189.5" y2="0"><stop offset="0.0000" stop-color="#d1ff0d"/><stop offset="0.4568" stop-color="#ffff03"/><stop offset="1.0000" stop-color="#ffce00"/></linearGradient><linearGradient id="i36" gradientUnits="userSpaceOnUse" x1="1911.5" y1="0" x2="2189.5" y2="0"><stop offset="0.0000" stop-color="#d1ff0d"/><stop offset="0.4460" stop-color="#ffff04"/><stop offset="1.0000" stop-color="#ffcd00"/></linearGradient><linearGradient id="i37" gradientUnits="userSpaceOnUse" x1="1911.5" y1="0" x2="2189.5" y2="0"><stop offset="0.0000" stop-color="#d2ff0e"/><stop offset="0.4353" stop-color="#ffff04"/><stop offset="1.0000" stop-color="#ffcc00"/></linearGradient><linearGradient id="i38" gradientUnits="userSpaceOnUse" x1="1911.5" y1="0" x2="2189.5" y2="0"><stop offset="0.0000" stop-color="#d3ff0e"/><stop offset="0.4281" stop-color="#ffff05"/><stop offset="0.6547" stop-color="#ffe800"/><stop offset="1.0000" stop-color="#ffcc00"/></linearGradient><linearGradient id="i39" gradientUnits="userSpaceOnUse" x1="1911.5" y1="0" x2="2189.5" y2="0"><stop offset="0.0000" stop-color="#d4ff0f"/><stop offset="0.4173" stop-color="#ffff06"/><stop offset="0.6763" stop-color="#ffe500"/><stop offset="1.0000" stop-color="#ffcb00"/></linearGradient><linearGradient id="i40" gradientUnits="userSpaceOnUse" x1="1911.5" y1="0" x2="2189.5" y2="0"><stop offset="0.0000" stop-color="#d5ff0f"/><stop offset="0.4065" stop-color="#ffff07"/><stop offset="0.6942" stop-color="#ffe300"/><stop offset="1.0000" stop-color="#ffca00"/></linearGradient><linearGradient id="i41" gradientUnits="userSpaceOnUse" x1="1911.5" y1="0" x2="2189.5" y2="0"><stop offset="0.0000" stop-color="#d6ff10"/><stop offset="0.3993" stop-color="#ffff07"/><stop offset="0.7158" stop-color="#ffe000"/><stop offset="1.0000" stop-color="#ffc900"/></linearGradient><linearGradient id="i42" gradientUnits="userSpaceOnUse" x1="1911.5" y1="0" x2="2189.5" y2="0"><stop offset="0.0000" stop-color="#d7ff10"/><stop offset="0.3885" stop-color="#ffff08"/><stop offset="0.7374" stop-color="#ffdd00"/><stop offset="1.0000" stop-color="#ffc800"/></linearGradient><linearGradient id="i43" gradientUnits="userSpaceOnUse" x1="1911.5" y1="0" x2="2189.5" y2="0"><stop offset="0.0000" stop-color="#d8ff11"/><stop offset="0.3777" stop-color="#ffff09"/><stop offset="0.7554" stop-color="#ffdb00"/><stop offset="1.0000" stop-color="#ffc800"/></linearGradient><linearGradient id="i44" gradientUnits="userSpaceOnUse" x1="1911.5" y1="0" x2="2189.5" y2="0"><stop offset="0.0000" stop-color="#d9ff11"/><stop offset="0.3669" stop-color="#ffff09"/><stop offset="0.7770" stop-color="#ffd800"/><stop offset="1.0000" stop-color="#ffc700"/></linearGradient><linearGradient id="i45" gradientUnits="userSpaceOnUse" x1="1911.5" y1="0" x2="2189.5" y2="0"><stop offset="0.0000" stop-color="#daff12"/><stop offset="0.3597" stop-color="#ffff0a"/><stop offset="0.7986" stop-color="#ffd600"/><stop offset="1.0000" stop-color="#ffc600"/></linearGradient><linearGradient id="i46" gradientUnits="userSpaceOnUse" x1="1911.5" y1="0" x2="2189.5" y2="0"><stop offset="0.0000" stop-color="#dbff12"/><stop offset="0.3489" stop-color="#ffff0b"/><stop offset="1.0000" stop-color="#ffc500"/></linearGradient><linearGradient id="i47" gradientUnits="userSpaceOnUse" x1="1911.5" y1="0" x2="2189.5" y2="0"><stop offset="0.0000" stop-color="#dbff13"/><stop offset="0.3381" stop-color="#ffff0b"/><stop offset="1.0000" stop-color="#ffc400"/></linearGradient><linearGradient id="i48" gradientUnits="userSpaceOnUse" x1="1911.5" y1="0" x2="2189.5" y2="0"><stop offset="0.0000" stop-color="#dcff13"/><stop offset="0.3273" stop-color="#ffff0c"/><stop offset="1.0000" stop-color="#ffc400"/></linearGradient><linearGradient id="i49" gradientUnits="userSpaceOnUse" x1="1911.5" y1="0" x2="2189.5" y2="0"><stop offset="0.0000" stop-color="#ddff14"/><stop offset="0.3201" stop-color="#ffff0d"/><stop offset="0.6439" stop-color="#ffdf05"/><stop offset="1.0000" stop-color="#ffc300"/></linearGradient><linearGradient id="i50" gradientUnits="userSpaceOnUse" x1="1911.5" y1="0" x2="2189.5" y2="0"><stop offset="0.0000" stop-color="#deff14"/><stop offset="0.3094" stop-color="#ffff0e"/><stop offset="0.6367" stop-color="#ffdf05"/><stop offset="1.0000" stop-color="#ffc200"/></linearGradient><linearGradient id="i51" gradientUnits="userSpaceOnUse" x1="1911.5" y1="0" x2="2189.5" y2="0"><stop offset="0.0000" stop-color="#dfff15"/><stop offset="0.2986" stop-color="#ffff0e"/><stop offset="0.6331" stop-color="#ffde06"/><stop offset="1.0000" stop-color="#ffc100"/></linearGradient><linearGradient id="i52" gradientUnits="userSpaceOnUse" x1="1911.5" y1="0" x2="2189.5" y2="0"><stop offset="0.0000" stop-color="#e0ff15"/><stop offset="0.2914" stop-color="#ffff0f"/><stop offset="0.6259" stop-color="#ffde07"/><stop offset="1.0000" stop-color="#ffc000"/></linearGradient><linearGradient id="i53" gradientUnits="userSpaceOnUse" x1="1911.5" y1="0" x2="2189.5" y2="0"><stop offset="0.0000" stop-color="#e1ff16"/><stop offset="0.2806" stop-color="#ffff10"/><stop offset="0.6223" stop-color="#ffdd07"/><stop offset="1.0000" stop-color="#ffc000"/></linearGradient><linearGradient id="i54" gradientUnits="userSpaceOnUse" x1="1911.5" y1="0" x2="2189.5" y2="0"><stop offset="0.0000" stop-color="#e2ff16"/><stop offset="0.2698" stop-color="#ffff10"/><stop offset="0.6151" stop-color="#ffdd08"/><stop offset="1.0000" stop-color="#ffbf00"/></linearGradient><linearGradient id="i55" gradientUnits="userSpaceOnUse" x1="1911.5" y1="0" x2="2189.5" y2="0"><stop offset="0.0000" stop-color="#e3ff17"/><stop offset="0.2590" stop-color="#ffff11"/><stop offset="0.6115" stop-color="#ffdc08"/><stop offset="1.0000" stop-color="#ffbe00"/></linearGradient><linearGradient id="i56" gradientUnits="userSpaceOnUse" x1="1911.5" y1="0" x2="2189.5" y2="0"><stop offset="0.0000" stop-color="#e4ff17"/><stop offset="0.2518" stop-color="#ffff12"/><stop offset="0.6043" stop-color="#ffdc09"/><stop offset="1.0000" stop-color="#ffbd00"/></linearGradient><linearGradient id="i57" gradientUnits="userSpaceOnUse" x1="1911.5" y1="0" x2="2189.5" y2="0"><stop offset="0.0000" stop-color="#e5ff18"/><stop offset="0.2410" stop-color="#ffff13"/><stop offset="0.5971" stop-color="#ffdc09"/><stop offset="1.0000" stop-color="#ffbc01"/></linearGradient><linearGradient id="i58" gradientUnits="userSpaceOnUse" x1="1911.5" y1="0" x2="2189.5" y2="0"><stop offset="0.0000" stop-color="#e6ff18"/><stop offset="0.2302" stop-color="#ffff13"/><stop offset="0.5935" stop-color="#ffdb0a"/><stop offset="1.0000" stop-color="#ffbc01"/></linearGradient><linearGradient id="i59" gradientUnits="userSpaceOnUse" x1="1911.5" y1="0" x2="2189.5" y2="0"><stop offset="0.0000" stop-color="#e7ff19"/><stop offset="0.2194" stop-color="#ffff14"/><stop offset="0.5899" stop-color="#ffdb0a"/><stop offset="1.0000" stop-color="#ffbb02"/></linearGradient><linearGradient id="i60" gradientUnits="userSpaceOnUse" x1="1911.5" y1="0" x2="2189.5" y2="0"><stop offset="0.0000" stop-color="#e8ff19"/><stop offset="0.2122" stop-color="#ffff15"/><stop offset="0.5827" stop-color="#ffda0b"/><stop offset="1.0000" stop-color="#ffba02"/></linearGradient><linearGradient id="i61" gradientUnits="userSpaceOnUse" x1="1911.5" y1="0" x2="2189.5" y2="0"><stop offset="0.0000" stop-color="#e9ff1a"/><stop offset="0.2014" stop-color="#ffff16"/><stop offset="0.5755" stop-color="#ffda0b"/><stop offset="1.0000" stop-color="#ffb902"/></linearGradient><linearGradient id="i62" gradientUnits="userSpaceOnUse" x1="1911.5" y1="0" x2="2189.5" y2="0"><stop offset="0.0000" stop-color="#eaff1a"/><stop offset="0.1942" stop-color="#ffff16"/><stop offset="0.5719" stop-color="#ffda0c"/><stop offset="1.0000" stop-color="#ffb903"/></linearGradient><linearGradient id="rb" x1="0" y1="0" x2="0" y2="1"><stop offset="0" stop-color="#ff5858"/><stop offset="1" stop-color="#ff4a4a"/></linearGradient><linearGradient id="gbb" x1="0" y1="0" x2="0" y2="1"><stop offset="0" stop-color="#5cb05c"/><stop offset="1" stop-color="#40a040"/></linearGradient><linearGradient id="bbb" x1="0" y1="0" x2="0" y2="1"><stop offset="0" stop-color="#5a5aff"/><stop offset="1" stop-color="#4040ff"/></linearGradient><linearGradient id="th" x1="0" y1="0" x2="0" y2="1"><stop offset="0" stop-color="#2e2e2e"/><stop offset="0.5" stop-color="#2a2a2a"/><stop offset="0.52" stop-color="#161616"/><stop offset="1" stop-color="#111111"/></linearGradient><linearGradient id="bs" x1="0" y1="0" x2="0" y2="1"><stop offset="0" stop-color="#474747"/><stop offset="1" stop-color="#222222"/></linearGradient><linearGradient id="btn" x1="0" y1="0" x2="0" y2="1"><stop offset="0" stop-color="#a8a8a8"/><stop offset="0.45" stop-color="#8a8a8a"/><stop offset="1" stop-color="#5a5a5a"/></linearGradient><linearGradient id="tb" x1="0" y1="0" x2="0" y2="1"><stop offset="0" stop-color="#b4b4b4"/><stop offset="1" stop-color="#6e6e6e"/></linearGradient><radialGradient id="cg" cx="0.5" cy="0.45" r="0.55"><stop offset="0" stop-color="#b0b0b0"/><stop offset="0.7" stop-color="#9a9a9a"/><stop offset="1" stop-color="#7c7c7c"/></radialGradient></defs>
<rect x="0.00" y="0.00" width="2213.00" height="1284.00" fill="#333333"/>
<rect x="0.00" y="0.00" width="1.30" height="1220.00" fill="#1e1e1e"/>
<rect x="2206.00" y="738.00" width="7.00" height="482.00" fill="url(#rs)"/>
<text x="9.3" y="45.9" font-size="55" fill="#f0f0f0" text-anchor="start" font-weight="normal" textLength="444.1" lengthAdjust="spacingAndGlyphs">Saturation Sweeps</text>
<text x="741.6" y="34.7" font-size="27.6" fill="#f0f0f0" text-anchor="start" font-weight="normal" textLength="81.5" lengthAdjust="spacingAndGlyphs">Levels:</text>
<rect x="832.50" y="8.00" width="449.50" height="34.50" fill="#2a2a2a"/>
<rect x="834.00" y="9.50" width="446.50" height="31.50" fill="url(#dd)"/>
<text x="837.8" y="35.2" font-size="21.8" fill="#f0f0f0" text-anchor="start" font-weight="normal" textLength="120.3" lengthAdjust="spacingAndGlyphs">20% Sweeps</text>
<path d="M1261.8 21.7 L1274.3 21.7 L1268 28.5 Z" fill="#000"/>
<text x="163.3" y="116.4" font-size="28" fill="#f0f0f0" text-anchor="start" font-weight="normal" textLength="144.7" lengthAdjust="spacingAndGlyphs">dE Formula:</text>
<rect x="317.50" y="89.20" width="179.50" height="34.50" fill="#2a2a2a"/>
<rect x="319.00" y="90.70" width="176.50" height="31.50" fill="url(#dd)"/>
<text x="323.2" y="117.0" font-size="22.5" fill="#f0f0f0" text-anchor="start" font-weight="normal" textLength="47.9" lengthAdjust="spacingAndGlyphs">2000</text>
<path d="M477.7 102.8 L488.8 102.8 L483.2 110.7 Z" fill="#000"/>
<text x="187.2" y="159.1" font-size="20.5" fill="#dcdcdc" text-anchor="start" font-weight="normal" textLength="106.4" lengthAdjust="spacingAndGlyphs">DeltaE 2000</text>
<rect x="57.00" y="166.00" width="413.50" height="512.00" fill="#232323"/>
<rect x="111.96" y="166.00" width="2.00" height="512.00" fill="#8a8a8a"/>
<rect x="166.92" y="166.00" width="2.00" height="512.00" fill="#8a8a8a"/>
<rect x="221.88" y="166.00" width="2.00" height="512.00" fill="#8a8a8a"/>
<rect x="276.84" y="166.00" width="2.00" height="512.00" fill="#8a8a8a"/>
<rect x="331.80" y="166.00" width="2.00" height="512.00" fill="#8a8a8a"/>
<rect x="386.76" y="166.00" width="2.00" height="512.00" fill="#8a8a8a"/>
<rect x="441.72" y="166.00" width="2.00" height="512.00" fill="#8a8a8a"/>
<rect x="57.00" y="165.00" width="414.50" height="2.00" fill="#8a8a8a"/>
<rect x="469.50" y="165.00" width="2.00" height="513.00" fill="#8a8a8a"/>
<rect x="57.00" y="165.00" width="2.00" height="514.00" fill="#8a8a8a"/>
<rect x="57.00" y="677.00" width="414.50" height="2.00" fill="#8a8a8a"/>
<rect x="50.00" y="165.00" width="7.00" height="2.00" fill="#d0d0d0"/>
<rect x="50.00" y="251.90" width="7.00" height="2.00" fill="#d0d0d0"/>
<rect x="50.00" y="336.50" width="7.00" height="2.00" fill="#d0d0d0"/>
<rect x="50.00" y="421.30" width="7.00" height="2.00" fill="#d0d0d0"/>
<rect x="50.00" y="505.80" width="7.00" height="2.00" fill="#d0d0d0"/>
<rect x="50.00" y="592.90" width="7.00" height="2.00" fill="#d0d0d0"/>
<rect x="50.00" y="676.90" width="7.00" height="2.00" fill="#d0d0d0"/>
<rect x="57.00" y="678.00" width="2.00" height="5.00" fill="#d0d0d0"/>
<text x="58.0" y="707.3" font-size="20" fill="#dcdcdc" text-anchor="middle" font-weight="normal">0</text>
<rect x="111.96" y="678.00" width="2.00" height="5.00" fill="#d0d0d0"/>
<text x="113.0" y="707.3" font-size="20" fill="#dcdcdc" text-anchor="middle" font-weight="normal">2</text>
<rect x="166.92" y="678.00" width="2.00" height="5.00" fill="#d0d0d0"/>
<text x="167.9" y="707.3" font-size="20" fill="#dcdcdc" text-anchor="middle" font-weight="normal">4</text>
<rect x="221.88" y="678.00" width="2.00" height="5.00" fill="#d0d0d0"/>
<text x="222.9" y="707.3" font-size="20" fill="#dcdcdc" text-anchor="middle" font-weight="normal">6</text>
<rect x="276.84" y="678.00" width="2.00" height="5.00" fill="#d0d0d0"/>
<text x="277.8" y="707.3" font-size="20" fill="#dcdcdc" text-anchor="middle" font-weight="normal">8</text>
<rect x="331.80" y="678.00" width="2.00" height="5.00" fill="#d0d0d0"/>
<text x="332.8" y="707.3" font-size="20" fill="#dcdcdc" text-anchor="middle" font-weight="normal">10</text>
<rect x="386.76" y="678.00" width="2.00" height="5.00" fill="#d0d0d0"/>
<text x="387.8" y="707.3" font-size="20" fill="#dcdcdc" text-anchor="middle" font-weight="normal">12</text>
<rect x="441.72" y="678.00" width="2.00" height="5.00" fill="#d0d0d0"/>
<text x="442.7" y="707.3" font-size="20" fill="#dcdcdc" text-anchor="middle" font-weight="normal">14</text>
<text x="7.9" y="216.6" font-size="20" fill="#dcdcdc" text-anchor="start" font-weight="normal" textLength="49.4" lengthAdjust="spacingAndGlyphs">100%</text>
<text x="18.9" y="301.5" font-size="20" fill="#dcdcdc" text-anchor="start" font-weight="normal" textLength="38.4" lengthAdjust="spacingAndGlyphs">80%</text>
<text x="18.9" y="386.9" font-size="20" fill="#dcdcdc" text-anchor="start" font-weight="normal" textLength="38.4" lengthAdjust="spacingAndGlyphs">60%</text>
<text x="18.9" y="473.9" font-size="20" fill="#dcdcdc" text-anchor="start" font-weight="normal" textLength="38.4" lengthAdjust="spacingAndGlyphs">40%</text>
<text x="18.9" y="558.4" font-size="20" fill="#dcdcdc" text-anchor="start" font-weight="normal" textLength="38.4" lengthAdjust="spacingAndGlyphs">20%</text>
<text x="56.5" y="644.2" font-size="20" fill="#dcdcdc" text-anchor="end" font-weight="normal">100</text>
<rect x="59.00" y="174.10" width="17.90" height="9.00" fill="#000"/>
<rect x="59.00" y="176.10" width="15.90" height="5.00" fill="url(#b1)"/>
<rect x="59.00" y="183.07" width="51.80" height="9.00" fill="#000"/>
<rect x="59.00" y="185.07" width="49.80" height="5.00" fill="url(#b2)"/>
<rect x="59.00" y="192.04" width="15.80" height="9.00" fill="#000"/>
<rect x="59.00" y="194.04" width="13.80" height="5.00" fill="url(#b3)"/>
<rect x="59.00" y="201.01" width="40.90" height="9.00" fill="#000"/>
<rect x="59.00" y="203.01" width="38.90" height="5.00" fill="url(#b4)"/>
<rect x="59.00" y="209.98" width="22.80" height="9.00" fill="#000"/>
<rect x="59.00" y="211.98" width="20.80" height="5.00" fill="url(#b5)"/>
<rect x="59.00" y="218.95" width="40.90" height="9.00" fill="#000"/>
<rect x="59.00" y="220.95" width="38.90" height="5.00" fill="url(#b6)"/>
<rect x="59.00" y="258.90" width="21.00" height="9.00" fill="#000"/>
<rect x="59.00" y="260.90" width="19.00" height="5.00" fill="url(#b7)"/>
<rect x="59.00" y="267.87" width="44.80" height="9.00" fill="#000"/>
<rect x="59.00" y="269.87" width="42.80" height="5.00" fill="url(#b8)"/>
<rect x="59.00" y="276.84" width="47.60" height="9.00" fill="#000"/>
<rect x="59.00" y="278.84" width="45.60" height="5.00" fill="url(#b9)"/>
<rect x="59.00" y="285.81" width="49.70" height="9.00" fill="#000"/>
<rect x="59.00" y="287.81" width="47.70" height="5.00" fill="url(#b10)"/>
<rect x="59.00" y="294.78" width="26.80" height="9.00" fill="#000"/>
<rect x="59.00" y="296.78" width="24.80" height="5.00" fill="url(#b11)"/>
<rect x="59.00" y="303.75" width="51.80" height="9.00" fill="#000"/>
<rect x="59.00" y="305.75" width="49.80" height="5.00" fill="url(#b12)"/>
<rect x="59.00" y="344.10" width="24.80" height="9.00" fill="#000"/>
<rect x="59.00" y="346.10" width="22.80" height="5.00" fill="url(#b13)"/>
<rect x="59.00" y="353.07" width="42.90" height="9.00" fill="#000"/>
<rect x="59.00" y="355.07" width="40.90" height="5.00" fill="url(#b14)"/>
<rect x="59.00" y="362.04" width="54.00" height="9.00" fill="#000"/>
<rect x="59.00" y="364.04" width="52.00" height="5.00" fill="url(#b15)"/>
<rect x="59.00" y="371.01" width="56.90" height="9.00" fill="#000"/>
<rect x="59.00" y="373.01" width="54.90" height="5.00" fill="url(#b16)"/>
<rect x="59.00" y="379.98" width="33.90" height="9.00" fill="#000"/>
<rect x="59.00" y="381.98" width="31.90" height="5.00" fill="url(#b17)"/>
<rect x="59.00" y="388.95" width="54.00" height="9.00" fill="#000"/>
<rect x="59.00" y="390.95" width="52.00" height="5.00" fill="url(#b18)"/>
<rect x="59.00" y="430.50" width="22.20" height="9.00" fill="#000"/>
<rect x="59.00" y="432.50" width="20.20" height="5.00" fill="url(#b19)"/>
<rect x="59.00" y="439.47" width="44.60" height="9.00" fill="#000"/>
<rect x="59.00" y="441.47" width="42.60" height="5.00" fill="url(#b20)"/>
<rect x="59.00" y="448.44" width="67.20" height="9.00" fill="#000"/>
<rect x="59.00" y="450.44" width="65.20" height="5.00" fill="url(#b21)"/>
<rect x="59.00" y="457.41" width="73.80" height="9.00" fill="#000"/>
<rect x="59.00" y="459.41" width="71.80" height="5.00" fill="url(#b22)"/>
<rect x="59.00" y="466.38" width="46.00" height="9.00" fill="#000"/>
<rect x="59.00" y="468.38" width="44.00" height="5.00" fill="url(#b23)"/>
<rect x="59.00" y="475.35" width="65.90" height="9.00" fill="#000"/>
<rect x="59.00" y="477.35" width="63.90" height="5.00" fill="url(#b24)"/>
<rect x="59.00" y="515.40" width="40.50" height="9.00" fill="#000"/>
<rect x="59.00" y="517.40" width="38.50" height="5.00" fill="url(#b25)"/>
<rect x="59.00" y="524.37" width="60.40" height="9.00" fill="#000"/>
<rect x="59.00" y="526.37" width="58.40" height="5.00" fill="url(#b26)"/>
<rect x="59.00" y="533.34" width="85.50" height="9.00" fill="#000"/>
<rect x="59.00" y="535.34" width="83.50" height="5.00" fill="url(#b27)"/>
<rect x="59.00" y="542.31" width="85.50" height="9.00" fill="#000"/>
<rect x="59.00" y="544.31" width="83.50" height="5.00" fill="url(#b28)"/>
<rect x="59.00" y="551.28" width="69.10" height="9.00" fill="#000"/>
<rect x="59.00" y="553.28" width="67.10" height="5.00" fill="url(#b29)"/>
<rect x="59.00" y="560.25" width="103.80" height="9.00" fill="#000"/>
<rect x="59.00" y="562.25" width="101.80" height="5.00" fill="url(#b30)"/>
<rect x="59.00" y="654.20" width="96.40" height="9.00" fill="#000"/>
<rect x="59.00" y="656.20" width="94.40" height="5.00" fill="url(#gb)"/>
<text x="589.3" y="87.1" font-size="20.5" fill="#dcdcdc" text-anchor="start" font-weight="normal" textLength="61.4" lengthAdjust="spacingAndGlyphs">Delta L</text>
<rect x="541.70" y="95.10" width="191.00" height="373.95" fill="#232323"/>
<rect x="541.70" y="94.10" width="191.00" height="2.00" fill="#8a8a8a"/>
<rect x="534.20" y="94.10" width="7.50" height="2.00" fill="#e0e0e0"/>
<text x="533.2" y="102.2" font-size="20" fill="#dcdcdc" text-anchor="end" font-weight="normal">15</text>
<rect x="541.70" y="156.10" width="191.00" height="2.00" fill="#8a8a8a"/>
<rect x="534.20" y="156.10" width="7.50" height="2.00" fill="#e0e0e0"/>
<text x="533.2" y="164.2" font-size="20" fill="#dcdcdc" text-anchor="end" font-weight="normal">10</text>
<rect x="541.70" y="219.00" width="191.00" height="2.00" fill="#8a8a8a"/>
<rect x="534.20" y="219.00" width="7.50" height="2.00" fill="#e0e0e0"/>
<text x="533.2" y="227.1" font-size="20" fill="#dcdcdc" text-anchor="end" font-weight="normal">5</text>
<rect x="541.70" y="282.30" width="191.00" height="2.00" fill="#8a8a8a"/>
<rect x="534.20" y="282.30" width="7.50" height="2.00" fill="#e0e0e0"/>
<text x="533.2" y="290.4" font-size="20" fill="#dcdcdc" text-anchor="end" font-weight="normal">0</text>
<rect x="541.70" y="344.10" width="191.00" height="2.00" fill="#8a8a8a"/>
<rect x="534.20" y="344.10" width="7.50" height="2.00" fill="#e0e0e0"/>
<text x="533.2" y="352.2" font-size="20" fill="#dcdcdc" text-anchor="end" font-weight="normal">-5</text>
<rect x="541.70" y="407.10" width="191.00" height="2.00" fill="#8a8a8a"/>
<rect x="534.20" y="407.10" width="7.50" height="2.00" fill="#e0e0e0"/>
<text x="533.2" y="415.2" font-size="20" fill="#dcdcdc" text-anchor="end" font-weight="normal">-10</text>
<rect x="541.70" y="468.05" width="191.00" height="2.00" fill="#8a8a8a"/>
<rect x="534.20" y="468.05" width="7.50" height="2.00" fill="#e0e0e0"/>
<text x="533.2" y="476.2" font-size="20" fill="#dcdcdc" text-anchor="end" font-weight="normal">-15</text>
<rect x="540.70" y="93.10" width="2.00" height="376.95" fill="#8a8a8a"/>
<rect x="731.70" y="93.10" width="2.00" height="376.95" fill="#8a8a8a"/>
<rect x="540.70" y="93.10" width="193.00" height="4.00" fill="#8a8a8a"/>
<rect x="541.20" y="469.05" width="1.50" height="7.80" fill="#e0e0e0"/>
<rect x="732.20" y="469.05" width="1.50" height="7.80" fill="#e0e0e0"/>
<text x="612.9" y="490.0" font-size="20" fill="#dcdcdc" text-anchor="start" font-weight="normal" textLength="49.0" lengthAdjust="spacingAndGlyphs">100%</text>
<rect x="560.00" y="281.20" width="154.00" height="15.90" fill="#000"/>
<rect x="562.00" y="283.20" width="150.00" height="11.90" fill="url(#yb)"/>
<text x="849.5" y="87.1" font-size="20.5" fill="#dcdcdc" text-anchor="start" font-weight="normal" textLength="64.4" lengthAdjust="spacingAndGlyphs">Delta C</text>
<rect x="803.10" y="95.10" width="192.10" height="373.95" fill="#232323"/>
<rect x="803.10" y="94.10" width="192.10" height="2.00" fill="#8a8a8a"/>
<rect x="795.60" y="94.10" width="7.50" height="2.00" fill="#e0e0e0"/>
<text x="794.6" y="102.2" font-size="20" fill="#dcdcdc" text-anchor="end" font-weight="normal">15</text>
<rect x="803.10" y="156.10" width="192.10" height="2.00" fill="#8a8a8a"/>
<rect x="795.60" y="156.10" width="7.50" height="2.00" fill="#e0e0e0"/>
<text x="794.6" y="164.2" font-size="20" fill="#dcdcdc" text-anchor="end" font-weight="normal">10</text>
<rect x="803.10" y="219.00" width="192.10" height="2.00" fill="#8a8a8a"/>
<rect x="795.60" y="219.00" width="7.50" height="2.00" fill="#e0e0e0"/>
<text x="794.6" y="227.1" font-size="20" fill="#dcdcdc" text-anchor="end" font-weight="normal">5</text>
<rect x="803.10" y="282.30" width="192.10" height="2.00" fill="#8a8a8a"/>
<rect x="795.60" y="282.30" width="7.50" height="2.00" fill="#e0e0e0"/>
<text x="794.6" y="290.4" font-size="20" fill="#dcdcdc" text-anchor="end" font-weight="normal">0</text>
<rect x="803.10" y="344.10" width="192.10" height="2.00" fill="#8a8a8a"/>
<rect x="795.60" y="344.10" width="7.50" height="2.00" fill="#e0e0e0"/>
<text x="794.6" y="352.2" font-size="20" fill="#dcdcdc" text-anchor="end" font-weight="normal">-5</text>
<rect x="803.10" y="407.10" width="192.10" height="2.00" fill="#8a8a8a"/>
<rect x="795.60" y="407.10" width="7.50" height="2.00" fill="#e0e0e0"/>
<text x="794.6" y="415.2" font-size="20" fill="#dcdcdc" text-anchor="end" font-weight="normal">-10</text>
<rect x="803.10" y="468.05" width="192.10" height="2.00" fill="#8a8a8a"/>
<rect x="795.60" y="468.05" width="7.50" height="2.00" fill="#e0e0e0"/>
<text x="794.6" y="476.2" font-size="20" fill="#dcdcdc" text-anchor="end" font-weight="normal">-15</text>
<rect x="802.10" y="93.10" width="2.00" height="376.95" fill="#8a8a8a"/>
<rect x="994.20" y="93.10" width="2.00" height="376.95" fill="#8a8a8a"/>
<rect x="802.10" y="93.10" width="194.10" height="4.00" fill="#8a8a8a"/>
<rect x="802.60" y="469.05" width="1.50" height="7.80" fill="#e0e0e0"/>
<rect x="994.70" y="469.05" width="1.50" height="7.80" fill="#e0e0e0"/>
<text x="874.9" y="490.0" font-size="20" fill="#dcdcdc" text-anchor="start" font-weight="normal" textLength="49.0" lengthAdjust="spacingAndGlyphs">100%</text>
<rect x="822.30" y="275.00" width="153.70" height="7.90" fill="#000"/>
<rect x="824.30" y="277.00" width="149.70" height="3.90" fill="url(#yb)"/>
<text x="1110.6" y="87.1" font-size="20.5" fill="#dcdcdc" text-anchor="start" font-weight="normal" textLength="65.4" lengthAdjust="spacingAndGlyphs">Delta H</text>
<rect x="1064.90" y="95.10" width="192.10" height="373.95" fill="#232323"/>
<rect x="1064.90" y="94.10" width="192.10" height="2.00" fill="#8a8a8a"/>
<rect x="1057.40" y="94.10" width="7.50" height="2.00" fill="#e0e0e0"/>
<text x="1056.4" y="102.2" font-size="20" fill="#dcdcdc" text-anchor="end" font-weight="normal">15</text>
<rect x="1064.90" y="156.10" width="192.10" height="2.00" fill="#8a8a8a"/>
<rect x="1057.40" y="156.10" width="7.50" height="2.00" fill="#e0e0e0"/>
<text x="1056.4" y="164.2" font-size="20" fill="#dcdcdc" text-anchor="end" font-weight="normal">10</text>
<rect x="1064.90" y="219.00" width="192.10" height="2.00" fill="#8a8a8a"/>
<rect x="1057.40" y="219.00" width="7.50" height="2.00" fill="#e0e0e0"/>
<text x="1056.4" y="227.1" font-size="20" fill="#dcdcdc" text-anchor="end" font-weight="normal">5</text>
<rect x="1064.90" y="282.30" width="192.10" height="2.00" fill="#8a8a8a"/>
<rect x="1057.40" y="282.30" width="7.50" height="2.00" fill="#e0e0e0"/>
<text x="1056.4" y="290.4" font-size="20" fill="#dcdcdc" text-anchor="end" font-weight="normal">0</text>
<rect x="1064.90" y="344.10" width="192.10" height="2.00" fill="#8a8a8a"/>
<rect x="1057.40" y="344.10" width="7.50" height="2.00" fill="#e0e0e0"/>
<text x="1056.4" y="352.2" font-size="20" fill="#dcdcdc" text-anchor="end" font-weight="normal">-5</text>
<rect x="1064.90" y="407.10" width="192.10" height="2.00" fill="#8a8a8a"/>
<rect x="1057.40" y="407.10" width="7.50" height="2.00" fill="#e0e0e0"/>
<text x="1056.4" y="415.2" font-size="20" fill="#dcdcdc" text-anchor="end" font-weight="normal">-10</text>
<rect x="1064.90" y="468.05" width="192.10" height="2.00" fill="#8a8a8a"/>
<rect x="1057.40" y="468.05" width="7.50" height="2.00" fill="#e0e0e0"/>
<text x="1056.4" y="476.2" font-size="20" fill="#dcdcdc" text-anchor="end" font-weight="normal">-15</text>
<rect x="1063.90" y="93.10" width="2.00" height="376.95" fill="#8a8a8a"/>
<rect x="1256.00" y="93.10" width="2.00" height="376.95" fill="#8a8a8a"/>
<rect x="1063.90" y="93.10" width="194.10" height="4.00" fill="#8a8a8a"/>
<rect x="1064.40" y="469.05" width="1.50" height="7.80" fill="#e0e0e0"/>
<rect x="1256.50" y="469.05" width="1.50" height="7.80" fill="#e0e0e0"/>
<text x="1136.7" y="490.0" font-size="20" fill="#dcdcdc" text-anchor="start" font-weight="normal" textLength="49.0" lengthAdjust="spacingAndGlyphs">100%</text>
<rect x="1084.00" y="250.20" width="153.80" height="32.70" fill="#000"/>
<rect x="1086.00" y="252.20" width="149.80" height="28.70" fill="url(#yb)"/>
<rect x="497.90" y="503.60" width="784.90" height="216.20" fill="#000"/>
<rect x="524.80" y="512.90" width="132.00" height="175.70" fill="#ffffff"/>
<rect x="526.00" y="514.10" width="129.60" height="86.70" fill="#b9c3a2"/>
<rect x="526.00" y="600.30" width="129.60" height="87.10" fill="#bfbfa1"/>
<text x="575.0" y="709.2" font-size="16.5" fill="#ffffff" text-anchor="start" font-weight="normal" textLength="32.0" lengthAdjust="spacingAndGlyphs">20%</text>
<rect x="678.35" y="512.90" width="132.00" height="175.70" fill="#ffffff"/>
<rect x="679.55" y="514.10" width="129.60" height="86.70" fill="#bac084"/>
<rect x="679.55" y="600.30" width="129.60" height="87.10" fill="#c1bf84"/>
<text x="728.5" y="709.2" font-size="16.5" fill="#ffffff" text-anchor="start" font-weight="normal" textLength="32.0" lengthAdjust="spacingAndGlyphs">40%</text>
<rect x="831.90" y="512.90" width="132.00" height="175.70" fill="#ffffff"/>
<rect x="833.10" y="514.10" width="129.60" height="86.70" fill="#bbbd6c"/>
<rect x="833.10" y="600.30" width="129.60" height="87.10" fill="#bfbd6c"/>
<text x="882.1" y="709.2" font-size="16.5" fill="#ffffff" text-anchor="start" font-weight="normal" textLength="32.0" lengthAdjust="spacingAndGlyphs">60%</text>
<rect x="985.45" y="512.90" width="132.00" height="175.70" fill="#ffffff"/>
<rect x="986.65" y="514.10" width="129.60" height="86.70" fill="#b9bf50"/>
<rect x="986.65" y="600.30" width="129.60" height="87.10" fill="#c0bf4f"/>
<text x="1035.6" y="709.2" font-size="16.5" fill="#ffffff" text-anchor="start" font-weight="normal" textLength="32.0" lengthAdjust="spacingAndGlyphs">80%</text>
<rect x="1139.00" y="512.90" width="132.00" height="175.70" fill="#ffffff"/>
<rect x="1140.20" y="514.10" width="129.60" height="86.70" fill="#bdbe00"/>
<rect x="1140.20" y="600.30" width="129.60" height="87.10" fill="#c0c000"/>
<text x="1184.8" y="709.2" font-size="16.5" fill="#ffffff" text-anchor="start" font-weight="normal" textLength="40.8" lengthAdjust="spacingAndGlyphs">100%</text>
<text transform="translate(515.5 551.7) rotate(-90)" font-size="16.5" fill="#fff" text-anchor="middle">Actual</text>
<text transform="translate(515.5 649.6) rotate(-90)" font-size="16.5" fill="#fff" text-anchor="middle">Target</text>
<rect x="1292.00" y="0.00" width="921.00" height="738.00" fill="#1c1c1c"/>
<rect x="1301.00" y="7.00" width="903.00" height="722.00" fill="#333333"/>
<text x="1695.9" y="31.0" font-size="20.6" fill="#dcdcdc" text-anchor="start" font-weight="normal" textLength="113.2" lengthAdjust="spacingAndGlyphs">CIE 1976 u'v'</text>
<rect x="1351.00" y="38.00" width="848.00" height="653.00" fill="#232323"/>
<g clip-path="url(#pf)">
<g clip-path="url(#hs)"><rect x="1351" y="53.0" width="848" height="3.6" fill="url(#c0)"/><rect x="1351" y="56.0" width="848" height="3.6" fill="url(#c1)"/><rect x="1351" y="59.0" width="848" height="3.6" fill="url(#c2)"/><rect x="1351" y="62.0" width="848" height="3.6" fill="url(#c3)"/><rect x="1351" y="65.0" width="848" height="3.6" fill="url(#c4)"/><rect x="1351" y="68.0" width="848" height="3.6" fill="url(#c5)"/><rect x="1351" y="71.0" width="848" height="3.6" fill="url(#c6)"/><rect x="1351" y="74.0" width="848" height="3.6" fill="url(#c7)"/><rect x="1351" y="77.0" width="848" height="3.6" fill="url(#c8)"/><rect x="1351" y="80.0" width="848" height="3.6" fill="url(#c9)"/><rect x="1351" y="83.0" width="848" height="3.6" fill="url(#c10)"/><rect x="1351" y="86.0" width="848" height="3.6" fill="url(#c11)"/><rect x="1351" y="89.0" width="848" height="3.6" fill="url(#c12)"/><rect x="1351" y="92.0" width="848" height="3.6" fill="url(#c13)"/><rect x="1351" y="95.0" width="848" height="3.6" fill="url(#c14)"/><rect x="1351" y="98.0" width="848" height="3.6" fill="url(#c15)"/><rect x="1351" y="101.0" width="848" height="3.6" fill="url(#c16)"/><rect x="1351" y="104.0" width="848" height="3.6" fill="url(#c17)"/><rect x="1351" y="107.0" width="848" height="3.6" fill="url(#c18)"/><rect x="1351" y="110.0" width="848" height="3.6" fill="url(#c19)"/><rect x="1351" y="113.0" width="848" height="3.6" fill="url(#c20)"/><rect x="1351" y="116.0" width="848" height="3.6" fill="url(#c21)"/><rect x="1351" y="119.0" width="848" height="3.6" fill="url(#c22)"/><rect x="1351" y="122.0" width="848" height="3.6" fill="url(#c23)"/><rect x="1351" y="125.0" width="848" height="3.6" fill="url(#c24)"/><rect x="1351" y="128.0" width="848" height="3.6" fill="url(#c25)"/><rect x="1351" y="131.0" width="848" height="3.6" fill="url(#c26)"/><rect x="1351" y="134.0" width="848" height="3.6" fill="url(#c27)"/><rect x="1351" y="137.0" width="848" height="3.6" fill="url(#c28)"/><rect x="1351" y="140.0" width="848" height="3.6" fill="url(#c29)"/><rect x="1351" y="143.0" width="848" height="3.6" fill="url(#c30)"/><rect x="1351" y="146.0" width="848" height="3.6" fill="url(#c31)"/><rect x="1351" y="149.0" width="848" height="3.6" fill="url(#c32)"/><rect x="1351" y="152.0" width="848" height="3.6" fill="url(#c33)"/><rect x="1351" y="155.0" width="848" height="3.6" fill="url(#c34)"/><rect x="1351" y="158.0" width="848" height="3.6" fill="url(#c35)"/><rect x="1351" y="161.0" width="848" height="3.6" fill="url(#c36)"/><rect x="1351" y="164.0" width="848" height="3.6" fill="url(#c37)"/><rect x="1351" y="167.0" width="848" height="3.6" fill="url(#c38)"/><rect x="1351" y="170.0" width="848" height="3.6" fill="url(#c39)"/><rect x="1351" y="173.0" width="848" height="3.6" fill="url(#c40)"/><rect x="1351" y="176.0" width="848" height="3.6" fill="url(#c41)"/><rect x="1351" y="179.0" width="848" height="3.6" fill="url(#c42)"/><rect x="1351" y="182.0" width="848" height="3.6" fill="url(#c43)"/><rect x="1351" y="185.0" width="848" height="3.6" fill="url(#c44)"/><rect x="1351" y="188.0" width="848" height="3.6" fill="url(#c45)"/><rect x="1351" y="191.0" width="848" height="3.6" fill="url(#c46)"/><rect x="1351" y="194.0" width="848" height="3.6" fill="url(#c47)"/><rect x="1351" y="197.0" width="848" height="3.6" fill="url(#c48)"/><rect x="1351" y="200.0" width="848" height="3.6" fill="url(#c49)"/><rect x="1351" y="203.0" width="848" height="3.6" fill="url(#c50)"/><rect x="1351" y="206.0" width="848" height="3.6" fill="url(#c51)"/><rect x="1351" y="209.0" width="848" height="3.6" fill="url(#c52)"/><rect x="1351" y="212.0" width="848" height="3.6" fill="url(#c53)"/><rect x="1351" y="215.0" width="848" height="3.6" fill="url(#c54)"/><rect x="1351" y="218.0" width="848" height="3.6" fill="url(#c55)"/><rect x="1351" y="221.0" width="848" height="3.6" fill="url(#c56)"/><rect x="1351" y="224.0" width="848" height="3.6" fill="url(#c57)"/><rect x="1351" y="227.0" width="848" height="3.6" fill="url(#c58)"/><rect x="1351" y="230.0" width="848" height="3.6" fill="url(#c59)"/><rect x="1351" y="233.0" width="848" height="3.6" fill="url(#c60)"/><rect x="1351" y="236.0" width="848" height="3.6" fill="url(#c61)"/><rect x="1351" y="239.0" width="848" height="3.6" fill="url(#c62)"/><rect x="1351" y="242.0" width="848" height="3.6" fill="url(#c63)"/><rect x="1351" y="245.0" width="848" height="3.6" fill="url(#c64)"/><rect x="1351" y="248.0" width="848" height="3.6" fill="url(#c65)"/><rect x="1351" y="251.0" width="848" height="3.6" fill="url(#c66)"/><rect x="1351" y="254.0" width="848" height="3.6" fill="url(#c67)"/><rect x="1351" y="257.0" width="848" height="3.6" fill="url(#c68)"/><rect x="1351" y="260.0" width="848" height="3.6" fill="url(#c69)"/><rect x="1351" y="263.0" width="848" height="3.6" fill="url(#c70)"/><rect x="1351" y="266.0" width="848" height="3.6" fill="url(#c71)"/><rect x="1351" y="269.0" width="848" height="3.6" fill="url(#c72)"/><rect x="1351" y="272.0" width="848" height="3.6" fill="url(#c73)"/><rect x="1351" y="275.0" width="848" height="3.6" fill="url(#c74)"/><rect x="1351" y="278.0" width="848" height="3.6" fill="url(#c75)"/><rect x="1351" y="281.0" width="848" height="3.6" fill="url(#c76)"/><rect x="1351" y="284.0" width="848" height="3.6" fill="url(#c77)"/><rect x="1351" y="287.0" width="848" height="3.6" fill="url(#c78)"/><rect x="1351" y="290.0" width="848" height="3.6" fill="url(#c79)"/><rect x="1351" y="293.0" width="848" height="3.6" fill="url(#c80)"/><rect x="1351" y="296.0" width="848" height="3.6" fill="url(#c81)"/><rect x="1351" y="299.0" width="848" height="3.6" fill="url(#c82)"/><rect x="1351" y="302.0" width="848" height="3.6" fill="url(#c83)"/><rect x="1351" y="305.0" width="848" height="3.6" fill="url(#c84)"/><rect x="1351" y="308.0" width="848" height="3.6" fill="url(#c85)"/><rect x="1351" y="311.0" width="848" height="3.6" fill="url(#c86)"/><rect x="1351" y="314.0" width="848" height="3.6" fill="url(#c87)"/><rect x="1351" y="317.0" width="848" height="3.6" fill="url(#c88)"/><rect x="1351" y="320.0" width="848" height="3.6" fill="url(#c89)"/><rect x="1351" y="323.0" width="848" height="3.6" fill="url(#c90)"/><rect x="1351" y="326.0" width="848" height="3.6" fill="url(#c91)"/><rect x="1351" y="329.0" width="848" height="3.6" fill="url(#c92)"/><rect x="1351" y="332.0" width="848" height="3.6" fill="url(#c93)"/><rect x="1351" y="335.0" width="848" height="3.6" fill="url(#c94)"/><rect x="1351" y="338.0" width="848" height="3.6" fill="url(#c95)"/><rect x="1351" y="341.0" width="848" height="3.6" fill="url(#c96)"/><rect x="1351" y="344.0" width="848" height="3.6" fill="url(#c97)"/><rect x="1351" y="347.0" width="848" height="3.6" fill="url(#c98)"/><rect x="1351" y="350.0" width="848" height="3.6" fill="url(#c99)"/><rect x="1351" y="353.0" width="848" height="3.6" fill="url(#c100)"/><rect x="1351" y="356.0" width="848" height="3.6" fill="url(#c101)"/><rect x="1351" y="359.0" width="848" height="3.6" fill="url(#c102)"/><rect x="1351" y="362.0" width="848" height="3.6" fill="url(#c103)"/><rect x="1351" y="365.0" width="848" height="3.6" fill="url(#c104)"/><rect x="1351" y="368.0" width="848" height="3.6" fill="url(#c105)"/><rect x="1351" y="371.0" width="848" height="3.6" fill="url(#c106)"/><rect x="1351" y="374.0" width="848" height="3.6" fill="url(#c107)"/><rect x="1351" y="377.0" width="848" height="3.6" fill="url(#c108)"/><rect x="1351" y="380.0" width="848" height="3.6" fill="url(#c109)"/><rect x="1351" y="383.0" width="848" height="3.6" fill="url(#c110)"/><rect x="1351" y="386.0" width="848" height="3.6" fill="url(#c111)"/><rect x="1351" y="389.0" width="848" height="3.6" fill="url(#c112)"/><rect x="1351" y="392.0" width="848" height="3.6" fill="url(#c113)"/><rect x="1351" y="395.0" width="848" height="3.6" fill="url(#c114)"/><rect x="1351" y="398.0" width="848" height="3.6" fill="url(#c115)"/><rect x="1351" y="401.0" width="848" height="3.6" fill="url(#c116)"/><rect x="1351" y="404.0" width="848" height="3.6" fill="url(#c117)"/><rect x="1351" y="407.0" width="848" height="3.6" fill="url(#c118)"/><rect x="1351" y="410.0" width="848" height="3.6" fill="url(#c119)"/><rect x="1351" y="413.0" width="848" height="3.6" fill="url(#c120)"/><rect x="1351" y="416.0" width="848" height="3.6" fill="url(#c121)"/><rect x="1351" y="419.0" width="848" height="3.6" fill="url(#c122)"/><rect x="1351" y="422.0" width="848" height="3.6" fill="url(#c123)"/><rect x="1351" y="425.0" width="848" height="3.6" fill="url(#c124)"/><rect x="1351" y="428.0" width="848" height="3.6" fill="url(#c125)"/><rect x="1351" y="431.0" width="848" height="3.6" fill="url(#c126)"/><rect x="1351" y="434.0" width="848" height="3.6" fill="url(#c127)"/><rect x="1351" y="437.0" width="848" height="3.6" fill="url(#c128)"/><rect x="1351" y="440.0" width="848" height="3.6" fill="url(#c129)"/><rect x="1351" y="443.0" width="848" height="3.6" fill="url(#c130)"/><rect x="1351" y="446.0" width="848" height="3.6" fill="url(#c131)"/><rect x="1351" y="449.0" width="848" height="3.6" fill="url(#c132)"/><rect x="1351" y="452.0" width="848" height="3.6" fill="url(#c133)"/><rect x="1351" y="455.0" width="848" height="3.6" fill="url(#c134)"/><rect x="1351" y="458.0" width="848" height="3.6" fill="url(#c135)"/><rect x="1351" y="461.0" width="848" height="3.6" fill="url(#c136)"/><rect x="1351" y="464.0" width="848" height="3.6" fill="url(#c137)"/><rect x="1351" y="467.0" width="848" height="3.6" fill="url(#c138)"/><rect x="1351" y="470.0" width="848" height="3.6" fill="url(#c139)"/><rect x="1351" y="473.0" width="848" height="3.6" fill="url(#c140)"/><rect x="1351" y="476.0" width="848" height="3.6" fill="url(#c141)"/><rect x="1351" y="479.0" width="848" height="3.6" fill="url(#c142)"/><rect x="1351" y="482.0" width="848" height="3.6" fill="url(#c143)"/><rect x="1351" y="485.0" width="848" height="3.6" fill="url(#c144)"/><rect x="1351" y="488.0" width="848" height="3.6" fill="url(#c145)"/><rect x="1351" y="491.0" width="848" height="3.6" fill="url(#c146)"/><rect x="1351" y="494.0" width="848" height="3.6" fill="url(#c147)"/><rect x="1351" y="497.0" width="848" height="3.6" fill="url(#c148)"/><rect x="1351" y="500.0" width="848" height="3.6" fill="url(#c149)"/><rect x="1351" y="503.0" width="848" height="3.6" fill="url(#c150)"/><rect x="1351" y="506.0" width="848" height="3.6" fill="url(#c151)"/><rect x="1351" y="509.0" width="848" height="3.6" fill="url(#c152)"/><rect x="1351" y="512.0" width="848" height="3.6" fill="url(#c153)"/><rect x="1351" y="515.0" width="848" height="3.6" fill="url(#c154)"/><rect x="1351" y="518.0" width="848" height="3.6" fill="url(#c155)"/><rect x="1351" y="521.0" width="848" height="3.6" fill="url(#c156)"/><rect x="1351" y="524.0" width="848" height="3.6" fill="url(#c157)"/><rect x="1351" y="527.0" width="848" height="3.6" fill="url(#c158)"/><rect x="1351" y="530.0" width="848" height="3.6" fill="url(#c159)"/><rect x="1351" y="533.0" width="848" height="3.6" fill="url(#c160)"/><rect x="1351" y="536.0" width="848" height="3.6" fill="url(#c161)"/><rect x="1351" y="539.0" width="848" height="3.6" fill="url(#c162)"/><rect x="1351" y="542.0" width="848" height="3.6" fill="url(#c163)"/><rect x="1351" y="545.0" width="848" height="3.6" fill="url(#c164)"/><rect x="1351" y="548.0" width="848" height="3.6" fill="url(#c165)"/><rect x="1351" y="551.0" width="848" height="3.6" fill="url(#c166)"/><rect x="1351" y="554.0" width="848" height="3.6" fill="url(#c167)"/><rect x="1351" y="557.0" width="848" height="3.6" fill="url(#c168)"/><rect x="1351" y="560.0" width="848" height="3.6" fill="url(#c169)"/><rect x="1351" y="563.0" width="848" height="3.6" fill="url(#c170)"/><rect x="1351" y="566.0" width="848" height="3.6" fill="url(#c171)"/><rect x="1351" y="569.0" width="848" height="3.6" fill="url(#c172)"/><rect x="1351" y="572.0" width="848" height="3.6" fill="url(#c173)"/><rect x="1351" y="575.0" width="848" height="3.6" fill="url(#c174)"/><rect x="1351" y="578.0" width="848" height="3.6" fill="url(#c175)"/><rect x="1351" y="581.0" width="848" height="3.6" fill="url(#c176)"/><rect x="1351" y="584.0" width="848" height="3.6" fill="url(#c177)"/><rect x="1351" y="587.0" width="848" height="3.6" fill="url(#c178)"/><rect x="1351" y="590.0" width="848" height="3.6" fill="url(#c179)"/><rect x="1351" y="593.0" width="848" height="3.6" fill="url(#c180)"/><rect x="1351" y="596.0" width="848" height="3.6" fill="url(#c181)"/><rect x="1351" y="599.0" width="848" height="3.6" fill="url(#c182)"/><rect x="1351" y="602.0" width="848" height="3.6" fill="url(#c183)"/><rect x="1351" y="605.0" width="848" height="3.6" fill="url(#c184)"/><rect x="1351" y="608.0" width="848" height="3.6" fill="url(#c185)"/><rect x="1351" y="611.0" width="848" height="3.6" fill="url(#c186)"/><rect x="1351" y="614.0" width="848" height="3.6" fill="url(#c187)"/><rect x="1351" y="617.0" width="848" height="3.6" fill="url(#c188)"/><rect x="1351" y="620.0" width="848" height="3.6" fill="url(#c189)"/><rect x="1351" y="623.0" width="848" height="3.6" fill="url(#c190)"/><rect x="1351" y="626.0" width="848" height="3.6" fill="url(#c191)"/><rect x="1351" y="629.0" width="848" height="3.6" fill="url(#c192)"/><rect x="1351" y="632.0" width="848" height="3.6" fill="url(#c193)"/><rect x="1351" y="635.0" width="848" height="3.6" fill="url(#c194)"/><rect x="1351" y="638.0" width="848" height="3.6" fill="url(#c195)"/><rect x="1351" y="641.0" width="848" height="3.6" fill="url(#c196)"/><rect x="1351" y="644.0" width="848" height="3.6" fill="url(#c197)"/><rect x="1351" y="647.0" width="848" height="3.6" fill="url(#c198)"/><rect x="1351" y="650.0" width="848" height="3.6" fill="url(#c199)"/><rect x="1351" y="653.0" width="848" height="3.6" fill="url(#c200)"/><rect x="1351" y="656.0" width="848" height="3.6" fill="url(#c201)"/><rect x="1351" y="659.0" width="848" height="3.6" fill="url(#c202)"/><rect x="1351" y="662.0" width="848" height="3.6" fill="url(#c203)"/><rect x="1351" y="665.0" width="848" height="3.6" fill="url(#c204)"/><rect x="1351" y="668.0" width="848" height="3.6" fill="url(#c205)"/><rect x="1351" y="671.0" width="848" height="3.6" fill="url(#c206)"/><rect x="1351" y="674.0" width="848" height="2.6" fill="url(#c207)"/></g>
<path d="M1713.6 673.0 L1713.6 672.9 L1713.5 672.9 L1713.5 672.9 L1713.4 672.9 L1713.4 673.0 L1713.3 673.1 L1713.3 673.1 L1713.2 673.2 L1713.1 673.3 L1713.1 673.3 L1713.0 673.3 L1712.9 673.3 L1712.8 673.3 L1712.7 673.3 L1712.6 673.3 L1712.5 673.4 L1712.4 673.5 L1712.3 673.5 L1712.2 673.6 L1712.0 673.7 L1711.9 673.7 L1711.8 673.7 L1711.7 673.7 L1711.5 673.7 L1711.3 673.7 L1711.2 673.7 L1711.0 673.7 L1710.8 673.7 L1710.6 673.7 L1710.4 673.7 L1710.2 673.7 L1710.0 673.8 L1709.8 673.8 L1709.5 673.8 L1709.2 673.7 L1708.9 673.6 L1708.6 673.4 L1708.1 673.2 L1707.7 673.0 L1707.1 672.7 L1706.5 672.3 L1705.8 671.8 L1705.1 671.3 L1704.3 670.8 L1703.5 670.2 L1702.6 669.6 L1701.7 668.9 L1700.7 668.1 L1699.7 667.3 L1698.5 666.4 L1697.3 665.4 L1695.9 664.4 L1694.5 663.2 L1693.0 662.0 L1691.4 660.6 L1689.7 659.2 L1688.0 657.8 L1686.2 656.2 L1684.3 654.6 L1682.4 653.0 L1680.3 651.2 L1678.2 649.5 L1675.9 647.6 L1673.5 645.6 L1671.0 643.5 L1668.3 641.3 L1665.4 639.0 L1662.4 636.5 L1659.3 634.0 L1656.1 631.3 L1652.7 628.6 L1649.3 625.7 L1645.7 622.8 L1642.0 619.6 L1638.1 616.3 L1634.0 612.7 L1629.8 608.9 L1625.3 604.9 L1620.8 600.7 L1616.1 596.4 L1611.2 591.8 L1606.2 586.9 L1601.0 581.6 L1595.5 575.8 L1589.6 569.4 L1583.3 562.2 L1576.5 554.4 L1569.5 545.9 L1562.1 536.7 L1554.4 527.0 L1546.5 516.6 L1538.4 505.6 L1530.1 494.0 L1521.6 481.8 L1512.9 468.9 L1504.1 455.5 L1495.2 441.4 L1486.1 426.9 L1477.0 412.0 L1467.9 396.7 L1458.9 381.3 L1449.9 365.7 L1441.2 350.0 L1432.7 334.3 L1424.6 318.7 L1417.0 303.1 L1409.8 287.8 L1403.0 272.7 L1396.7 258.0 L1390.8 243.7 L1385.3 229.9 L1380.2 216.6 L1375.6 204.0 L1371.5 191.9 L1367.8 180.5 L1364.6 169.8 L1361.8 159.8 L1359.4 150.4 L1357.5 141.7 L1355.9 133.6 L1354.7 126.0 L1353.8 119.0 L1353.2 112.5 L1353.0 106.5 L1353.0 100.9 L1353.4 95.6 L1354.0 90.8 L1354.9 86.3 L1356.1 82.2 L1357.6 78.4 L1359.3 74.9 L1361.2 71.8 L1363.4 68.9 L1365.8 66.4 L1368.3 64.1 L1371.1 62.2 L1374.0 60.5 L1377.1 59.1 L1380.3 57.8 L1383.6 56.8 L1387.1 56.0 L1390.6 55.4 L1394.3 54.9 L1398.0 54.5 L1401.8 54.2 L1405.7 53.9 L1409.7 53.7 L1413.7 53.6 L1417.7 53.5 L1421.7 53.5 L1425.7 53.5 L1429.7 53.5 L1433.7 53.6 L1437.8 53.6 L1441.8 53.7 L1445.9 53.9 L1450.1 54.1 L1454.3 54.3 L1458.5 54.5 L1462.9 54.7 L1467.3 55.0 L1471.7 55.3 L1476.2 55.6 L1480.8 56.0 L1485.5 56.4 L1490.3 56.8 L1495.1 57.2 L1500.0 57.6 L1505.0 58.1 L1510.1 58.6 L1515.3 59.1 L1520.6 59.6 L1526.0 60.2 L1531.6 60.7 L1537.2 61.3 L1542.9 61.9 L1548.8 62.5 L1554.8 63.2 L1560.9 63.9 L1567.2 64.5 L1573.5 65.2 L1580.0 66.0 L1586.7 66.7 L1593.4 67.5 L1600.3 68.2 L1607.4 69.0 L1614.6 69.8 L1621.9 70.7 L1629.4 71.5 L1637.1 72.4 L1644.8 73.3 L1652.8 74.2 L1660.8 75.1 L1669.1 76.0 L1677.4 77.0 L1685.9 78.0 L1694.6 79.0 L1703.4 80.0 L1712.3 81.0 L1721.4 82.1 L1730.7 83.1 L1740.0 84.2 L1749.5 85.3 L1759.2 86.4 L1768.9 87.5 L1778.7 88.7 L1788.7 89.8 L1798.7 91.0 L1808.9 92.1 L1819.1 93.3 L1829.4 94.5 L1839.8 95.7 L1850.1 96.9 L1860.5 98.1 L1870.7 99.3 L1880.8 100.4 L1890.9 101.6 L1900.9 102.7 L1910.8 103.9 L1920.7 105.0 L1930.6 106.2 L1940.5 107.3 L1950.3 108.4 L1959.9 109.5 L1969.4 110.6 L1978.6 111.7 L1987.6 112.7 L1996.5 113.7 L2005.1 114.7 L2013.5 115.6 L2021.7 116.6 L2029.7 117.5 L2037.5 118.4 L2045.1 119.3 L2052.4 120.1 L2059.5 121.0 L2066.4 121.8 L2073.0 122.5 L2079.4 123.3 L2085.6 124.0 L2091.6 124.6 L2097.3 125.3 L2102.9 125.9 L2108.2 126.5 L2113.4 127.1 L2118.4 127.7 L2123.2 128.3 L2127.8 128.8 L2132.4 129.3 L2136.8 129.8 L2141.1 130.3 L2145.3 130.8 L2149.3 131.3 L2153.3 131.7 L2157.1 132.2 L2160.8 132.6 L2164.3 133.0 L2167.8 133.4 L2171.1 133.8 L2174.2 134.2 L2177.3 134.5 L2180.2 134.8 L2183.0 135.1 L2185.6 135.4 L2188.1 135.7 L2190.5 136.0 L2192.8 136.3 L2194.9 136.5 L2197.0 136.7 L2198.9 137.0 L2200.7 137.2 L2202.5 137.4 L2204.2 137.6 L2205.8 137.8 L2207.3 137.9 L2208.7 138.1 L2210.1 138.3 L2211.3 138.4 L2212.5 138.5 L2213.6 138.7 L2214.5 138.8 L2215.4 138.9 L2216.2 139.0 L2216.9 139.0 L2217.7 139.1 L2218.4 139.2 L2219.1 139.3 L2219.8 139.4 L2220.4 139.4 L2221.0 139.5 L2221.6 139.6 L2222.1 139.6 L2222.6 139.7 L2223.1 139.8 L2223.7 139.8 L2224.2 139.9 L2224.7 139.9 L2225.2 140.0 L2225.8 140.1 L2226.3 140.1 L2226.8 140.2 L2227.3 140.2 L2227.7 140.3 L2228.2 140.3 L2228.6 140.4 L2228.9 140.4 L2229.3 140.5 L2229.6 140.5 L2229.9 140.5 L2230.1 140.6 L2230.3 140.6 L2230.5 140.6 L2230.6 140.6 L2230.7 140.6 L2230.9 140.7 L2230.9 140.7 L2231.0 140.7 L2231.1 140.7 L2231.2 140.7 L2231.2 140.7 Z M1987.39 122.88 L1527.50 79.84 L1598.72 519.45 Z" fill="#000" fill-opacity="0.4" fill-rule="evenodd"/>
</g>
<rect x="1350.00" y="37.00" width="850.00" height="2.00" fill="#8a8a8a"/>
<rect x="2198.00" y="37.00" width="2.00" height="655.00" fill="#8a8a8a"/>
<rect x="1350.00" y="37.00" width="2.00" height="655.00" fill="#a0a0a0"/>
<rect x="1350.00" y="690.00" width="850.00" height="2.00" fill="#a0a0a0"/>
<rect x="1350.00" y="691.00" width="2.00" height="8.00" fill="#d0d0d0"/>
<text x="1351.0" y="720.0" font-size="19.5" fill="#dcdcdc" text-anchor="middle" font-weight="normal">0</text>
<rect x="1420.60" y="691.00" width="2.00" height="8.00" fill="#d0d0d0"/>
<text x="1421.6" y="720.0" font-size="19.5" fill="#dcdcdc" text-anchor="middle" font-weight="normal">0.05</text>
<rect x="1491.20" y="691.00" width="2.00" height="8.00" fill="#d0d0d0"/>
<text x="1492.2" y="720.0" font-size="19.5" fill="#dcdcdc" text-anchor="middle" font-weight="normal">0.1</text>
<rect x="1561.80" y="691.00" width="2.00" height="8.00" fill="#d0d0d0"/>
<text x="1562.8" y="720.0" font-size="19.5" fill="#dcdcdc" text-anchor="middle" font-weight="normal">0.15</text>
<rect x="1632.40" y="691.00" width="2.00" height="8.00" fill="#d0d0d0"/>
<text x="1633.4" y="720.0" font-size="19.5" fill="#dcdcdc" text-anchor="middle" font-weight="normal">0.2</text>
<rect x="1703.00" y="691.00" width="2.00" height="8.00" fill="#d0d0d0"/>
<text x="1704.0" y="720.0" font-size="19.5" fill="#dcdcdc" text-anchor="middle" font-weight="normal">0.25</text>
<rect x="1773.60" y="691.00" width="2.00" height="8.00" fill="#d0d0d0"/>
<text x="1774.6" y="720.0" font-size="19.5" fill="#dcdcdc" text-anchor="middle" font-weight="normal">0.3</text>
<rect x="1844.20" y="691.00" width="2.00" height="8.00" fill="#d0d0d0"/>
<text x="1845.2" y="720.0" font-size="19.5" fill="#dcdcdc" text-anchor="middle" font-weight="normal">0.35</text>
<rect x="1914.80" y="691.00" width="2.00" height="8.00" fill="#d0d0d0"/>
<text x="1915.8" y="720.0" font-size="19.5" fill="#dcdcdc" text-anchor="middle" font-weight="normal">0.4</text>
<rect x="1985.40" y="691.00" width="2.00" height="8.00" fill="#d0d0d0"/>
<text x="1986.4" y="720.0" font-size="19.5" fill="#dcdcdc" text-anchor="middle" font-weight="normal">0.45</text>
<rect x="2056.00" y="691.00" width="2.00" height="8.00" fill="#d0d0d0"/>
<text x="2057.0" y="720.0" font-size="19.5" fill="#dcdcdc" text-anchor="middle" font-weight="normal">0.5</text>
<rect x="2126.60" y="691.00" width="2.00" height="8.00" fill="#d0d0d0"/>
<text x="2127.6" y="720.0" font-size="19.5" fill="#dcdcdc" text-anchor="middle" font-weight="normal">0.55</text>
<rect x="1342.50" y="690.00" width="8.00" height="2.00" fill="#d0d0d0"/>
<text x="1342.5" y="698.0" font-size="19.5" fill="#dcdcdc" text-anchor="end" font-weight="normal">0</text>
<rect x="1342.50" y="635.67" width="8.00" height="2.00" fill="#d0d0d0"/>
<text x="1342.5" y="643.7" font-size="19.5" fill="#dcdcdc" text-anchor="end" font-weight="normal">0.05</text>
<rect x="1342.50" y="581.35" width="8.00" height="2.00" fill="#d0d0d0"/>
<text x="1342.5" y="589.4" font-size="19.5" fill="#dcdcdc" text-anchor="end" font-weight="normal">0.1</text>
<rect x="1342.50" y="527.02" width="8.00" height="2.00" fill="#d0d0d0"/>
<text x="1342.5" y="535.0" font-size="19.5" fill="#dcdcdc" text-anchor="end" font-weight="normal">0.15</text>
<rect x="1342.50" y="472.70" width="8.00" height="2.00" fill="#d0d0d0"/>
<text x="1342.5" y="480.7" font-size="19.5" fill="#dcdcdc" text-anchor="end" font-weight="normal">0.2</text>
<rect x="1342.50" y="418.38" width="8.00" height="2.00" fill="#d0d0d0"/>
<text x="1342.5" y="426.4" font-size="19.5" fill="#dcdcdc" text-anchor="end" font-weight="normal">0.25</text>
<rect x="1342.50" y="364.05" width="8.00" height="2.00" fill="#d0d0d0"/>
<text x="1342.5" y="372.0" font-size="19.5" fill="#dcdcdc" text-anchor="end" font-weight="normal">0.3</text>
<rect x="1342.50" y="309.72" width="8.00" height="2.00" fill="#d0d0d0"/>
<text x="1342.5" y="317.7" font-size="19.5" fill="#dcdcdc" text-anchor="end" font-weight="normal">0.35</text>
<rect x="1342.50" y="255.40" width="8.00" height="2.00" fill="#d0d0d0"/>
<text x="1342.5" y="263.4" font-size="19.5" fill="#dcdcdc" text-anchor="end" font-weight="normal">0.4</text>
<rect x="1342.50" y="201.07" width="8.00" height="2.00" fill="#d0d0d0"/>
<text x="1342.5" y="209.1" font-size="19.5" fill="#dcdcdc" text-anchor="end" font-weight="normal">0.45</text>
<rect x="1342.50" y="146.75" width="8.00" height="2.00" fill="#d0d0d0"/>
<text x="1342.5" y="154.8" font-size="19.5" fill="#dcdcdc" text-anchor="end" font-weight="normal">0.5</text>
<rect x="1342.50" y="92.42" width="8.00" height="2.00" fill="#d0d0d0"/>
<text x="1342.5" y="100.4" font-size="19.5" fill="#dcdcdc" text-anchor="end" font-weight="normal">0.55</text>
<rect x="1604.3" y="175.5" width="17.2" height="17.2" fill="none" stroke="#fff" stroke-width="2.2"/>
<rect x="1588.6" y="177.3" width="17.2" height="17.2" fill="none" stroke="#fff" stroke-width="2.2"/>
<rect x="1570.5" y="180.4" width="17.2" height="17.2" fill="none" stroke="#fff" stroke-width="2.2"/>
<rect x="1553.9" y="182.2" width="17.2" height="17.2" fill="none" stroke="#fff" stroke-width="2.2"/>
<rect x="1537.4" y="186.3" width="17.2" height="17.2" fill="none" stroke="#fff" stroke-width="2.2"/>
<rect x="1617.2" y="211.3" width="17.2" height="17.2" fill="none" stroke="#fff" stroke-width="2.2"/>
<rect x="1613.3" y="260.4" width="17.2" height="17.2" fill="none" stroke="#fff" stroke-width="2.2"/>
<rect x="1608.5" y="320.1" width="17.2" height="17.2" fill="none" stroke="#fff" stroke-width="2.2"/>
<rect x="1600.9" y="395.4" width="17.2" height="17.2" fill="none" stroke="#fff" stroke-width="2.2"/>
<rect x="1590.3" y="509.3" width="17.2" height="17.2" fill="none" stroke="#fff" stroke-width="2.2"/>
<rect x="1644.3" y="193.3" width="17.2" height="17.2" fill="none" stroke="#fff" stroke-width="2.2"/>
<rect x="1669.4" y="218.8" width="17.2" height="17.2" fill="none" stroke="#fff" stroke-width="2.2"/>
<rect x="1694.4" y="245.8" width="17.2" height="17.2" fill="none" stroke="#fff" stroke-width="2.2"/>
<rect x="1729.3" y="280.2" width="17.2" height="17.2" fill="none" stroke="#fff" stroke-width="2.2"/>
<rect x="1772.3" y="321.1" width="17.2" height="17.2" fill="none" stroke="#fff" stroke-width="2.2"/>
<rect x="1685.4" y="161.1" width="17.2" height="17.2" fill="none" stroke="#fff" stroke-width="2.2"/>
<rect x="1756.3" y="148.2" width="17.2" height="17.2" fill="none" stroke="#fff" stroke-width="2.2"/>
<rect x="1821.2" y="139.3" width="17.2" height="17.2" fill="none" stroke="#fff" stroke-width="2.2"/>
<rect x="1893.3" y="126.4" width="17.2" height="17.2" fill="none" stroke="#fff" stroke-width="2.2"/>
<rect x="1978.4" y="112.4" width="17.2" height="17.2" fill="none" stroke="#fff" stroke-width="2.2"/>
<rect x="1624.3" y="148.1" width="17.2" height="17.2" fill="none" stroke="#fff" stroke-width="2.2"/>
<rect x="1626.1" y="128.0" width="17.2" height="17.2" fill="none" stroke="#fff" stroke-width="2.2"/>
<rect x="1627.8" y="111.4" width="17.2" height="17.2" fill="none" stroke="#fff" stroke-width="2.2"/>
<rect x="1628.4" y="95.0" width="17.2" height="17.2" fill="none" stroke="#fff" stroke-width="2.2"/>
<rect x="1629.3" y="78.8" width="17.2" height="17.2" fill="none" stroke="#fff" stroke-width="2.2"/>
<rect x="1593.3" y="143.5" width="17.2" height="17.2" fill="none" stroke="#fff" stroke-width="2.2"/>
<rect x="1570.2" y="121.3" width="17.2" height="17.2" fill="none" stroke="#fff" stroke-width="2.2"/>
<rect x="1550.3" y="101.4" width="17.2" height="17.2" fill="none" stroke="#fff" stroke-width="2.2"/>
<rect x="1534.2" y="85.2" width="17.2" height="17.2" fill="none" stroke="#fff" stroke-width="2.2"/>
<rect x="1517.4" y="68.7" width="17.2" height="17.2" fill="none" stroke="#fff" stroke-width="2.2"/>
<circle cx="1604.0" cy="183.8" r="5.9" fill="#a0b0b0" stroke="#000" stroke-width="1.5"/>
<circle cx="1588.0" cy="187.3" r="5.9" fill="#90b8b8" stroke="#000" stroke-width="1.5"/>
<circle cx="1569.6" cy="189.3" r="5.9" fill="#70b0b8" stroke="#000" stroke-width="1.5"/>
<circle cx="1553.4" cy="192.9" r="5.9" fill="#40b0b8" stroke="#000" stroke-width="1.5"/>
<circle cx="1537.4" cy="195.2" r="5.9" fill="#00b8c0" stroke="#000" stroke-width="1.5"/>
<circle cx="1618.4" cy="221.7" r="5.9" fill="#9898b0" stroke="#000" stroke-width="1.5"/>
<circle cx="1612.8" cy="270.2" r="5.9" fill="#8080b8" stroke="#000" stroke-width="1.5"/>
<circle cx="1607.5" cy="328.5" r="5.9" fill="#6868c0" stroke="#000" stroke-width="1.5"/>
<circle cx="1600.4" cy="402.6" r="5.9" fill="#5050c0" stroke="#000" stroke-width="1.5"/>
<circle cx="1594.8" cy="516.0" r="5.9" fill="#0000c0" stroke="#000" stroke-width="1.5"/>
<circle cx="1643.5" cy="204.0" r="5.9" fill="#c0a0b0" stroke="#000" stroke-width="1.5"/>
<circle cx="1669.0" cy="227.4" r="5.9" fill="#c090c0" stroke="#000" stroke-width="1.5"/>
<circle cx="1694.4" cy="254.3" r="5.9" fill="#c078c0" stroke="#000" stroke-width="1.5"/>
<circle cx="1728.3" cy="287.0" r="5.9" fill="#c050c0" stroke="#000" stroke-width="1.5"/>
<circle cx="1770.1" cy="326.4" r="5.9" fill="#c000c0" stroke="#000" stroke-width="1.5"/>
<circle cx="1686.7" cy="169.4" r="5.9" fill="#c09090" stroke="#000" stroke-width="1.5"/>
<circle cx="1760.8" cy="157.0" r="5.9" fill="#c06868" stroke="#000" stroke-width="1.5"/>
<circle cx="1826.0" cy="146.5" r="5.9" fill="#c05050" stroke="#000" stroke-width="1.5"/>
<circle cx="1900.5" cy="133.5" r="5.9" fill="#c04040" stroke="#000" stroke-width="1.5"/>
<circle cx="1979.5" cy="119.0" r="5.9" fill="#c00000" stroke="#000" stroke-width="1.5"/>
<circle cx="1623.8" cy="158.9" r="5.9" fill="#c0b8a0" stroke="#000" stroke-width="1.5"/>
<circle cx="1627.4" cy="136.8" r="5.9" fill="#c0b888" stroke="#000" stroke-width="1.5"/>
<circle cx="1629.3" cy="118.9" r="5.9" fill="#c0b070" stroke="#000" stroke-width="1.5"/>
<circle cx="1630.8" cy="104.4" r="5.9" fill="#c0b858" stroke="#000" stroke-width="1.5"/>
<circle cx="1632.9" cy="88.3" r="5.9" fill="#c0b800" stroke="#000" stroke-width="1.5"/>
<circle cx="1593.5" cy="153.5" r="5.9" fill="#a0b8a0" stroke="#000" stroke-width="1.5"/>
<circle cx="1571.3" cy="130.1" r="5.9" fill="#80a880" stroke="#000" stroke-width="1.5"/>
<circle cx="1553.4" cy="111.9" r="5.9" fill="#68a868" stroke="#000" stroke-width="1.5"/>
<circle cx="1535.5" cy="93.5" r="5.9" fill="#4aa84a" stroke="#000" stroke-width="1.5"/>
<circle cx="1519.5" cy="77.4" r="5.9" fill="#10a010" stroke="#000" stroke-width="1.5"/>
<rect x="1619.5" y="170.9" width="19.0" height="19.0" fill="none" stroke="#000" stroke-width="2.2"/>
<circle cx="1625.4" cy="182.3" r="5.9" fill="#ffffff" stroke="#000" stroke-width="1.5"/>
<rect x="1905.80" y="485.10" width="289.20" height="199.00" fill="#2a2a2a"/>
<rect x="1910.00" y="489.30" width="280.70" height="190.60" fill="#8a8a8a"/>
<g clip-path="url(#ic)"><rect x="1911.5" y="491.0" width="278.0" height="3.6" fill="url(#i0)"/><rect x="1911.5" y="494.0" width="278.0" height="3.6" fill="url(#i1)"/><rect x="1911.5" y="497.0" width="278.0" height="3.6" fill="url(#i2)"/><rect x="1911.5" y="500.0" width="278.0" height="3.6" fill="url(#i3)"/><rect x="1911.5" y="503.0" width="278.0" height="3.6" fill="url(#i4)"/><rect x="1911.5" y="506.0" width="278.0" height="3.6" fill="url(#i5)"/><rect x="1911.5" y="509.0" width="278.0" height="3.6" fill="url(#i6)"/><rect x="1911.5" y="512.0" width="278.0" height="3.6" fill="url(#i7)"/><rect x="1911.5" y="515.0" width="278.0" height="3.6" fill="url(#i8)"/><rect x="1911.5" y="518.0" width="278.0" height="3.6" fill="url(#i9)"/><rect x="1911.5" y="521.0" width="278.0" height="3.6" fill="url(#i10)"/><rect x="1911.5" y="524.0" width="278.0" height="3.6" fill="url(#i11)"/><rect x="1911.5" y="527.0" width="278.0" height="3.6" fill="url(#i12)"/><rect x="1911.5" y="530.0" width="278.0" height="3.6" fill="url(#i13)"/><rect x="1911.5" y="533.0" width="278.0" height="3.6" fill="url(#i14)"/><rect x="1911.5" y="536.0" width="278.0" height="3.6" fill="url(#i15)"/><rect x="1911.5" y="539.0" width="278.0" height="3.6" fill="url(#i16)"/><rect x="1911.5" y="542.0" width="278.0" height="3.6" fill="url(#i17)"/><rect x="1911.5" y="545.0" width="278.0" height="3.6" fill="url(#i18)"/><rect x="1911.5" y="548.0" width="278.0" height="3.6" fill="url(#i19)"/><rect x="1911.5" y="551.0" width="278.0" height="3.6" fill="url(#i20)"/><rect x="1911.5" y="554.0" width="278.0" height="3.6" fill="url(#i21)"/><rect x="1911.5" y="557.0" width="278.0" height="3.6" fill="url(#i22)"/><rect x="1911.5" y="560.0" width="278.0" height="3.6" fill="url(#i23)"/><rect x="1911.5" y="563.0" width="278.0" height="3.6" fill="url(#i24)"/><rect x="1911.5" y="566.0" width="278.0" height="3.6" fill="url(#i25)"/><rect x="1911.5" y="569.0" width="278.0" height="3.6" fill="url(#i26)"/><rect x="1911.5" y="572.0" width="278.0" height="3.6" fill="url(#i27)"/><rect x="1911.5" y="575.0" width="278.0" height="3.6" fill="url(#i28)"/><rect x="1911.5" y="578.0" width="278.0" height="3.6" fill="url(#i29)"/><rect x="1911.5" y="581.0" width="278.0" height="3.6" fill="url(#i30)"/><rect x="1911.5" y="584.0" width="278.0" height="3.6" fill="url(#i31)"/><rect x="1911.5" y="587.0" width="278.0" height="3.6" fill="url(#i32)"/><rect x="1911.5" y="590.0" width="278.0" height="3.6" fill="url(#i33)"/><rect x="1911.5" y="593.0" width="278.0" height="3.6" fill="url(#i34)"/><rect x="1911.5" y="596.0" width="278.0" height="3.6" fill="url(#i35)"/><rect x="1911.5" y="599.0" width="278.0" height="3.6" fill="url(#i36)"/><rect x="1911.5" y="602.0" width="278.0" height="3.6" fill="url(#i37)"/><rect x="1911.5" y="605.0" width="278.0" height="3.6" fill="url(#i38)"/><rect x="1911.5" y="608.0" width="278.0" height="3.6" fill="url(#i39)"/><rect x="1911.5" y="611.0" width="278.0" height="3.6" fill="url(#i40)"/><rect x="1911.5" y="614.0" width="278.0" height="3.6" fill="url(#i41)"/><rect x="1911.5" y="617.0" width="278.0" height="3.6" fill="url(#i42)"/><rect x="1911.5" y="620.0" width="278.0" height="3.6" fill="url(#i43)"/><rect x="1911.5" y="623.0" width="278.0" height="3.6" fill="url(#i44)"/><rect x="1911.5" y="626.0" width="278.0" height="3.6" fill="url(#i45)"/><rect x="1911.5" y="629.0" width="278.0" height="3.6" fill="url(#i46)"/><rect x="1911.5" y="632.0" width="278.0" height="3.6" fill="url(#i47)"/><rect x="1911.5" y="635.0" width="278.0" height="3.6" fill="url(#i48)"/><rect x="1911.5" y="638.0" width="278.0" height="3.6" fill="url(#i49)"/><rect x="1911.5" y="641.0" width="278.0" height="3.6" fill="url(#i50)"/><rect x="1911.5" y="644.0" width="278.0" height="3.6" fill="url(#i51)"/><rect x="1911.5" y="647.0" width="278.0" height="3.6" fill="url(#i52)"/><rect x="1911.5" y="650.0" width="278.0" height="3.6" fill="url(#i53)"/><rect x="1911.5" y="653.0" width="278.0" height="3.6" fill="url(#i54)"/><rect x="1911.5" y="656.0" width="278.0" height="3.6" fill="url(#i55)"/><rect x="1911.5" y="659.0" width="278.0" height="3.6" fill="url(#i56)"/><rect x="1911.5" y="662.0" width="278.0" height="3.6" fill="url(#i57)"/><rect x="1911.5" y="665.0" width="278.0" height="3.6" fill="url(#i58)"/><rect x="1911.5" y="668.0" width="278.0" height="3.6" fill="url(#i59)"/><rect x="1911.5" y="671.0" width="278.0" height="3.6" fill="url(#i60)"/><rect x="1911.5" y="674.0" width="278.0" height="3.6" fill="url(#i61)"/><rect x="1911.5" y="677.0" width="278.0" height="1.6" fill="url(#i62)"/></g>
<path d="M1911.5 491 L2189.5 491 L2189.5 657.2 L1911.5 510.6 Z" fill="#000" fill-opacity="0.4" clip-path="url(#ic)"/>
<circle cx="2020.4" cy="567.2" r="5.9" fill="#c0b800" stroke="#000" stroke-width="1.5"/>
<rect x="2041.2" y="575.0" width="17.3" height="17.3" fill="none" stroke="#fff" stroke-width="2.2"/>
<text x="66.1" y="779.8" font-size="39.7" fill="#f0f0f0" text-anchor="start" font-weight="normal" textLength="311.3" lengthAdjust="spacingAndGlyphs">Avg dE2000: 1.88</text>
<text x="71.4" y="834.6" font-size="39.7" fill="#f0f0f0" text-anchor="start" font-weight="normal" textLength="302.0" lengthAdjust="spacingAndGlyphs">Max dE2000: 3.8</text>
<text x="18.5" y="898.2" font-size="38.5" fill="#f0f0f0" text-anchor="start" font-weight="normal" textLength="292.1" lengthAdjust="spacingAndGlyphs">Current Reading</text>
<text x="18.7" y="943.2" font-size="29.6" fill="#f0f0f0" text-anchor="start" font-weight="normal" textLength="137.5" lengthAdjust="spacingAndGlyphs">x: 0.4143</text>
<text x="226.6" y="943.2" font-size="29.6" fill="#f0f0f0" text-anchor="start" font-weight="normal" textLength="137.4" lengthAdjust="spacingAndGlyphs">y: 0.5095</text>
<text x="18.7" y="998.3" font-size="29.6" fill="#f0f0f0" text-anchor="start" font-weight="normal" textLength="148.8" lengthAdjust="spacingAndGlyphs">fL: 168.58</text>
<text x="18.7" y="1043.8" font-size="29.6" fill="#f0f0f0" text-anchor="start" font-weight="normal" textLength="194.4" lengthAdjust="spacingAndGlyphs">cd/m²: 577.6</text>
<text x="564.0" y="781.7" font-size="20.5" fill="#dcdcdc" text-anchor="start" font-weight="normal" textLength="111.2" lengthAdjust="spacingAndGlyphs">RGB Balance</text>
<rect x="474.10" y="788.60" width="331.00" height="240.10" fill="#232323"/>
<rect x="474.10" y="813.00" width="331.00" height="2.00" fill="#8a8a8a"/>
<rect x="465.10" y="813.00" width="9.00" height="2.00" fill="#d0d0d0"/>
<text x="464.5" y="821.2" font-size="20" fill="#dcdcdc" text-anchor="end" font-weight="normal">104</text>
<rect x="474.10" y="861.00" width="331.00" height="2.00" fill="#8a8a8a"/>
<rect x="465.10" y="861.00" width="9.00" height="2.00" fill="#d0d0d0"/>
<text x="464.5" y="869.2" font-size="20" fill="#dcdcdc" text-anchor="end" font-weight="normal">102</text>
<rect x="474.10" y="909.00" width="331.00" height="2.00" fill="#8a8a8a"/>
<rect x="465.10" y="909.00" width="9.00" height="2.00" fill="#d0d0d0"/>
<text x="464.5" y="917.2" font-size="20" fill="#dcdcdc" text-anchor="end" font-weight="normal">100</text>
<rect x="474.10" y="957.00" width="331.00" height="2.00" fill="#8a8a8a"/>
<rect x="465.10" y="957.00" width="9.00" height="2.00" fill="#d0d0d0"/>
<text x="464.5" y="965.2" font-size="20" fill="#dcdcdc" text-anchor="end" font-weight="normal">98</text>
<rect x="474.10" y="1005.00" width="331.00" height="2.00" fill="#8a8a8a"/>
<rect x="465.10" y="1005.00" width="9.00" height="2.00" fill="#d0d0d0"/>
<text x="464.5" y="1013.2" font-size="20" fill="#dcdcdc" text-anchor="end" font-weight="normal">96</text>
<rect x="505.20" y="974.30" width="89.40" height="54.40" fill="#000"/>
<rect x="507.20" y="976.30" width="85.40" height="52.40" fill="url(#rb)"/>
<rect x="594.50" y="925.20" width="87.20" height="103.50" fill="#000"/>
<rect x="596.50" y="927.20" width="83.20" height="101.50" fill="url(#gbb)"/>
<rect x="682.20" y="916.30" width="88.50" height="112.40" fill="#000"/>
<rect x="684.20" y="918.30" width="84.50" height="110.40" fill="url(#bbb)"/>
<rect x="473.10" y="787.60" width="333.00" height="2.00" fill="#8a8a8a"/>
<rect x="804.10" y="787.60" width="2.00" height="242.10" fill="#8a8a8a"/>
<rect x="473.10" y="787.60" width="2.00" height="242.10" fill="#8a8a8a"/>
<rect x="473.10" y="1027.70" width="333.00" height="2.00" fill="#8a8a8a"/>
<rect x="473.10" y="1028.70" width="2.00" height="8.00" fill="#d0d0d0"/>
<rect x="804.10" y="1028.70" width="2.00" height="8.00" fill="#d0d0d0"/>
<text x="615.9" y="1050.6" font-size="20" fill="#dcdcdc" text-anchor="start" font-weight="normal" textLength="48.9" lengthAdjust="spacingAndGlyphs">100%</text>
<rect x="831.60" y="747.00" width="968.40" height="315.00" fill="#000"/>
<rect x="834.00" y="749.00" width="963.40" height="37.30" fill="url(#th)"/>
<rect x="834.00" y="786.30" width="963.40" height="34.51" fill="#3c3c3c"/>
<text x="857.5" y="810.7" font-size="22.5" fill="#f0f0f0" text-anchor="start" font-weight="bold" textLength="115.3" lengthAdjust="spacingAndGlyphs">x: CIE31</text>
<text x="1100.7" y="810.7" font-size="22" fill="#f0f0f0" text-anchor="start" font-weight="normal" textLength="89.5" lengthAdjust="spacingAndGlyphs">0.3264</text>
<text x="1241.8" y="810.7" font-size="22" fill="#f0f0f0" text-anchor="start" font-weight="normal" textLength="89.5" lengthAdjust="spacingAndGlyphs">0.3487</text>
<text x="1382.8" y="810.7" font-size="22" fill="#f0f0f0" text-anchor="start" font-weight="normal" textLength="89.5" lengthAdjust="spacingAndGlyphs">0.3699</text>
<text x="1523.9" y="810.7" font-size="22" fill="#f0f0f0" text-anchor="start" font-weight="normal" textLength="89.5" lengthAdjust="spacingAndGlyphs">0.3898</text>
<text x="1665.0" y="810.7" font-size="22" fill="#f0f0f0" text-anchor="start" font-weight="normal" textLength="89.5" lengthAdjust="spacingAndGlyphs">0.4143</text>
<rect x="834.00" y="820.51" width="963.40" height="34.51" fill="#7f7f7f"/>
<text x="857.5" y="844.9" font-size="22.5" fill="#f0f0f0" text-anchor="start" font-weight="bold" textLength="115.3" lengthAdjust="spacingAndGlyphs">y: CIE31</text>
<text x="1100.7" y="844.9" font-size="22" fill="#f0f0f0" text-anchor="start" font-weight="normal" textLength="89.5" lengthAdjust="spacingAndGlyphs">0.3659</text>
<text x="1241.8" y="844.9" font-size="22" fill="#f0f0f0" text-anchor="start" font-weight="normal" textLength="89.5" lengthAdjust="spacingAndGlyphs">0.4021</text>
<text x="1382.8" y="844.9" font-size="22" fill="#f0f0f0" text-anchor="start" font-weight="normal" textLength="89.5" lengthAdjust="spacingAndGlyphs">0.4361</text>
<text x="1523.9" y="844.9" font-size="22" fill="#f0f0f0" text-anchor="start" font-weight="normal" textLength="89.5" lengthAdjust="spacingAndGlyphs">0.4705</text>
<text x="1665.0" y="844.9" font-size="22" fill="#f0f0f0" text-anchor="start" font-weight="normal" textLength="89.5" lengthAdjust="spacingAndGlyphs">0.5095</text>
<rect x="834.00" y="854.72" width="963.40" height="34.51" fill="#3c3c3c"/>
<text x="857.5" y="879.1" font-size="22.5" fill="#f0f0f0" text-anchor="start" font-weight="bold" textLength="18.9" lengthAdjust="spacingAndGlyphs">Y</text>
<text x="1100.7" y="879.1" font-size="22" fill="#f0f0f0" text-anchor="start" font-weight="normal" textLength="122.9" lengthAdjust="spacingAndGlyphs">636.5697</text>
<text x="1241.8" y="879.1" font-size="22" fill="#f0f0f0" text-anchor="start" font-weight="normal" textLength="122.9" lengthAdjust="spacingAndGlyphs">614.6228</text>
<text x="1382.8" y="879.1" font-size="22" fill="#f0f0f0" text-anchor="start" font-weight="normal" textLength="122.9" lengthAdjust="spacingAndGlyphs">597.1332</text>
<text x="1523.9" y="879.1" font-size="22" fill="#f0f0f0" text-anchor="start" font-weight="normal" textLength="122.9" lengthAdjust="spacingAndGlyphs">585.5643</text>
<text x="1665.0" y="879.1" font-size="22" fill="#f0f0f0" text-anchor="start" font-weight="normal" textLength="122.9" lengthAdjust="spacingAndGlyphs">577.5977</text>
<rect x="834.00" y="888.93" width="963.40" height="34.51" fill="#7f7f7f"/>
<text x="857.5" y="913.3" font-size="22.5" fill="#f0f0f0" text-anchor="start" font-weight="bold" textLength="209.1" lengthAdjust="spacingAndGlyphs">Target x:CIE31</text>
<text x="1100.7" y="913.3" font-size="22" fill="#f0f0f0" text-anchor="start" font-weight="normal" textLength="89.5" lengthAdjust="spacingAndGlyphs">0.3344</text>
<text x="1241.8" y="913.3" font-size="22" fill="#f0f0f0" text-anchor="start" font-weight="normal" textLength="89.5" lengthAdjust="spacingAndGlyphs">0.3564</text>
<text x="1382.8" y="913.3" font-size="22" fill="#f0f0f0" text-anchor="start" font-weight="normal" textLength="89.5" lengthAdjust="spacingAndGlyphs">0.3773</text>
<text x="1523.9" y="913.3" font-size="22" fill="#f0f0f0" text-anchor="start" font-weight="normal" textLength="89.5" lengthAdjust="spacingAndGlyphs">0.3969</text>
<text x="1665.0" y="913.3" font-size="22" fill="#f0f0f0" text-anchor="start" font-weight="normal" textLength="89.5" lengthAdjust="spacingAndGlyphs">0.4193</text>
<rect x="834.00" y="923.14" width="963.40" height="34.51" fill="#3c3c3c"/>
<text x="857.5" y="947.5" font-size="22.5" fill="#f0f0f0" text-anchor="start" font-weight="bold" textLength="209.1" lengthAdjust="spacingAndGlyphs">Target y:CIE31</text>
<text x="1100.7" y="947.5" font-size="22" fill="#f0f0f0" text-anchor="start" font-weight="normal" textLength="89.5" lengthAdjust="spacingAndGlyphs">0.3648</text>
<text x="1241.8" y="947.5" font-size="22" fill="#f0f0f0" text-anchor="start" font-weight="normal" textLength="89.5" lengthAdjust="spacingAndGlyphs">0.4013</text>
<text x="1382.8" y="947.5" font-size="22" fill="#f0f0f0" text-anchor="start" font-weight="normal" textLength="89.5" lengthAdjust="spacingAndGlyphs">0.4358</text>
<text x="1523.9" y="947.5" font-size="22" fill="#f0f0f0" text-anchor="start" font-weight="normal" textLength="89.5" lengthAdjust="spacingAndGlyphs">0.4682</text>
<text x="1665.0" y="947.5" font-size="22" fill="#f0f0f0" text-anchor="start" font-weight="normal" textLength="89.5" lengthAdjust="spacingAndGlyphs">0.5053</text>
<rect x="834.00" y="957.35" width="963.40" height="34.51" fill="#7f7f7f"/>
<text x="857.5" y="981.7" font-size="22.5" fill="#f0f0f0" text-anchor="start" font-weight="bold" textLength="121.7" lengthAdjust="spacingAndGlyphs">Target Y</text>
<text x="1100.7" y="981.7" font-size="22" fill="#f0f0f0" text-anchor="start" font-weight="normal" textLength="122.9" lengthAdjust="spacingAndGlyphs">632.1719</text>
<text x="1241.8" y="981.7" font-size="22" fill="#f0f0f0" text-anchor="start" font-weight="normal" textLength="122.9" lengthAdjust="spacingAndGlyphs">621.0754</text>
<text x="1382.8" y="981.7" font-size="22" fill="#f0f0f0" text-anchor="start" font-weight="normal" textLength="122.9" lengthAdjust="spacingAndGlyphs">612.5494</text>
<text x="1523.9" y="981.7" font-size="22" fill="#f0f0f0" text-anchor="start" font-weight="normal" textLength="122.9" lengthAdjust="spacingAndGlyphs">605.8581</text>
<text x="1665.0" y="981.7" font-size="22" fill="#f0f0f0" text-anchor="start" font-weight="normal" textLength="122.9" lengthAdjust="spacingAndGlyphs">599.3892</text>
<rect x="834.00" y="991.56" width="963.40" height="34.51" fill="#3c3c3c"/>
<text x="857.5" y="1016.0" font-size="22.5" fill="#f0f0f0" text-anchor="start" font-weight="bold" textLength="120.4" lengthAdjust="spacingAndGlyphs">ΔE 2000</text>
<text x="1100.7" y="1016.0" font-size="22" fill="#f0f0f0" text-anchor="start" font-weight="normal" textLength="89.5" lengthAdjust="spacingAndGlyphs">3.8005</text>
<text x="1241.8" y="1016.0" font-size="22" fill="#f0f0f0" text-anchor="start" font-weight="normal" textLength="89.5" lengthAdjust="spacingAndGlyphs">2.4590</text>
<text x="1382.8" y="1016.0" font-size="22" fill="#f0f0f0" text-anchor="start" font-weight="normal" textLength="89.5" lengthAdjust="spacingAndGlyphs">1.9965</text>
<text x="1523.9" y="1016.0" font-size="22" fill="#f0f0f0" text-anchor="start" font-weight="normal" textLength="89.5" lengthAdjust="spacingAndGlyphs">1.9503</text>
<text x="1665.0" y="1016.0" font-size="22" fill="#f0f0f0" text-anchor="start" font-weight="normal" textLength="89.5" lengthAdjust="spacingAndGlyphs">1.5367</text>
<rect x="834.00" y="1025.77" width="963.40" height="34.51" fill="#7f7f7f"/>
<text x="857.5" y="1050.2" font-size="22.5" fill="#f0f0f0" text-anchor="start" font-weight="bold" textLength="96.0" lengthAdjust="spacingAndGlyphs">ΔE ITP</text>
<text x="1100.7" y="1050.2" font-size="22" fill="#f0f0f0" text-anchor="start" font-weight="normal" textLength="89.5" lengthAdjust="spacingAndGlyphs">5.4003</text>
<text x="1241.8" y="1050.2" font-size="22" fill="#f0f0f0" text-anchor="start" font-weight="normal" textLength="89.5" lengthAdjust="spacingAndGlyphs">4.8985</text>
<text x="1382.8" y="1050.2" font-size="22" fill="#f0f0f0" text-anchor="start" font-weight="normal" textLength="89.5" lengthAdjust="spacingAndGlyphs">4.8336</text>
<text x="1523.9" y="1050.2" font-size="22" fill="#f0f0f0" text-anchor="start" font-weight="normal" textLength="89.5" lengthAdjust="spacingAndGlyphs">5.0803</text>
<text x="1665.0" y="1050.2" font-size="22" fill="#f0f0f0" text-anchor="start" font-weight="normal" textLength="89.5" lengthAdjust="spacingAndGlyphs">4.4647</text>
<text x="1135.2" y="775.8" font-size="20" fill="#f0f0f0" text-anchor="start" font-weight="bold" textLength="54.7" lengthAdjust="spacingAndGlyphs">20%</text>
<text x="1276.2" y="775.8" font-size="20" fill="#f0f0f0" text-anchor="start" font-weight="bold" textLength="54.7" lengthAdjust="spacingAndGlyphs">40%</text>
<text x="1417.3" y="775.8" font-size="20" fill="#f0f0f0" text-anchor="start" font-weight="bold" textLength="54.7" lengthAdjust="spacingAndGlyphs">60%</text>
<text x="1558.4" y="775.8" font-size="20" fill="#f0f0f0" text-anchor="start" font-weight="bold" textLength="54.7" lengthAdjust="spacingAndGlyphs">80%</text>
<text x="1691.7" y="775.8" font-size="20" fill="#f0f0f0" text-anchor="start" font-weight="bold" textLength="70.1" lengthAdjust="spacingAndGlyphs">100%</text>
<rect x="0.00" y="1220.60" width="2213.00" height="63.40" fill="url(#bs)"/>
<rect x="1.4" y="1221.2" width="44.6" height="62" rx="3" fill="url(#btn)"/>
<circle cx="23.5" cy="1229.7" r="7" fill="#707070"/>
<path d="M19 1232.5 L28 1232.5 L23.5 1227 Z" fill="#111"/>
<rect x="6" y="1247" width="35.2" height="30" rx="2.5" fill="#ffff00" stroke="#7a7a00" stroke-width="0.6"/>
<rect x="52.0" y="1221" width="150.1" height="63" rx="4" fill="url(#btn)"/>
<rect x="57.2" y="1226.3" width="139.9" height="35.6" rx="3" fill="#c2c3a5" stroke="#7e7e60" stroke-width="0.8"/>
<text x="115.9" y="1278.0" font-size="12.5" fill="#2a2a2a" text-anchor="start" font-weight="bold" textLength="22.3" lengthAdjust="spacingAndGlyphs">20%</text>
<rect x="204.1" y="1221" width="150.1" height="63" rx="4" fill="url(#btn)"/>
<rect x="209.2" y="1226.3" width="139.9" height="35.6" rx="3" fill="#c3c387" stroke="#7e7e60" stroke-width="0.8"/>
<text x="267.9" y="1278.0" font-size="12.5" fill="#2a2a2a" text-anchor="start" font-weight="bold" textLength="22.3" lengthAdjust="spacingAndGlyphs">40%</text>
<rect x="356.1" y="1221" width="150.1" height="63" rx="4" fill="url(#btn)"/>
<rect x="361.3" y="1226.3" width="139.9" height="35.6" rx="3" fill="#c3c36d" stroke="#7e7e60" stroke-width="0.8"/>
<text x="419.9" y="1278.0" font-size="12.5" fill="#2a2a2a" text-anchor="start" font-weight="bold" textLength="22.3" lengthAdjust="spacingAndGlyphs">60%</text>
<rect x="508.2" y="1221" width="150.1" height="63" rx="4" fill="url(#btn)"/>
<rect x="513.4" y="1226.3" width="139.9" height="35.6" rx="3" fill="#c3c44f" stroke="#7e7e60" stroke-width="0.8"/>
<text x="572.0" y="1278.0" font-size="12.5" fill="#2a2a2a" text-anchor="start" font-weight="bold" textLength="22.3" lengthAdjust="spacingAndGlyphs">80%</text>
<rect x="660.4" y="1221" width="150" height="63" rx="4" fill="#1e1e1e"/>
<rect x="665.2" y="1225.6" width="140.3" height="36.4" rx="3" fill="#c4c400"/>
<text x="735.2" y="1278.0" font-size="12.5" fill="#ffffff" text-anchor="middle" font-weight="bold">100%</text>
<rect x="0.00" y="1282.50" width="2213.00" height="1.50" fill="#4a3028"/>
<rect x="1940.4" y="1221" width="272.6" height="29.4" rx="3" fill="url(#tb)"/>
<rect x="1986.40" y="1222.00" width="1.00" height="28.00" fill="#505050"/>
<rect x="2031.40" y="1222.00" width="1.00" height="28.00" fill="#505050"/>
<rect x="2076.80" y="1222.00" width="1.00" height="28.00" fill="#505050"/>
<rect x="2121.80" y="1222.00" width="1.00" height="28.00" fill="#505050"/>
<rect x="2166.70" y="1222.00" width="1.00" height="28.00" fill="#505050"/>
<rect x="1890.5" y="1221" width="48" height="62.5" rx="3" fill="url(#tb)"/>
<rect x="1900" y="1246" width="28" height="28" rx="3" fill="none" stroke="#222" stroke-width="2"/>
<rect x="1907.50" y="1253.50" width="13.00" height="13.00" fill="#000"/>
<rect x="1940.4" y="1252.4" width="272.6" height="31" rx="3" fill="url(#tb)"/>
<rect x="2076.00" y="1253.00" width="1.00" height="30.00" fill="#404040"/>
<circle cx="1970.8" cy="1267" r="9.9" fill="url(#cg)"/>
<circle cx="2183.6" cy="1267" r="9.9" fill="url(#cg)"/>
<path d="M1970.5 1262.3 L1966 1267 L1970.5 1271.7 M1975.2 1262.3 L1970.7 1267 L1975.2 1271.7" fill="none" stroke="#2a2a2a" stroke-width="1.6"/>
<path d="M2179.2 1262.3 L2183.7 1267 L2179.2 1271.7 M2183.9 1262.3 L2188.4 1267 L2183.9 1271.7" fill="none" stroke="#2a2a2a" stroke-width="1.6"/>
<text x="1997.0" y="1274.6" font-size="22" fill="#2e2e2e" text-anchor="start" font-weight="bold" textLength="52.0" lengthAdjust="spacingAndGlyphs">Back</text>
<text x="2103.7" y="1274.6" font-size="22" fill="#2e2e2e" text-anchor="start" font-weight="bold" textLength="53.3" lengthAdjust="spacingAndGlyphs">Next</text>
<path d="M1840 1245.5 L1878.5 1241.5 L1876 1214.5 L1830.5 1204.5 L1832 1252 L1861 1264.5 L1913 1249.5 L1886 1245" fill="none" stroke="#c8c8c8" stroke-opacity="0.85" stroke-width="7.5" stroke-linejoin="round" stroke-linecap="round"/>
<path d="M1840 1245.5 L1878.5 1241.5 L1876 1214.5 L1830.5 1204.5 L1832 1252 L1861 1264.5 L1913 1249.5 L1886 1245" fill="none" stroke="#8c2020" stroke-opacity="0.8" stroke-width="4.8" stroke-linejoin="round" stroke-linecap="round"/>
<path d="M1841.6 1219.1 Q1842.5 1216 1845.8 1215.9 Q1849 1214.8 1850.7 1215.6 L1859.8 1226.4 L1884.3 1200.2 Q1887.5 1199.5 1885.8 1203.2 L1858.4 1239.1 L1856.3 1239.1 Z" fill="#2a2a2a" stroke="#c8c8c8" stroke-width="1.4" stroke-linejoin="round"/>
<text x="0" y="0" font-size="37" font-weight="bold" fill="#8a2a2a" fill-opacity="0.9" stroke="#d0d0d0" stroke-width="2.6" paint-order="stroke" transform="translate(1886.5 1240.7)" textLength="192" lengthAdjust="spacingAndGlyphs">NOTEBOOK</text>
<text x="0" y="0" font-size="37" font-weight="bold" fill="#2e2e2e" fill-opacity="0.75" stroke="#d0d0d0" stroke-width="2.6" paint-order="stroke" transform="translate(2077 1240.7)" textLength="126" lengthAdjust="spacingAndGlyphs">CHECK</text>
</svg>
</body></html>
